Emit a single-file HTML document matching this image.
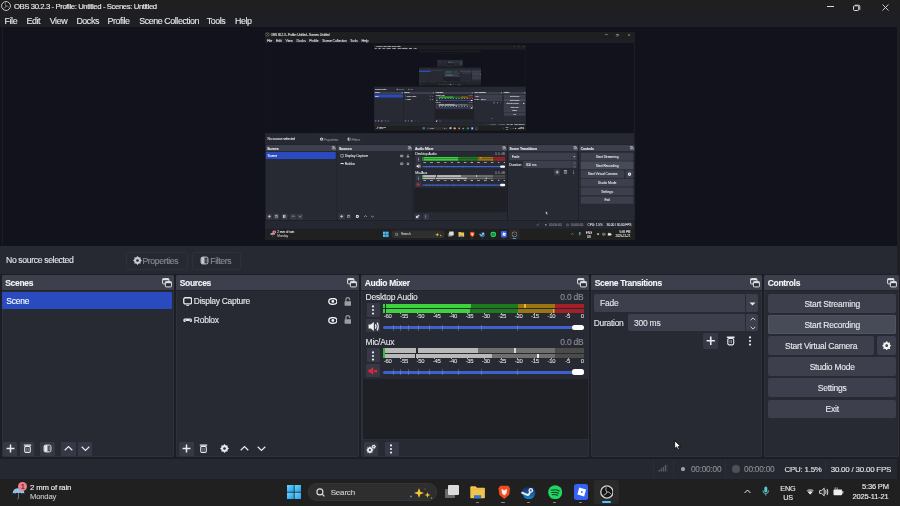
<!DOCTYPE html><html><head><meta charset="utf-8"><style>
html,body{margin:0;padding:0;background:#16171c;}
.scr{position:relative;width:900px;height:506px;overflow:hidden;font-family:"Liberation Sans", sans-serif;will-change:transform;}
.r,.t,.nest{position:absolute;}
.t{white-space:nowrap;-webkit-text-stroke:0.12px currentColor;}
.nest{width:900px;height:506px;transform-origin:0 0;transform:scale(0.41111);overflow:hidden;}
</style></head><body><div class="scr"><div class="r" style="left:0.00px;top:0.00px;width:900.00px;height:506.00px;background:#1c1e25;"></div>
<div class="r" style="left:0.00px;top:0.00px;width:900.00px;height:13.00px;background:#1f1f1f;"></div>
<svg class="r" style="left:1.00px;top:1.30px;" width="10" height="10" viewBox="0 0 14 14"><circle cx="7" cy="7" r="6.2" fill="#141414" stroke="#d4d4d4" stroke-width="1.3"/><path d="M7 7Q5.2 5.6 6.2 2.2M7 7Q9.1 6.3 11 8.9M7 7Q6.9 9.3 3.6 10.2" fill="none" stroke="#bdbdbd" stroke-width="0.9"/></svg>
<div class="t" style="left:13.90px;top:3.05px;font-size:7.74px;line-height:7.74px;color:#ececec;letter-spacing:-0.401px;">OBS 30.2.3 - Profile: Untitled - Scenes: Untitled</div>
<div class="r" style="left:827.00px;top:5.80px;width:6.50px;height:0.80px;background:#d8d8d8;"></div>
<svg class="r" style="left:853.00px;top:3.50px;" width="8" height="7" viewBox="0 0 8 7"><rect x="0.5" y="1.8" width="5.2" height="4.7" rx="1" fill="none" stroke="#ddd" stroke-width="1"/><path d="M2 1.2h3.8a1 1 0 0 1 1 1v3.6" fill="none" stroke="#ddd" stroke-width="0.9"/></svg>
<svg class="r" style="left:881.50px;top:3.50px;" width="7" height="7" viewBox="0 0 7 7"><path d="M0.5 0.5L6.5 6.5M6.5 0.5L0.5 6.5" stroke="#ddd" stroke-width="0.9"/></svg>
<div class="r" style="left:0.00px;top:13.00px;width:900.00px;height:14.00px;background:#1e1f24;"></div>
<div class="t" style="left:4.60px;top:17.06px;font-size:8.9px;line-height:8.9px;color:#e8e8ea;letter-spacing:-0.432px;">File</div>
<div class="t" style="left:26.60px;top:17.06px;font-size:8.9px;line-height:8.9px;color:#e8e8ea;letter-spacing:-0.432px;">Edit</div>
<div class="t" style="left:49.80px;top:17.06px;font-size:8.9px;line-height:8.9px;color:#e8e8ea;letter-spacing:-0.432px;">View</div>
<div class="t" style="left:76.40px;top:17.06px;font-size:8.9px;line-height:8.9px;color:#e8e8ea;letter-spacing:-0.432px;">Docks</div>
<div class="t" style="left:107.40px;top:17.06px;font-size:8.9px;line-height:8.9px;color:#e8e8ea;letter-spacing:-0.432px;">Profile</div>
<div class="t" style="left:139.30px;top:17.06px;font-size:8.9px;line-height:8.9px;color:#e8e8ea;letter-spacing:-0.432px;">Scene Collection</div>
<div class="t" style="left:206.70px;top:17.06px;font-size:8.9px;line-height:8.9px;color:#e8e8ea;letter-spacing:-0.432px;">Tools</div>
<div class="t" style="left:235.00px;top:17.06px;font-size:8.9px;line-height:8.9px;color:#e8e8ea;letter-spacing:-0.432px;">Help</div>
<div class="r" style="left:0.00px;top:27.00px;width:900.00px;height:218.50px;background:#11121c;"></div>
<div class="r" style="left:2.00px;top:27.00px;width:1.00px;height:218.00px;background:#1c1d24;"></div>
<div class="r" style="left:897.00px;top:27.00px;width:3.00px;height:479.00px;background:#1d1f25;"></div>
<div class="nest" style="left:265px;top:32.4px;"><div class="r" style="left:0.00px;top:0.00px;width:900.00px;height:506.00px;background:#1c1e25;"></div>
<div class="r" style="left:0.00px;top:0.00px;width:900.00px;height:13.00px;background:#1f1f1f;"></div>
<svg class="r" style="left:1.00px;top:1.30px;" width="10" height="10" viewBox="0 0 14 14"><circle cx="7" cy="7" r="6.2" fill="#141414" stroke="#d4d4d4" stroke-width="1.3"/><path d="M7 7Q5.2 5.6 6.2 2.2M7 7Q9.1 6.3 11 8.9M7 7Q6.9 9.3 3.6 10.2" fill="none" stroke="#bdbdbd" stroke-width="0.9"/></svg>
<div class="t" style="left:13.90px;top:3.05px;font-size:7.74px;line-height:7.74px;color:#ececec;letter-spacing:-0.401px;">OBS 30.2.3 - Profile: Untitled - Scenes: Untitled</div>
<div class="r" style="left:827.00px;top:5.80px;width:6.50px;height:0.80px;background:#d8d8d8;"></div>
<svg class="r" style="left:853.00px;top:3.50px;" width="8" height="7" viewBox="0 0 8 7"><rect x="0.5" y="1.8" width="5.2" height="4.7" rx="1" fill="none" stroke="#ddd" stroke-width="1"/><path d="M2 1.2h3.8a1 1 0 0 1 1 1v3.6" fill="none" stroke="#ddd" stroke-width="0.9"/></svg>
<svg class="r" style="left:881.50px;top:3.50px;" width="7" height="7" viewBox="0 0 7 7"><path d="M0.5 0.5L6.5 6.5M6.5 0.5L0.5 6.5" stroke="#ddd" stroke-width="0.9"/></svg>
<div class="r" style="left:0.00px;top:13.00px;width:900.00px;height:14.00px;background:#1e1f24;"></div>
<div class="t" style="left:4.60px;top:17.06px;font-size:8.9px;line-height:8.9px;color:#e8e8ea;letter-spacing:-0.432px;">File</div>
<div class="t" style="left:26.60px;top:17.06px;font-size:8.9px;line-height:8.9px;color:#e8e8ea;letter-spacing:-0.432px;">Edit</div>
<div class="t" style="left:49.80px;top:17.06px;font-size:8.9px;line-height:8.9px;color:#e8e8ea;letter-spacing:-0.432px;">View</div>
<div class="t" style="left:76.40px;top:17.06px;font-size:8.9px;line-height:8.9px;color:#e8e8ea;letter-spacing:-0.432px;">Docks</div>
<div class="t" style="left:107.40px;top:17.06px;font-size:8.9px;line-height:8.9px;color:#e8e8ea;letter-spacing:-0.432px;">Profile</div>
<div class="t" style="left:139.30px;top:17.06px;font-size:8.9px;line-height:8.9px;color:#e8e8ea;letter-spacing:-0.432px;">Scene Collection</div>
<div class="t" style="left:206.70px;top:17.06px;font-size:8.9px;line-height:8.9px;color:#e8e8ea;letter-spacing:-0.432px;">Tools</div>
<div class="t" style="left:235.00px;top:17.06px;font-size:8.9px;line-height:8.9px;color:#e8e8ea;letter-spacing:-0.432px;">Help</div>
<div class="r" style="left:0.00px;top:27.00px;width:900.00px;height:218.50px;background:#11121c;"></div>
<div class="r" style="left:2.00px;top:27.00px;width:1.00px;height:218.00px;background:#1c1d24;"></div>
<div class="r" style="left:897.00px;top:27.00px;width:3.00px;height:479.00px;background:#1d1f25;"></div>
<div class="nest" style="left:265px;top:32.4px;"><div class="r" style="left:0.00px;top:0.00px;width:900.00px;height:506.00px;background:#1c1e25;"></div>
<div class="r" style="left:0.00px;top:0.00px;width:900.00px;height:13.00px;background:#1f1f1f;"></div>
<svg class="r" style="left:1.00px;top:1.30px;" width="10" height="10" viewBox="0 0 14 14"><circle cx="7" cy="7" r="6.2" fill="#141414" stroke="#d4d4d4" stroke-width="1.3"/><path d="M7 7Q5.2 5.6 6.2 2.2M7 7Q9.1 6.3 11 8.9M7 7Q6.9 9.3 3.6 10.2" fill="none" stroke="#bdbdbd" stroke-width="0.9"/></svg>
<div class="t" style="left:13.90px;top:3.05px;font-size:7.74px;line-height:7.74px;color:#ececec;letter-spacing:-0.401px;">OBS 30.2.3 - Profile: Untitled - Scenes: Untitled</div>
<div class="r" style="left:827.00px;top:5.80px;width:6.50px;height:0.80px;background:#d8d8d8;"></div>
<svg class="r" style="left:853.00px;top:3.50px;" width="8" height="7" viewBox="0 0 8 7"><rect x="0.5" y="1.8" width="5.2" height="4.7" rx="1" fill="none" stroke="#ddd" stroke-width="1"/><path d="M2 1.2h3.8a1 1 0 0 1 1 1v3.6" fill="none" stroke="#ddd" stroke-width="0.9"/></svg>
<svg class="r" style="left:881.50px;top:3.50px;" width="7" height="7" viewBox="0 0 7 7"><path d="M0.5 0.5L6.5 6.5M6.5 0.5L0.5 6.5" stroke="#ddd" stroke-width="0.9"/></svg>
<div class="r" style="left:0.00px;top:13.00px;width:900.00px;height:14.00px;background:#1e1f24;"></div>
<div class="t" style="left:4.60px;top:17.06px;font-size:8.9px;line-height:8.9px;color:#e8e8ea;letter-spacing:-0.432px;">File</div>
<div class="t" style="left:26.60px;top:17.06px;font-size:8.9px;line-height:8.9px;color:#e8e8ea;letter-spacing:-0.432px;">Edit</div>
<div class="t" style="left:49.80px;top:17.06px;font-size:8.9px;line-height:8.9px;color:#e8e8ea;letter-spacing:-0.432px;">View</div>
<div class="t" style="left:76.40px;top:17.06px;font-size:8.9px;line-height:8.9px;color:#e8e8ea;letter-spacing:-0.432px;">Docks</div>
<div class="t" style="left:107.40px;top:17.06px;font-size:8.9px;line-height:8.9px;color:#e8e8ea;letter-spacing:-0.432px;">Profile</div>
<div class="t" style="left:139.30px;top:17.06px;font-size:8.9px;line-height:8.9px;color:#e8e8ea;letter-spacing:-0.432px;">Scene Collection</div>
<div class="t" style="left:206.70px;top:17.06px;font-size:8.9px;line-height:8.9px;color:#e8e8ea;letter-spacing:-0.432px;">Tools</div>
<div class="t" style="left:235.00px;top:17.06px;font-size:8.9px;line-height:8.9px;color:#e8e8ea;letter-spacing:-0.432px;">Help</div>
<div class="r" style="left:0.00px;top:27.00px;width:900.00px;height:218.50px;background:#11121c;"></div>
<div class="r" style="left:2.00px;top:27.00px;width:1.00px;height:218.00px;background:#1c1d24;"></div>
<div class="r" style="left:897.00px;top:27.00px;width:3.00px;height:479.00px;background:#1d1f25;"></div>
<div class="nest" style="left:265px;top:32.4px;"><div class="r" style="left:0.00px;top:0.00px;width:900.00px;height:506.00px;background:#1c1e25;"></div>
<div class="r" style="left:0.00px;top:0.00px;width:900.00px;height:13.00px;background:#1f1f1f;"></div>
<svg class="r" style="left:1.00px;top:1.30px;" width="10" height="10" viewBox="0 0 14 14"><circle cx="7" cy="7" r="6.2" fill="#141414" stroke="#d4d4d4" stroke-width="1.3"/><path d="M7 7Q5.2 5.6 6.2 2.2M7 7Q9.1 6.3 11 8.9M7 7Q6.9 9.3 3.6 10.2" fill="none" stroke="#bdbdbd" stroke-width="0.9"/></svg>
<div class="t" style="left:13.90px;top:3.05px;font-size:7.74px;line-height:7.74px;color:#ececec;letter-spacing:-0.401px;">OBS 30.2.3 - Profile: Untitled - Scenes: Untitled</div>
<div class="r" style="left:827.00px;top:5.80px;width:6.50px;height:0.80px;background:#d8d8d8;"></div>
<svg class="r" style="left:853.00px;top:3.50px;" width="8" height="7" viewBox="0 0 8 7"><rect x="0.5" y="1.8" width="5.2" height="4.7" rx="1" fill="none" stroke="#ddd" stroke-width="1"/><path d="M2 1.2h3.8a1 1 0 0 1 1 1v3.6" fill="none" stroke="#ddd" stroke-width="0.9"/></svg>
<svg class="r" style="left:881.50px;top:3.50px;" width="7" height="7" viewBox="0 0 7 7"><path d="M0.5 0.5L6.5 6.5M6.5 0.5L0.5 6.5" stroke="#ddd" stroke-width="0.9"/></svg>
<div class="r" style="left:0.00px;top:13.00px;width:900.00px;height:14.00px;background:#1e1f24;"></div>
<div class="t" style="left:4.60px;top:17.06px;font-size:8.9px;line-height:8.9px;color:#e8e8ea;letter-spacing:-0.432px;">File</div>
<div class="t" style="left:26.60px;top:17.06px;font-size:8.9px;line-height:8.9px;color:#e8e8ea;letter-spacing:-0.432px;">Edit</div>
<div class="t" style="left:49.80px;top:17.06px;font-size:8.9px;line-height:8.9px;color:#e8e8ea;letter-spacing:-0.432px;">View</div>
<div class="t" style="left:76.40px;top:17.06px;font-size:8.9px;line-height:8.9px;color:#e8e8ea;letter-spacing:-0.432px;">Docks</div>
<div class="t" style="left:107.40px;top:17.06px;font-size:8.9px;line-height:8.9px;color:#e8e8ea;letter-spacing:-0.432px;">Profile</div>
<div class="t" style="left:139.30px;top:17.06px;font-size:8.9px;line-height:8.9px;color:#e8e8ea;letter-spacing:-0.432px;">Scene Collection</div>
<div class="t" style="left:206.70px;top:17.06px;font-size:8.9px;line-height:8.9px;color:#e8e8ea;letter-spacing:-0.432px;">Tools</div>
<div class="t" style="left:235.00px;top:17.06px;font-size:8.9px;line-height:8.9px;color:#e8e8ea;letter-spacing:-0.432px;">Help</div>
<div class="r" style="left:0.00px;top:27.00px;width:900.00px;height:218.50px;background:#11121c;"></div>
<div class="r" style="left:2.00px;top:27.00px;width:1.00px;height:218.00px;background:#1c1d24;"></div>
<div class="r" style="left:897.00px;top:27.00px;width:3.00px;height:479.00px;background:#1d1f25;"></div>
<div class="nest" style="left:265px;top:32.4px;"><div class="r" style="left:0.00px;top:0.00px;width:900.00px;height:506.00px;background:#1c1e25;"></div>
<div class="r" style="left:0.00px;top:0.00px;width:900.00px;height:13.00px;background:#1f1f1f;"></div>
<svg class="r" style="left:1.00px;top:1.30px;" width="10" height="10" viewBox="0 0 14 14"><circle cx="7" cy="7" r="6.2" fill="#141414" stroke="#d4d4d4" stroke-width="1.3"/><path d="M7 7Q5.2 5.6 6.2 2.2M7 7Q9.1 6.3 11 8.9M7 7Q6.9 9.3 3.6 10.2" fill="none" stroke="#bdbdbd" stroke-width="0.9"/></svg>
<div class="t" style="left:13.90px;top:3.05px;font-size:7.74px;line-height:7.74px;color:#ececec;letter-spacing:-0.401px;">OBS 30.2.3 - Profile: Untitled - Scenes: Untitled</div>
<div class="r" style="left:827.00px;top:5.80px;width:6.50px;height:0.80px;background:#d8d8d8;"></div>
<svg class="r" style="left:853.00px;top:3.50px;" width="8" height="7" viewBox="0 0 8 7"><rect x="0.5" y="1.8" width="5.2" height="4.7" rx="1" fill="none" stroke="#ddd" stroke-width="1"/><path d="M2 1.2h3.8a1 1 0 0 1 1 1v3.6" fill="none" stroke="#ddd" stroke-width="0.9"/></svg>
<svg class="r" style="left:881.50px;top:3.50px;" width="7" height="7" viewBox="0 0 7 7"><path d="M0.5 0.5L6.5 6.5M6.5 0.5L0.5 6.5" stroke="#ddd" stroke-width="0.9"/></svg>
<div class="r" style="left:0.00px;top:13.00px;width:900.00px;height:14.00px;background:#1e1f24;"></div>
<div class="t" style="left:4.60px;top:17.06px;font-size:8.9px;line-height:8.9px;color:#e8e8ea;letter-spacing:-0.432px;">File</div>
<div class="t" style="left:26.60px;top:17.06px;font-size:8.9px;line-height:8.9px;color:#e8e8ea;letter-spacing:-0.432px;">Edit</div>
<div class="t" style="left:49.80px;top:17.06px;font-size:8.9px;line-height:8.9px;color:#e8e8ea;letter-spacing:-0.432px;">View</div>
<div class="t" style="left:76.40px;top:17.06px;font-size:8.9px;line-height:8.9px;color:#e8e8ea;letter-spacing:-0.432px;">Docks</div>
<div class="t" style="left:107.40px;top:17.06px;font-size:8.9px;line-height:8.9px;color:#e8e8ea;letter-spacing:-0.432px;">Profile</div>
<div class="t" style="left:139.30px;top:17.06px;font-size:8.9px;line-height:8.9px;color:#e8e8ea;letter-spacing:-0.432px;">Scene Collection</div>
<div class="t" style="left:206.70px;top:17.06px;font-size:8.9px;line-height:8.9px;color:#e8e8ea;letter-spacing:-0.432px;">Tools</div>
<div class="t" style="left:235.00px;top:17.06px;font-size:8.9px;line-height:8.9px;color:#e8e8ea;letter-spacing:-0.432px;">Help</div>
<div class="r" style="left:0.00px;top:27.00px;width:900.00px;height:218.50px;background:#11121c;"></div>
<div class="r" style="left:2.00px;top:27.00px;width:1.00px;height:218.00px;background:#1c1d24;"></div>
<div class="r" style="left:897.00px;top:27.00px;width:3.00px;height:479.00px;background:#1d1f25;"></div>
<div class="nest" style="left:265px;top:32.4px;"></div>
<div class="r" style="left:0.00px;top:245.50px;width:897.30px;height:28.50px;background:#262932;"></div>
<div class="t" style="left:6.00px;top:256.34px;font-size:8.69px;line-height:8.69px;color:#e4e5e9;letter-spacing:-0.376px;">No source selected</div>
<div class="r" style="left:125.5px;top:251.5px;width:62.7px;height:18px;border:1px solid #2e3039;box-sizing:border-box;border-radius:2px"></div>
<div class="r" style="left:192px;top:251.5px;width:48.7px;height:18px;border:1px solid #2e3039;box-sizing:border-box;border-radius:2px"></div>
<svg class="r" style="left:132.80px;top:256.30px;" width="9" height="9" viewBox="0 0 10 10"><path d="M8.35 3.69L8.53 4.28L9.66 4.41L9.66 5.59L8.53 5.72L8.35 6.31L8.30 6.44L8.00 6.99L8.71 7.88L7.88 8.71L6.99 8.00L6.44 8.30L6.31 8.35L5.72 8.53L5.59 9.66L4.41 9.66L4.28 8.53L3.69 8.35L3.56 8.30L3.01 8.00L2.12 8.71L1.29 7.88L2.00 6.99L1.70 6.44L1.65 6.31L1.47 5.72L0.34 5.59L0.34 4.41L1.47 4.28L1.65 3.69L1.70 3.56L2.00 3.01L1.29 2.12L2.12 1.29L3.01 2.00L3.56 1.70L3.69 1.65L4.28 1.47L4.41 0.34L5.59 0.34L5.72 1.47L6.31 1.65L6.44 1.70L6.99 2.00L7.88 1.29L8.71 2.12L8.00 3.01L8.30 3.56Z" fill="#c9cacd"/><circle cx="5" cy="5" r="3.5" fill="#c9cacd"/><circle cx="5" cy="5" r="1.45" fill="#252830"/></svg>
<svg class="r" style="left:199.80px;top:256.30px;" width="9" height="9" viewBox="0 0 10 10"><rect x="1.2" y="1.2" width="7.6" height="7.6" rx="1.6" fill="none" stroke="#c9cacd" stroke-width="1.1"/><path d="M2.3 1.5H4.6V8.5H2.3Q1.5 8.5 1.5 7.4V2.6Q1.5 1.5 2.3 1.5Z" fill="#c9cacd"/><rect x="4.6" y="1.5" width="1.3" height="7" fill="#c9cacd" opacity="0.55"/><path d="M7.3 3V7" stroke="#c9cacd" stroke-width="0.6" opacity="0.6"/></svg>
<div class="t" style="left:142.40px;top:256.54px;font-size:8.69px;line-height:8.69px;color:#8a8c94;letter-spacing:-0.376px;">Properties</div>
<div class="t" style="left:210.30px;top:256.54px;font-size:8.69px;line-height:8.69px;color:#8a8c94;letter-spacing:-0.376px;">Filters</div>
<div class="r" style="left:1.50px;top:275.20px;width:172.20px;height:182.30px;background:#272a33;border-radius:2px;box-shadow:inset 0 0 0 1px #2e313a;"></div>
<div class="r" style="left:1.50px;top:275.20px;width:172.20px;height:15.00px;background:#3d404c;border-radius:2px 2px 0 0;"></div>
<div class="r" style="left:1.50px;top:290.20px;width:172.20px;height:0.80px;background:#22242b;"></div>
<div class="t" style="left:5.30px;top:278.72px;font-size:8.48px;line-height:8.48px;color:#f4f4f6;font-weight:700;letter-spacing:-0.321px;">Scenes</div>
<svg class="r" style="left:161.90px;top:278.40px;" width="10" height="9.5" viewBox="0 0 10 9.5"><rect x="0.6" y="0.6" width="6.3" height="5.3" rx="0.8" fill="none" stroke="#e0e1e4" stroke-width="1"/><rect x="0.6" y="0.6" width="6.3" height="1.6" fill="#e0e1e4"/><rect x="3.4" y="3.6" width="6" height="5.3" rx="0.8" fill="#2a2d37" stroke="#e0e1e4" stroke-width="1"/><rect x="3.4" y="3.6" width="6" height="1.6" fill="#e0e1e4"/></svg>
<div class="r" style="left:176.00px;top:275.20px;width:182.80px;height:182.30px;background:#272a33;border-radius:2px;box-shadow:inset 0 0 0 1px #2e313a;"></div>
<div class="r" style="left:176.00px;top:275.20px;width:182.80px;height:15.00px;background:#3d404c;border-radius:2px 2px 0 0;"></div>
<div class="r" style="left:176.00px;top:290.20px;width:182.80px;height:0.80px;background:#22242b;"></div>
<div class="t" style="left:179.80px;top:278.72px;font-size:8.48px;line-height:8.48px;color:#f4f4f6;font-weight:700;letter-spacing:-0.321px;">Sources</div>
<svg class="r" style="left:347.00px;top:278.40px;" width="10" height="9.5" viewBox="0 0 10 9.5"><rect x="0.6" y="0.6" width="6.3" height="5.3" rx="0.8" fill="none" stroke="#e0e1e4" stroke-width="1"/><rect x="0.6" y="0.6" width="6.3" height="1.6" fill="#e0e1e4"/><rect x="3.4" y="3.6" width="6" height="5.3" rx="0.8" fill="#2a2d37" stroke="#e0e1e4" stroke-width="1"/><rect x="3.4" y="3.6" width="6" height="1.6" fill="#e0e1e4"/></svg>
<div class="r" style="left:361.00px;top:275.20px;width:227.50px;height:182.30px;background:#272a33;border-radius:2px;box-shadow:inset 0 0 0 1px #2e313a;"></div>
<div class="r" style="left:361.00px;top:275.20px;width:227.50px;height:15.00px;background:#3d404c;border-radius:2px 2px 0 0;"></div>
<div class="r" style="left:361.00px;top:290.20px;width:227.50px;height:0.80px;background:#22242b;"></div>
<div class="t" style="left:364.80px;top:278.72px;font-size:8.48px;line-height:8.48px;color:#f4f4f6;font-weight:700;letter-spacing:-0.321px;">Audio Mixer</div>
<svg class="r" style="left:576.70px;top:278.40px;" width="10" height="9.5" viewBox="0 0 10 9.5"><rect x="0.6" y="0.6" width="6.3" height="5.3" rx="0.8" fill="none" stroke="#e0e1e4" stroke-width="1"/><rect x="0.6" y="0.6" width="6.3" height="1.6" fill="#e0e1e4"/><rect x="3.4" y="3.6" width="6" height="5.3" rx="0.8" fill="#2a2d37" stroke="#e0e1e4" stroke-width="1"/><rect x="3.4" y="3.6" width="6" height="1.6" fill="#e0e1e4"/></svg>
<div class="r" style="left:591.00px;top:275.20px;width:170.50px;height:182.30px;background:#272a33;border-radius:2px;box-shadow:inset 0 0 0 1px #2e313a;"></div>
<div class="r" style="left:591.00px;top:275.20px;width:170.50px;height:15.00px;background:#3d404c;border-radius:2px 2px 0 0;"></div>
<div class="r" style="left:591.00px;top:290.20px;width:170.50px;height:0.80px;background:#22242b;"></div>
<div class="t" style="left:594.80px;top:278.72px;font-size:8.48px;line-height:8.48px;color:#f4f4f6;font-weight:700;letter-spacing:-0.321px;">Scene Transitions</div>
<svg class="r" style="left:749.70px;top:278.40px;" width="10" height="9.5" viewBox="0 0 10 9.5"><rect x="0.6" y="0.6" width="6.3" height="5.3" rx="0.8" fill="none" stroke="#e0e1e4" stroke-width="1"/><rect x="0.6" y="0.6" width="6.3" height="1.6" fill="#e0e1e4"/><rect x="3.4" y="3.6" width="6" height="5.3" rx="0.8" fill="#2a2d37" stroke="#e0e1e4" stroke-width="1"/><rect x="3.4" y="3.6" width="6" height="1.6" fill="#e0e1e4"/></svg>
<div class="r" style="left:764.00px;top:275.20px;width:134.60px;height:182.30px;background:#272a33;border-radius:2px;box-shadow:inset 0 0 0 1px #2e313a;"></div>
<div class="r" style="left:764.00px;top:275.20px;width:134.60px;height:15.00px;background:#3d404c;border-radius:2px 2px 0 0;"></div>
<div class="r" style="left:764.00px;top:290.20px;width:134.60px;height:0.80px;background:#22242b;"></div>
<div class="t" style="left:767.80px;top:278.72px;font-size:8.48px;line-height:8.48px;color:#f4f4f6;font-weight:700;letter-spacing:-0.321px;">Controls</div>
<svg class="r" style="left:886.80px;top:278.40px;" width="10" height="9.5" viewBox="0 0 10 9.5"><rect x="0.6" y="0.6" width="6.3" height="5.3" rx="0.8" fill="none" stroke="#e0e1e4" stroke-width="1"/><rect x="0.6" y="0.6" width="6.3" height="1.6" fill="#e0e1e4"/><rect x="3.4" y="3.6" width="6" height="5.3" rx="0.8" fill="#2a2d37" stroke="#e0e1e4" stroke-width="1"/><rect x="3.4" y="3.6" width="6" height="1.6" fill="#e0e1e4"/></svg>
<div class="r" style="left:2.00px;top:291.70px;width:170.00px;height:17.30px;background:#2a4ac0;border-radius:1px;"></div>
<div class="t" style="left:6.30px;top:296.82px;font-size:8.48px;line-height:8.48px;color:#ffffff;letter-spacing:-0.221px;">Scene</div>
<div class="r" style="left:2.90px;top:442.00px;width:14.40px;height:13.60px;background:#363945;border-radius:1px;"></div>
<svg class="r" style="left:5.60px;top:444.30px;" width="9" height="9" viewBox="0 0 10 10"><path d="M5 0.6V9.4M0.6 5H9.4" stroke="#e8e9ec" stroke-width="1.7"/></svg>
<div class="r" style="left:20.00px;top:442.00px;width:14.40px;height:13.60px;background:#363945;border-radius:1px;"></div>
<svg class="r" style="left:22.70px;top:444.30px;" width="9" height="9" viewBox="0 0 10 10"><rect x="0.8" y="0.5" width="8.4" height="1.5" rx="0.6" fill="#e8e9ec"/><rect x="1.9" y="2.6" width="6.2" height="6.7" rx="1.3" fill="none" stroke="#e8e9ec" stroke-width="1.2"/><path d="M4.2 4.2V7.6M5.8 4.2V7.6" stroke="#e8e9ec" stroke-width="0.7" opacity="0.7"/></svg>
<div class="r" style="left:40.00px;top:442.00px;width:14.70px;height:13.60px;background:#363945;border-radius:1px;"></div>
<svg class="r" style="left:42.85px;top:444.30px;" width="9" height="9" viewBox="0 0 10 10"><rect x="1.2" y="1.2" width="7.6" height="7.6" rx="1.6" fill="none" stroke="#e8e9ec" stroke-width="1.1"/><path d="M2.3 1.5H4.6V8.5H2.3Q1.5 8.5 1.5 7.4V2.6Q1.5 1.5 2.3 1.5Z" fill="#e8e9ec"/><rect x="4.6" y="1.5" width="1.3" height="7" fill="#e8e9ec" opacity="0.55"/><path d="M7.3 3V7" stroke="#e8e9ec" stroke-width="0.6" opacity="0.6"/></svg>
<div class="r" style="left:61.00px;top:442.00px;width:14.70px;height:13.60px;background:#363945;border-radius:1px;"></div>
<svg class="r" style="left:63.85px;top:444.30px;" width="9" height="9" viewBox="0 0 10 10"><path d="M0.8 7L5 2.8L9.2 7" fill="none" stroke="#e8e9ec" stroke-width="1.35"/></svg>
<div class="r" style="left:78.00px;top:442.00px;width:14.30px;height:13.60px;background:#363945;border-radius:1px;"></div>
<svg class="r" style="left:80.65px;top:444.30px;" width="9" height="9" viewBox="0 0 10 10"><path d="M0.8 3L5 7.2L9.2 3" fill="none" stroke="#e8e9ec" stroke-width="1.35"/></svg>
<svg class="r" style="left:182.70px;top:297.00px;" width="9.3" height="9.3" viewBox="0 0 10 10"><rect x="0.8" y="0.8" width="8.4" height="6.6" rx="1.5" fill="none" stroke="#e8e9ec" stroke-width="1.4"/><path d="M3.6 9H6.4" stroke="#e8e9ec" stroke-width="1.1"/></svg>
<div class="t" style="left:193.80px;top:297.02px;font-size:8.48px;line-height:8.48px;color:#e8e9ec;letter-spacing:-0.271px;">Display Capture</div>
<svg class="r" style="left:182.70px;top:317.60px;" width="9.3" height="4.6" viewBox="0 0 10 5"><path d="M1.5 0.6H8.5Q9.7 0.6 9.7 2.4Q9.7 4.4 8.5 4.4Q7.5 4.4 6.8 3.4H3.2Q2.5 4.4 1.5 4.4Q0.3 4.4 0.3 2.4Q0.3 0.6 1.5 0.6Z" fill="#e8e9ec"/><circle cx="2.3" cy="2.3" r="0.6" fill="#1f212a"/><circle cx="7.7" cy="2.3" r="0.6" fill="#1f212a"/></svg>
<div class="t" style="left:193.80px;top:315.72px;font-size:8.48px;line-height:8.48px;color:#e8e9ec;letter-spacing:-0.221px;">Roblox</div>
<svg class="r" style="left:327.50px;top:298.30px;" width="9.7" height="6.9" viewBox="0 0 10 7"><ellipse cx="5" cy="3.5" rx="4.2" ry="3" fill="none" stroke="#f4f4f4" stroke-width="1.35"/><circle cx="5" cy="3.5" r="1.4" fill="#f4f4f4"/></svg>
<svg class="r" style="left:327.50px;top:316.90px;" width="9.7" height="6.9" viewBox="0 0 10 7"><ellipse cx="5" cy="3.5" rx="4.2" ry="3" fill="none" stroke="#f4f4f4" stroke-width="1.35"/><circle cx="5" cy="3.5" r="1.4" fill="#f4f4f4"/></svg>
<svg class="r" style="left:343.60px;top:296.70px;" width="7.8" height="9.2" viewBox="0 0 8.2 9.6"><path d="M2 4.6V2.8Q2 0.7 4 0.7Q6 0.7 6 2.8V3.4" fill="none" stroke="#9d9ea2" stroke-width="1.2"/><rect x="0.6" y="4.4" width="7" height="4.8" rx="0.5" fill="#9d9ea2"/></svg>
<svg class="r" style="left:343.60px;top:315.30px;" width="7.8" height="9.2" viewBox="0 0 8.2 9.6"><path d="M2 4.6V2.8Q2 0.7 4 0.7Q6 0.7 6 2.8V3.4" fill="none" stroke="#9d9ea2" stroke-width="1.2"/><rect x="0.6" y="4.4" width="7" height="4.8" rx="0.5" fill="#9d9ea2"/></svg>
<div class="r" style="left:179.30px;top:442.00px;width:14.70px;height:13.60px;background:#363945;border-radius:1px;"></div>
<svg class="r" style="left:182.10px;top:444.30px;" width="9" height="9" viewBox="0 0 10 10"><path d="M5 0.6V9.4M0.6 5H9.4" stroke="#e8e9ec" stroke-width="1.7"/></svg>
<svg class="r" style="left:199.40px;top:444.30px;" width="9" height="9" viewBox="0 0 10 10"><rect x="0.8" y="0.5" width="8.4" height="1.5" rx="0.6" fill="#e8e9ec"/><rect x="1.9" y="2.6" width="6.2" height="6.7" rx="1.3" fill="none" stroke="#e8e9ec" stroke-width="1.2"/><path d="M4.2 4.2V7.6M5.8 4.2V7.6" stroke="#e8e9ec" stroke-width="0.7" opacity="0.7"/></svg>
<svg class="r" style="left:219.50px;top:444.30px;" width="9" height="9" viewBox="0 0 10 10"><path d="M8.35 3.69L8.53 4.28L9.66 4.41L9.66 5.59L8.53 5.72L8.35 6.31L8.30 6.44L8.00 6.99L8.71 7.88L7.88 8.71L6.99 8.00L6.44 8.30L6.31 8.35L5.72 8.53L5.59 9.66L4.41 9.66L4.28 8.53L3.69 8.35L3.56 8.30L3.01 8.00L2.12 8.71L1.29 7.88L2.00 6.99L1.70 6.44L1.65 6.31L1.47 5.72L0.34 5.59L0.34 4.41L1.47 4.28L1.65 3.69L1.70 3.56L2.00 3.01L1.29 2.12L2.12 1.29L3.01 2.00L3.56 1.70L3.69 1.65L4.28 1.47L4.41 0.34L5.59 0.34L5.72 1.47L6.31 1.65L6.44 1.70L6.99 2.00L7.88 1.29L8.71 2.12L8.00 3.01L8.30 3.56Z" fill="#e8e9ec"/><circle cx="5" cy="5" r="3.5" fill="#e8e9ec"/><circle cx="5" cy="5" r="1.45" fill="#272a33"/></svg>
<svg class="r" style="left:239.70px;top:444.30px;" width="9" height="9" viewBox="0 0 10 10"><path d="M0.8 7L5 2.8L9.2 7" fill="none" stroke="#e8e9ec" stroke-width="1.35"/></svg>
<svg class="r" style="left:257.20px;top:444.30px;" width="9" height="9" viewBox="0 0 10 10"><path d="M0.8 3L5 7.2L9.2 3" fill="none" stroke="#e8e9ec" stroke-width="1.35"/></svg>
<div class="r" style="left:361.50px;top:291.00px;width:227.00px;height:149.00px;background:#1f2026;box-shadow:inset 0 0 0 1px #2c2f38;"></div>
<div class="r" style="left:362.30px;top:291.00px;width:225.40px;height:42.60px;background:#272a33;"></div>
<div class="r" style="left:362.30px;top:334.40px;width:225.40px;height:45.10px;background:#272a33;"></div>
<div class="t" style="left:365.60px;top:292.82px;font-size:8.48px;line-height:8.48px;color:#e4e5e9;letter-spacing:-0.201px;">Desktop Audio</div>
<div class="t" style="right:316.50px;top:292.82px;font-size:8.48px;line-height:8.48px;color:#8d8f96;letter-spacing:-0.221px;">0.0 dB</div>
<div class="r" style="left:366.70px;top:303.30px;width:13.30px;height:13.40px;background:#363945;border-radius:1px;"></div>
<svg class="r" style="left:367.80px;top:305.00px;" width="10" height="10" viewBox="0 0 10 10"><circle cx="5" cy="1.4" r="1.1" fill="#e8e9ec"/><circle cx="5" cy="5" r="1.1" fill="#e8e9ec"/><circle cx="5" cy="8.6" r="1.1" fill="#e8e9ec"/></svg>
<div class="r" style="left:366.00px;top:319.30px;width:14.00px;height:12.70px;background:#363945;border-radius:1px;"></div>
<svg class="r" style="left:367.50px;top:320.60px;" width="11" height="11" viewBox="0 0 10 10"><path d="M0.5 3.2H2.5L5.3 0.9V9.1L2.5 6.8H0.5Z" fill="#f2f2f2"/><path d="M6.6 3.1Q7.8 5 6.6 6.9M8.3 1.5Q10.2 5 8.3 8.5" fill="none" stroke="#f2f2f2" stroke-width="1.2"/></svg>
<div class="r" style="left:383.00px;top:303.60px;width:87.70px;height:4.35px;background:#3cd43c;"></div>
<div class="r" style="left:470.70px;top:303.60px;width:47.60px;height:4.35px;background:#1e7a1e;"></div>
<div class="r" style="left:518.30px;top:303.60px;width:36.60px;height:4.35px;background:#9a7612;"></div>
<div class="r" style="left:554.90px;top:303.60px;width:29.10px;height:4.35px;background:#a51f27;"></div>
<div class="r" style="left:523.60px;top:303.60px;width:2.00px;height:4.35px;background:#f0b020;"></div>
<div class="r" style="left:383.00px;top:308.85px;width:86.60px;height:3.75px;background:#3cd43c;"></div>
<div class="r" style="left:469.60px;top:308.85px;width:48.70px;height:3.75px;background:#1e7a1e;"></div>
<div class="r" style="left:518.30px;top:308.85px;width:36.60px;height:3.75px;background:#9a7612;"></div>
<div class="r" style="left:554.90px;top:308.85px;width:29.10px;height:3.75px;background:#a51f27;"></div>
<div class="r" style="left:552.60px;top:308.85px;width:1.80px;height:3.75px;background:#f0b020;"></div>
<div class="r" style="left:385.00px;top:303.60px;width:1.00px;height:9.00px;background:#0d2a0d;"></div>
<div class="t" style="left:387.70px;top:313.77px;font-size:5.94px;line-height:5.94px;color:#dcdde0;letter-spacing:-0.305px;transform:translateX(-50%);">-60</div>
<div class="t" style="left:404.06px;top:313.77px;font-size:5.94px;line-height:5.94px;color:#dcdde0;letter-spacing:-0.305px;transform:translateX(-50%);">-55</div>
<div class="r" style="left:400.32px;top:312.90px;width:0.70px;height:1.20px;background:#b8b8b8;"></div>
<div class="t" style="left:420.42px;top:313.77px;font-size:5.94px;line-height:5.94px;color:#dcdde0;letter-spacing:-0.305px;transform:translateX(-50%);">-50</div>
<div class="r" style="left:417.05px;top:312.90px;width:0.70px;height:1.20px;background:#b8b8b8;"></div>
<div class="t" style="left:436.78px;top:313.77px;font-size:5.94px;line-height:5.94px;color:#dcdde0;letter-spacing:-0.305px;transform:translateX(-50%);">-45</div>
<div class="r" style="left:433.78px;top:312.90px;width:0.70px;height:1.20px;background:#b8b8b8;"></div>
<div class="t" style="left:453.14px;top:313.77px;font-size:5.94px;line-height:5.94px;color:#dcdde0;letter-spacing:-0.305px;transform:translateX(-50%);">-40</div>
<div class="r" style="left:450.50px;top:312.90px;width:0.70px;height:1.20px;background:#b8b8b8;"></div>
<div class="t" style="left:469.50px;top:313.77px;font-size:5.94px;line-height:5.94px;color:#dcdde0;letter-spacing:-0.305px;transform:translateX(-50%);">-35</div>
<div class="r" style="left:467.23px;top:312.90px;width:0.70px;height:1.20px;background:#b8b8b8;"></div>
<div class="t" style="left:485.86px;top:313.77px;font-size:5.94px;line-height:5.94px;color:#dcdde0;letter-spacing:-0.305px;transform:translateX(-50%);">-30</div>
<div class="r" style="left:483.95px;top:312.90px;width:0.70px;height:1.20px;background:#b8b8b8;"></div>
<div class="t" style="left:502.22px;top:313.77px;font-size:5.94px;line-height:5.94px;color:#dcdde0;letter-spacing:-0.305px;transform:translateX(-50%);">-25</div>
<div class="r" style="left:500.68px;top:312.90px;width:0.70px;height:1.20px;background:#b8b8b8;"></div>
<div class="t" style="left:518.58px;top:313.77px;font-size:5.94px;line-height:5.94px;color:#dcdde0;letter-spacing:-0.305px;transform:translateX(-50%);">-20</div>
<div class="r" style="left:517.40px;top:312.90px;width:0.70px;height:1.20px;background:#b8b8b8;"></div>
<div class="t" style="left:534.94px;top:313.77px;font-size:5.94px;line-height:5.94px;color:#dcdde0;letter-spacing:-0.305px;transform:translateX(-50%);">-15</div>
<div class="r" style="left:534.13px;top:312.90px;width:0.70px;height:1.20px;background:#b8b8b8;"></div>
<div class="t" style="left:551.30px;top:313.77px;font-size:5.94px;line-height:5.94px;color:#dcdde0;letter-spacing:-0.305px;transform:translateX(-50%);">-10</div>
<div class="r" style="left:550.85px;top:312.90px;width:0.70px;height:1.20px;background:#b8b8b8;"></div>
<div class="t" style="left:567.66px;top:313.77px;font-size:5.94px;line-height:5.94px;color:#dcdde0;letter-spacing:-0.305px;transform:translateX(-50%);">-5</div>
<div class="r" style="left:567.58px;top:312.90px;width:0.70px;height:1.20px;background:#b8b8b8;"></div>
<div class="t" style="right:316.00px;top:313.77px;font-size:5.94px;line-height:5.94px;color:#dcdde0;letter-spacing:-0.155px;">0</div>
<div class="r" style="left:383.00px;top:325.90px;width:200.00px;height:3.30px;background:#3e62cc;border-radius:1.5px;"></div>
<div class="r" style="left:392.70px;top:324.50px;width:0.70px;height:6.00px;background:rgba(190,185,160,0.3);"></div>
<div class="r" style="left:400.10px;top:324.50px;width:0.70px;height:6.00px;background:rgba(190,185,160,0.3);"></div>
<div class="r" style="left:408.20px;top:324.50px;width:0.70px;height:6.00px;background:rgba(190,185,160,0.3);"></div>
<div class="r" style="left:418.00px;top:324.50px;width:0.70px;height:6.00px;background:rgba(190,185,160,0.3);"></div>
<div class="r" style="left:429.00px;top:324.50px;width:0.70px;height:6.00px;background:rgba(190,185,160,0.3);"></div>
<div class="r" style="left:441.70px;top:324.50px;width:0.70px;height:6.00px;background:rgba(190,185,160,0.3);"></div>
<div class="r" style="left:458.40px;top:324.50px;width:0.70px;height:6.00px;background:rgba(190,185,160,0.3);"></div>
<div class="r" style="left:480.90px;top:324.50px;width:0.70px;height:6.00px;background:rgba(190,185,160,0.3);"></div>
<div class="r" style="left:517.20px;top:324.50px;width:0.70px;height:6.00px;background:rgba(190,185,160,0.3);"></div>
<div class="r" style="left:572.00px;top:324.60px;width:12.00px;height:5.80px;background:#ffffff;border-radius:2.5px;"></div>
<div class="t" style="left:365.60px;top:338.12px;font-size:8.48px;line-height:8.48px;color:#e4e5e9;letter-spacing:-0.221px;">Mic/Aux</div>
<div class="t" style="right:316.50px;top:338.12px;font-size:8.48px;line-height:8.48px;color:#8d8f96;letter-spacing:-0.221px;">0.0 dB</div>
<div class="r" style="left:366.70px;top:348.30px;width:13.30px;height:13.40px;background:#363945;border-radius:1px;"></div>
<svg class="r" style="left:367.80px;top:350.50px;" width="10" height="10" viewBox="0 0 10 10"><circle cx="5" cy="1.4" r="1.1" fill="#e8e9ec"/><circle cx="5" cy="5" r="1.1" fill="#e8e9ec"/><circle cx="5" cy="8.6" r="1.1" fill="#e8e9ec"/></svg>
<div class="r" style="left:366.00px;top:364.30px;width:14.00px;height:12.70px;background:#363945;border-radius:1px;"></div>
<svg class="r" style="left:367.50px;top:365.60px;" width="10" height="10" viewBox="0 0 10 10"><path d="M0.6 3.4H2.4L5.2 1V9L2.4 6.6H0.6Z" fill="#e0283c"/><path d="M6.4 3.9L9 6.3M9 3.9L6.4 6.3" stroke="#e0283c" stroke-width="1.4"/></svg>
<div class="r" style="left:383.00px;top:348.30px;width:33.00px;height:4.65px;background:#b9b9b9;"></div>
<div class="r" style="left:416.00px;top:348.30px;width:1.60px;height:4.65px;background:#272a33;"></div>
<div class="r" style="left:417.60px;top:348.30px;width:60.40px;height:4.65px;background:#b9b9b9;"></div>
<div class="r" style="left:478.00px;top:348.30px;width:76.70px;height:4.65px;background:#6f6f6f;"></div>
<div class="r" style="left:554.70px;top:348.30px;width:29.30px;height:4.65px;background:#4b4b4b;"></div>
<div class="r" style="left:514.00px;top:348.30px;width:1.80px;height:4.65px;background:#d8d8d8;"></div>
<div class="r" style="left:383.00px;top:353.85px;width:31.70px;height:3.75px;background:#b9b9b9;"></div>
<div class="r" style="left:414.70px;top:353.85px;width:1.60px;height:3.75px;background:#272a33;"></div>
<div class="r" style="left:416.30px;top:353.85px;width:75.70px;height:3.75px;background:#b9b9b9;"></div>
<div class="r" style="left:492.00px;top:353.85px;width:62.70px;height:3.75px;background:#6f6f6f;"></div>
<div class="r" style="left:554.70px;top:353.85px;width:29.30px;height:3.75px;background:#4b4b4b;"></div>
<div class="r" style="left:536.80px;top:353.85px;width:1.80px;height:3.75px;background:#e8e8e8;"></div>
<div class="r" style="left:383.30px;top:348.30px;width:2.00px;height:9.30px;background:#2fc22f;"></div>
<div class="t" style="left:387.70px;top:358.77px;font-size:5.94px;line-height:5.94px;color:#dcdde0;letter-spacing:-0.305px;transform:translateX(-50%);">-60</div>
<div class="t" style="left:404.06px;top:358.77px;font-size:5.94px;line-height:5.94px;color:#dcdde0;letter-spacing:-0.305px;transform:translateX(-50%);">-55</div>
<div class="r" style="left:400.32px;top:357.90px;width:0.70px;height:1.20px;background:#b8b8b8;"></div>
<div class="t" style="left:420.42px;top:358.77px;font-size:5.94px;line-height:5.94px;color:#dcdde0;letter-spacing:-0.305px;transform:translateX(-50%);">-50</div>
<div class="r" style="left:417.05px;top:357.90px;width:0.70px;height:1.20px;background:#b8b8b8;"></div>
<div class="t" style="left:436.78px;top:358.77px;font-size:5.94px;line-height:5.94px;color:#dcdde0;letter-spacing:-0.305px;transform:translateX(-50%);">-45</div>
<div class="r" style="left:433.78px;top:357.90px;width:0.70px;height:1.20px;background:#b8b8b8;"></div>
<div class="t" style="left:453.14px;top:358.77px;font-size:5.94px;line-height:5.94px;color:#dcdde0;letter-spacing:-0.305px;transform:translateX(-50%);">-40</div>
<div class="r" style="left:450.50px;top:357.90px;width:0.70px;height:1.20px;background:#b8b8b8;"></div>
<div class="t" style="left:469.50px;top:358.77px;font-size:5.94px;line-height:5.94px;color:#dcdde0;letter-spacing:-0.305px;transform:translateX(-50%);">-35</div>
<div class="r" style="left:467.23px;top:357.90px;width:0.70px;height:1.20px;background:#b8b8b8;"></div>
<div class="t" style="left:485.86px;top:358.77px;font-size:5.94px;line-height:5.94px;color:#dcdde0;letter-spacing:-0.305px;transform:translateX(-50%);">-30</div>
<div class="r" style="left:483.95px;top:357.90px;width:0.70px;height:1.20px;background:#b8b8b8;"></div>
<div class="t" style="left:502.22px;top:358.77px;font-size:5.94px;line-height:5.94px;color:#dcdde0;letter-spacing:-0.305px;transform:translateX(-50%);">-25</div>
<div class="r" style="left:500.68px;top:357.90px;width:0.70px;height:1.20px;background:#b8b8b8;"></div>
<div class="t" style="left:518.58px;top:358.77px;font-size:5.94px;line-height:5.94px;color:#dcdde0;letter-spacing:-0.305px;transform:translateX(-50%);">-20</div>
<div class="r" style="left:517.40px;top:357.90px;width:0.70px;height:1.20px;background:#b8b8b8;"></div>
<div class="t" style="left:534.94px;top:358.77px;font-size:5.94px;line-height:5.94px;color:#dcdde0;letter-spacing:-0.305px;transform:translateX(-50%);">-15</div>
<div class="r" style="left:534.13px;top:357.90px;width:0.70px;height:1.20px;background:#b8b8b8;"></div>
<div class="t" style="left:551.30px;top:358.77px;font-size:5.94px;line-height:5.94px;color:#dcdde0;letter-spacing:-0.305px;transform:translateX(-50%);">-10</div>
<div class="r" style="left:550.85px;top:357.90px;width:0.70px;height:1.20px;background:#b8b8b8;"></div>
<div class="t" style="left:567.66px;top:358.77px;font-size:5.94px;line-height:5.94px;color:#dcdde0;letter-spacing:-0.305px;transform:translateX(-50%);">-5</div>
<div class="r" style="left:567.58px;top:357.90px;width:0.70px;height:1.20px;background:#b8b8b8;"></div>
<div class="t" style="right:316.00px;top:358.77px;font-size:5.94px;line-height:5.94px;color:#dcdde0;letter-spacing:-0.155px;">0</div>
<div class="r" style="left:383.00px;top:370.70px;width:200.00px;height:3.30px;background:#3e62cc;border-radius:1.5px;"></div>
<div class="r" style="left:392.70px;top:369.30px;width:0.70px;height:6.00px;background:rgba(190,185,160,0.3);"></div>
<div class="r" style="left:400.10px;top:369.30px;width:0.70px;height:6.00px;background:rgba(190,185,160,0.3);"></div>
<div class="r" style="left:408.20px;top:369.30px;width:0.70px;height:6.00px;background:rgba(190,185,160,0.3);"></div>
<div class="r" style="left:418.00px;top:369.30px;width:0.70px;height:6.00px;background:rgba(190,185,160,0.3);"></div>
<div class="r" style="left:429.00px;top:369.30px;width:0.70px;height:6.00px;background:rgba(190,185,160,0.3);"></div>
<div class="r" style="left:441.70px;top:369.30px;width:0.70px;height:6.00px;background:rgba(190,185,160,0.3);"></div>
<div class="r" style="left:458.40px;top:369.30px;width:0.70px;height:6.00px;background:rgba(190,185,160,0.3);"></div>
<div class="r" style="left:480.90px;top:369.30px;width:0.70px;height:6.00px;background:rgba(190,185,160,0.3);"></div>
<div class="r" style="left:517.20px;top:369.30px;width:0.70px;height:6.00px;background:rgba(190,185,160,0.3);"></div>
<div class="r" style="left:572.00px;top:369.40px;width:12.00px;height:5.80px;background:#ffffff;border-radius:2.5px;"></div>
<div class="r" style="left:363.90px;top:441.70px;width:14.40px;height:13.90px;background:#363945;border-radius:1px;"></div>
<svg class="r" style="left:366.20px;top:444.20px;" width="10" height="10" viewBox="0 0 10 10"><path d="M6.41 5.02L6.55 5.46L7.37 5.56L7.37 6.44L6.55 6.54L6.41 6.98L6.37 7.08L6.15 7.49L6.67 8.15L6.05 8.77L5.39 8.25L4.98 8.47L4.88 8.51L4.44 8.65L4.34 9.47L3.46 9.47L3.36 8.65L2.92 8.51L2.82 8.47L2.41 8.25L1.75 8.77L1.13 8.15L1.65 7.49L1.43 7.08L1.39 6.98L1.25 6.54L0.43 6.44L0.43 5.56L1.25 5.46L1.39 5.02L1.43 4.92L1.65 4.51L1.13 3.85L1.75 3.23L2.41 3.75L2.82 3.53L2.92 3.49L3.36 3.35L3.46 2.53L4.34 2.53L4.44 3.35L4.88 3.49L4.98 3.53L5.39 3.75L6.05 3.23L6.67 3.85L6.15 4.51L6.37 4.92Z" fill="#e8e9ec"/><circle cx="3.9" cy="6" r="2.6" fill="#e8e9ec"/><circle cx="3.9" cy="6" r="1.0" fill="#32353f"/><path d="M9.29 1.79L9.44 2.15L9.97 2.23L9.97 2.97L9.44 3.05L9.29 3.41L9.25 3.49L9.01 3.79L9.20 4.30L8.57 4.66L8.23 4.24L7.84 4.30L7.76 4.30L7.37 4.24L7.03 4.66L6.40 4.30L6.59 3.79L6.35 3.49L6.31 3.41L6.16 3.05L5.63 2.97L5.63 2.23L6.16 2.15L6.31 1.79L6.35 1.71L6.59 1.41L6.40 0.90L7.03 0.54L7.37 0.96L7.76 0.90L7.84 0.90L8.23 0.96L8.57 0.54L9.20 0.90L9.01 1.41L9.25 1.71Z" fill="#e8e9ec"/><circle cx="7.8" cy="2.6" r="1.7" fill="#e8e9ec"/><circle cx="7.8" cy="2.6" r="0.7" fill="#32353f"/></svg>
<div class="r" style="left:384.70px;top:441.70px;width:14.50px;height:13.90px;background:#363945;border-radius:1px;"></div>
<svg class="r" style="left:386.30px;top:444.00px;" width="10" height="10" viewBox="0 0 10 10"><circle cx="5" cy="1.4" r="1.1" fill="#e8e9ec"/><circle cx="5" cy="5" r="1.1" fill="#e8e9ec"/><circle cx="5" cy="8.6" r="1.1" fill="#e8e9ec"/></svg>
<div class="r" style="left:593.70px;top:294.20px;width:164.60px;height:17.40px;background:#3d404c;border-radius:2px;"></div>
<div class="r" style="left:744.60px;top:294.20px;width:0.80px;height:17.40px;background:#2a2c35;"></div>
<svg class="r" style="left:748.50px;top:301.50px;" width="7" height="4" viewBox="0 0 7 4"><path d="M0.5 0.5H6.5L3.5 3.5Z" fill="#e8e8e8"/></svg>
<div class="t" style="left:600.00px;top:299.32px;font-size:8.48px;line-height:8.48px;color:#e4e5e9;letter-spacing:-0.221px;">Fade</div>
<div class="t" style="left:593.70px;top:318.92px;font-size:8.48px;line-height:8.48px;color:#e4e5e9;letter-spacing:-0.271px;">Duration</div>
<div class="r" style="left:628.00px;top:314.40px;width:130.30px;height:16.90px;background:#3d404c;border-radius:2px;"></div>
<div class="r" style="left:744.60px;top:314.40px;width:0.80px;height:16.90px;background:#2a2c35;"></div>
<svg class="r" style="left:749.50px;top:316.50px;" width="6" height="13" viewBox="0 0 6 13"><path d="M0.7 3.2L3 0.9L5.3 3.2M0.7 9.8L3 12.1L5.3 9.8" fill="none" stroke="#e0e0e0" stroke-width="0.9"/></svg>
<div class="t" style="left:634.00px;top:318.92px;font-size:8.48px;line-height:8.48px;color:#e4e5e9;letter-spacing:-0.221px;">300 ms</div>
<div class="r" style="left:703.00px;top:333.00px;width:14.70px;height:15.70px;background:#363945;border-radius:1px;"></div>
<svg class="r" style="left:705.60px;top:336.30px;" width="9.5" height="9.5" viewBox="0 0 10 10"><path d="M5 0.6V9.4M0.6 5H9.4" stroke="#e8e9ec" stroke-width="1.7"/></svg>
<svg class="r" style="left:726.00px;top:336.30px;" width="9.5" height="9.5" viewBox="0 0 10 10"><rect x="0.8" y="0.5" width="8.4" height="1.5" rx="0.6" fill="#e8e9ec"/><rect x="1.9" y="2.6" width="6.2" height="6.7" rx="1.3" fill="none" stroke="#e8e9ec" stroke-width="1.2"/><path d="M4.2 4.2V7.6M5.8 4.2V7.6" stroke="#e8e9ec" stroke-width="0.7" opacity="0.7"/></svg>
<svg class="r" style="left:745.00px;top:336.00px;" width="10" height="10" viewBox="0 0 10 10"><circle cx="5" cy="1.4" r="1.1" fill="#e8e9ec"/><circle cx="5" cy="5" r="1.1" fill="#e8e9ec"/><circle cx="5" cy="8.6" r="1.1" fill="#e8e9ec"/></svg>
<div class="r" style="left:768.20px;top:294.10px;width:128.00px;height:18.80px;background:#3d404c;border-radius:2px;"></div>
<div class="t" style="left:832.20px;top:299.62px;font-size:8.48px;line-height:8.48px;color:#e8e9ec;letter-spacing:-0.221px;transform:translateX(-50%);">Start Streaming</div>
<div class="r" style="left:768.20px;top:315.00px;width:128.00px;height:18.80px;background:#474b58;border-radius:2px;box-shadow:inset 0 0 0 0.8px #545763;"></div>
<div class="t" style="left:832.20px;top:320.52px;font-size:8.48px;line-height:8.48px;color:#e8e9ec;letter-spacing:-0.221px;transform:translateX(-50%);">Start Recording</div>
<div class="r" style="left:768.20px;top:357.30px;width:128.00px;height:18.80px;background:#3d404c;border-radius:2px;"></div>
<div class="t" style="left:832.20px;top:362.82px;font-size:8.48px;line-height:8.48px;color:#e8e9ec;letter-spacing:-0.221px;transform:translateX(-50%);">Studio Mode</div>
<div class="r" style="left:768.20px;top:378.40px;width:128.00px;height:18.80px;background:#3d404c;border-radius:2px;"></div>
<div class="t" style="left:832.20px;top:383.92px;font-size:8.48px;line-height:8.48px;color:#e8e9ec;letter-spacing:-0.221px;transform:translateX(-50%);">Settings</div>
<div class="r" style="left:768.20px;top:399.60px;width:128.00px;height:18.80px;background:#3d404c;border-radius:2px;"></div>
<div class="t" style="left:832.20px;top:405.12px;font-size:8.48px;line-height:8.48px;color:#e8e9ec;letter-spacing:-0.221px;transform:translateX(-50%);">Exit</div>
<div class="r" style="left:768.20px;top:336.00px;width:105.80px;height:18.80px;background:#3d404c;border-radius:2px;"></div>
<div class="t" style="left:821.10px;top:341.52px;font-size:8.48px;line-height:8.48px;color:#e8e9ec;letter-spacing:-0.221px;transform:translateX(-50%);">Start Virtual Camera</div>
<div class="r" style="left:877.00px;top:336.00px;width:19.00px;height:18.80px;background:#3d404c;border-radius:2px;"></div>
<svg class="r" style="left:881.80px;top:340.80px;" width="9.4" height="9.4" viewBox="0 0 10 10"><path d="M8.35 3.69L8.53 4.28L9.66 4.41L9.66 5.59L8.53 5.72L8.35 6.31L8.30 6.44L8.00 6.99L8.71 7.88L7.88 8.71L6.99 8.00L6.44 8.30L6.31 8.35L5.72 8.53L5.59 9.66L4.41 9.66L4.28 8.53L3.69 8.35L3.56 8.30L3.01 8.00L2.12 8.71L1.29 7.88L2.00 6.99L1.70 6.44L1.65 6.31L1.47 5.72L0.34 5.59L0.34 4.41L1.47 4.28L1.65 3.69L1.70 3.56L2.00 3.01L1.29 2.12L2.12 1.29L3.01 2.00L3.56 1.70L3.69 1.65L4.28 1.47L4.41 0.34L5.59 0.34L5.72 1.47L6.31 1.65L6.44 1.70L6.99 2.00L7.88 1.29L8.71 2.12L8.00 3.01L8.30 3.56Z" fill="#f4f4f4"/><circle cx="5" cy="5" r="3.5" fill="#f4f4f4"/><circle cx="5" cy="5" r="1.45" fill="#3a3d48"/></svg>
<div class="r" style="left:0.00px;top:458.50px;width:897.00px;height:20.00px;background:#252830;"></div>
<div class="r" style="left:653.20px;top:460.00px;width:0.80px;height:17.00px;background:#2c2e37;"></div>
<div class="r" style="left:673.40px;top:460.00px;width:0.80px;height:17.00px;background:#2c2e37;"></div>
<div class="r" style="left:725.00px;top:460.00px;width:0.80px;height:17.00px;background:#2c2e37;"></div>
<div class="r" style="left:825.20px;top:460.00px;width:0.80px;height:17.00px;background:#2c2e37;"></div>
<svg class="r" style="left:658.40px;top:462.50px;" width="9.2" height="9" viewBox="0 0 9.2 9"><path d="M0.5 8.5h1.3v-1.6h-1.3zM2.6 8.5h1.3v-3h-1.3zM4.7 8.5h1.3v-4.6h-1.3zM6.8 8.5h1.3v-6.4h-1.3zM8.9 8.5h0.3v-8h-0.3z" fill="#5e6068"/></svg>
<div class="r" style="left:681.00px;top:467.00px;width:3.70px;height:3.70px;background:#9fa0a5;border-radius:50%;"></div>
<div class="t" style="left:690.90px;top:465.70px;font-size:8.27px;line-height:8.27px;color:#8d8f96;letter-spacing:-0.215px;">00:00:00</div>
<div class="r" style="left:731.60px;top:464.50px;width:8.70px;height:8.70px;background:#4e5058;border-radius:50%;"></div>
<div class="t" style="left:744.00px;top:465.70px;font-size:8.27px;line-height:8.27px;color:#8d8f96;letter-spacing:-0.215px;">00:00:00</div>
<div class="t" style="left:784.50px;top:466.01px;font-size:7.9px;line-height:7.9px;color:#e4e5e9;letter-spacing:-0.206px;">CPU: 1.5%</div>
<div class="t" style="left:830.70px;top:465.97px;font-size:7.95px;line-height:7.95px;color:#e4e5e9;letter-spacing:-0.207px;">30.00 / 30.00 FPS</div>
<div class="r" style="left:0.00px;top:478.50px;width:900.00px;height:27.50px;background:#202020;"></div>
<svg class="r" style="left:11.80px;top:486.80px;" width="13" height="13" viewBox="0 0 13 13"><path d="M0.6 6.4Q0.9 1.2 6.5 1.2Q12.1 1.2 12.4 6.4Q10.9 5.4 9.6 6.4Q8 5.3 6.5 6.4Q5 5.3 3.4 6.4Q2.1 5.4 0.6 6.4Z" fill="#8cc4ee"/><path d="M6.5 6.2V10.9Q6.5 12.2 5.3 12" fill="none" stroke="#7a7a7a" stroke-width="0.9"/></svg>
<div class="r" style="left:18.30px;top:482.20px;width:8.90px;height:8.80px;background:#ef7f8c;border-radius:50%;"></div>
<div class="t" style="left:22.75px;top:483.56px;font-size:6.78px;line-height:6.78px;color:#3a1a1f;letter-spacing:-0.177px;transform:translateX(-50%);">1</div>
<div class="t" style="left:30.00px;top:483.55px;font-size:7.74px;line-height:7.74px;color:#f2f2f2;letter-spacing:-0.151px;">2 mm of rain</div>
<div class="t" style="left:30.00px;top:492.84px;font-size:7.63px;line-height:7.63px;color:#c4c4c4;letter-spacing:-0.169px;">Monday</div>
<svg class="r" style="left:287.10px;top:484.90px;" width="14.4" height="14.4" viewBox="0 0 14.4 14.4"><defs><linearGradient id="wg" x1="0" y1="0" x2="1" y2="1"><stop offset="0" stop-color="#6fd3ff"/><stop offset="1" stop-color="#1a9fe8"/></linearGradient></defs><rect x="0" y="0" width="6.8" height="6.8" fill="url(#wg)"/><rect x="7.6" y="0" width="6.8" height="6.8" fill="url(#wg)"/><rect x="0" y="7.6" width="6.8" height="6.8" fill="url(#wg)"/><rect x="7.6" y="7.6" width="6.8" height="6.8" fill="url(#wg)"/></svg>
<div class="r" style="left:308.40px;top:482.80px;width:128.90px;height:18.10px;background:#2e2e2e;border-radius:9px;box-shadow:inset 0 0 0 0.6px #3a3a3a;"></div>
<svg class="r" style="left:315.60px;top:487.60px;" width="9" height="9" viewBox="0 0 9 9"><circle cx="3.9" cy="3.9" r="3" fill="none" stroke="#e0e0e0" stroke-width="1.1"/><path d="M6.1 6.1L8.4 8.4" stroke="#e0e0e0" stroke-width="1.2"/></svg>
<div class="t" style="left:330.70px;top:488.78px;font-size:8.06px;line-height:8.06px;color:#d0d0d0;letter-spacing:-0.21px;">Search</div>
<svg class="r" style="left:409.00px;top:486.50px;" width="24" height="12" viewBox="0 0 24 12"><path d="M10 1L11.3 4.7L15 6L11.3 7.3L10 11L8.7 7.3L5 6L8.7 4.7Z" fill="#f5c531"/><path d="M18.5 5L19.2 7.3L21.5 8L19.2 8.7L18.5 11L17.8 8.7L15.5 8L17.8 7.3Z" fill="#f5c531"/><circle cx="2" cy="9.5" r="1" fill="#3a8fe0"/><circle cx="22.5" cy="11" r="0.8" fill="#7ab04a"/><circle cx="16" cy="2" r="0.6" fill="#e0603a"/></svg>
<div class="r" style="left:445.00px;top:489.00px;width:10.00px;height:9.00px;background:#6a6a6a;border-radius:1px;"></div>
<div class="r" style="left:448.20px;top:485.00px;width:11.00px;height:9.50px;background:#dcdcdc;border-radius:1px;"></div>
<svg class="r" style="left:470.00px;top:486.00px;" width="15.2" height="12.5" viewBox="0 0 15.2 12.5"><path d="M0.3 1.2Q0.3 0.3 1.2 0.3H5.5L7 1.8H14.1Q14.9 1.8 14.9 2.6V11.4Q14.9 12.2 14.1 12.2H1.1Q0.3 12.2 0.3 11.4Z" fill="#f2c64c"/><path d="M0.3 3.2H14.9" stroke="#d9a92e" stroke-width="0.5"/><rect x="4" y="9.2" width="7.2" height="3" fill="#2f78d8"/></svg>
<svg class="r" style="left:497.50px;top:484.50px;" width="12.5" height="14.5" viewBox="0 0 12.5 14.5"><path d="M2.2 0.8H10.3L12 3.2L11.2 9.8L6.25 14L1.3 9.8L0.5 3.2Z" fill="#f14c21"/><path d="M3.5 3.8L6.25 5.2L9 3.8L8.6 8.2L6.25 10.6L3.9 8.2Z" fill="#fbe9e4"/></svg>
<svg class="r" style="left:521.00px;top:486.00px;" width="14.8" height="13.3" viewBox="0 0 14.8 13.3"><defs><linearGradient id="sg" x1="0" y1="0" x2="0" y2="1"><stop offset="0" stop-color="#14205a"/><stop offset="1" stop-color="#1886c9"/></linearGradient></defs><ellipse cx="7.8" cy="6.65" rx="6.6" ry="6.5" fill="url(#sg)"/><circle cx="9.8" cy="4.4" r="2.4" fill="#e8ecf2"/><circle cx="9.8" cy="4.4" r="1.1" fill="#5a6a90"/><path d="M0.4 6.3L5.5 8.6Q7 9.4 8.2 7.8L9.2 6" stroke="#e8ecf2" stroke-width="2" fill="none"/></svg>
<svg class="r" style="left:548.00px;top:484.50px;" width="14.4" height="14.4" viewBox="0 0 14.4 14.4"><circle cx="7.2" cy="7.2" r="7" fill="#1ed760"/><path d="M3.4 5.3Q7.6 3.9 11.2 5.9M3.9 7.6Q7.3 6.6 10.4 8.2M4.3 9.8Q7 9 9.5 10.2" fill="none" stroke="#0f3a20" stroke-width="1.1" stroke-linecap="round"/></svg>
<div class="r" style="left:573.80px;top:484.30px;width:14.30px;height:15.30px;background:#3561f5;border-radius:2.5px;"></div>
<svg class="r" style="left:575.50px;top:486.00px;" width="11" height="12" viewBox="0 0 11 12"><path d="M3.2 1.6L10 3.4L8.2 10.4L1.4 8.6Z" fill="#ffffff"/><rect x="5" y="5.2" width="1.6" height="1.6" fill="#3561f5"/></svg>
<div class="r" style="left:594.00px;top:480.00px;width:24.70px;height:23.90px;background:#2a2a2a;border-radius:3px;"></div>
<svg class="r" style="left:599.70px;top:484.50px;" width="13.8" height="14" viewBox="0 0 14 14"><circle cx="7" cy="7" r="6.2" fill="#141414" stroke="#d4d4d4" stroke-width="1.3"/><path d="M7 7Q5.2 5.6 6.2 2.2M7 7Q9.1 6.3 11 8.9M7 7Q6.9 9.3 3.6 10.2" fill="none" stroke="#bdbdbd" stroke-width="0.9"/></svg>
<div class="r" style="left:601.80px;top:501.40px;width:9.70px;height:1.90px;background:#4cc2ff;border-radius:1px;"></div>
<div class="r" style="left:476.00px;top:501.70px;width:3.20px;height:1.00px;background:#8a8a8a;border-radius:0.5px;"></div>
<div class="r" style="left:501.40px;top:501.70px;width:3.20px;height:1.00px;background:#8a8a8a;border-radius:0.5px;"></div>
<div class="r" style="left:526.80px;top:501.70px;width:3.20px;height:1.00px;background:#8a8a8a;border-radius:0.5px;"></div>
<div class="r" style="left:553.20px;top:501.70px;width:3.20px;height:1.00px;background:#8a8a8a;border-radius:0.5px;"></div>
<div class="r" style="left:579.20px;top:501.70px;width:3.20px;height:1.00px;background:#8a8a8a;border-radius:0.5px;"></div>
<svg class="r" style="left:743.60px;top:489.30px;" width="7" height="4.6" viewBox="0 0 7 4.6"><path d="M0.6 4L3.5 1L6.4 4" fill="none" stroke="#f0f0f0" stroke-width="1"/></svg>
<svg class="r" style="left:761.50px;top:486.30px;" width="7.5" height="10" viewBox="0 0 7.5 10"><rect x="2.3" y="0.5" width="3" height="5.8" rx="1.5" fill="#5fc6d0"/><path d="M0.9 4.4Q0.9 7.6 3.8 7.6Q6.6 7.6 6.6 4.4M3.8 7.6V9.6" fill="none" stroke="#5fc6d0" stroke-width="0.9"/></svg>
<div class="t" style="left:787.80px;top:484.50px;font-size:7.21px;line-height:7.21px;color:#ededed;letter-spacing:-0.188px;transform:translateX(-50%);">ENG</div>
<div class="t" style="left:788.00px;top:493.70px;font-size:7.21px;line-height:7.21px;color:#ededed;letter-spacing:-0.188px;transform:translateX(-50%);">US</div>
<svg class="r" style="left:805.60px;top:488.00px;" width="8.4" height="7" viewBox="0 0 8.4 7"><path d="M0.5 2.4Q4.2 -0.6 7.9 2.4L4.2 6.6Z" fill="#8e8e8e"/><path d="M2 4.2Q4.2 2.6 6.4 4.2L4.2 6.6Z" fill="#e8e8e8"/></svg>
<svg class="r" style="left:818.80px;top:486.60px;" width="10" height="10" viewBox="0 0 10 10"><path d="M0.6 3.6H2.6L5.2 1.2V8.8L2.6 6.4H0.6Z" fill="none" stroke="#eeeeee" stroke-width="0.9"/><path d="M6.6 3.2Q7.5 5 6.6 6.8M8.1 2Q9.6 5 8.1 8" fill="none" stroke="#eeeeee" stroke-width="0.9"/></svg>
<svg class="r" style="left:833.00px;top:486.50px;" width="10.5" height="9.5" viewBox="0 0 10.5 9.5"><rect x="0.5" y="2.5" width="8.6" height="5.8" rx="1" fill="#eeeeee"/><rect x="9.3" y="4.2" width="1" height="2.4" fill="#eeeeee"/><path d="M2.2 0.4V2.6M4.2 0.4V2.6" stroke="#eeeeee" stroke-width="0.7"/></svg>
<div class="t" style="right:11.30px;top:483.42px;font-size:7.53px;line-height:7.53px;color:#f0f0f0;letter-spacing:-0.196px;">5:36 PM</div>
<div class="t" style="right:11.50px;top:492.92px;font-size:7.53px;line-height:7.53px;color:#f0f0f0;letter-spacing:-0.196px;">2025-11-21</div>
<svg class="r" style="left:705.00px;top:420.00px;" width="7.5" height="10.5" viewBox="0 0 7.5 10.5"><path d="M0.7 0.7V8.6L2.6 6.9L4 9.9L5.4 9.3L4.1 6.4H6.7Z" fill="#ffffff" stroke="#000000" stroke-width="0.8" stroke-linejoin="round"/></svg></div>
<div class="r" style="left:0.00px;top:245.50px;width:897.30px;height:28.50px;background:#262932;"></div>
<div class="t" style="left:6.00px;top:256.34px;font-size:8.69px;line-height:8.69px;color:#e4e5e9;letter-spacing:-0.376px;">No source selected</div>
<div class="r" style="left:125.5px;top:251.5px;width:62.7px;height:18px;border:1px solid #2e3039;box-sizing:border-box;border-radius:2px"></div>
<div class="r" style="left:192px;top:251.5px;width:48.7px;height:18px;border:1px solid #2e3039;box-sizing:border-box;border-radius:2px"></div>
<svg class="r" style="left:132.80px;top:256.30px;" width="9" height="9" viewBox="0 0 10 10"><path d="M8.35 3.69L8.53 4.28L9.66 4.41L9.66 5.59L8.53 5.72L8.35 6.31L8.30 6.44L8.00 6.99L8.71 7.88L7.88 8.71L6.99 8.00L6.44 8.30L6.31 8.35L5.72 8.53L5.59 9.66L4.41 9.66L4.28 8.53L3.69 8.35L3.56 8.30L3.01 8.00L2.12 8.71L1.29 7.88L2.00 6.99L1.70 6.44L1.65 6.31L1.47 5.72L0.34 5.59L0.34 4.41L1.47 4.28L1.65 3.69L1.70 3.56L2.00 3.01L1.29 2.12L2.12 1.29L3.01 2.00L3.56 1.70L3.69 1.65L4.28 1.47L4.41 0.34L5.59 0.34L5.72 1.47L6.31 1.65L6.44 1.70L6.99 2.00L7.88 1.29L8.71 2.12L8.00 3.01L8.30 3.56Z" fill="#c9cacd"/><circle cx="5" cy="5" r="3.5" fill="#c9cacd"/><circle cx="5" cy="5" r="1.45" fill="#252830"/></svg>
<svg class="r" style="left:199.80px;top:256.30px;" width="9" height="9" viewBox="0 0 10 10"><rect x="1.2" y="1.2" width="7.6" height="7.6" rx="1.6" fill="none" stroke="#c9cacd" stroke-width="1.1"/><path d="M2.3 1.5H4.6V8.5H2.3Q1.5 8.5 1.5 7.4V2.6Q1.5 1.5 2.3 1.5Z" fill="#c9cacd"/><rect x="4.6" y="1.5" width="1.3" height="7" fill="#c9cacd" opacity="0.55"/><path d="M7.3 3V7" stroke="#c9cacd" stroke-width="0.6" opacity="0.6"/></svg>
<div class="t" style="left:142.40px;top:256.54px;font-size:8.69px;line-height:8.69px;color:#8a8c94;letter-spacing:-0.376px;">Properties</div>
<div class="t" style="left:210.30px;top:256.54px;font-size:8.69px;line-height:8.69px;color:#8a8c94;letter-spacing:-0.376px;">Filters</div>
<div class="r" style="left:1.50px;top:275.20px;width:172.20px;height:182.30px;background:#272a33;border-radius:2px;box-shadow:inset 0 0 0 1px #2e313a;"></div>
<div class="r" style="left:1.50px;top:275.20px;width:172.20px;height:15.00px;background:#3d404c;border-radius:2px 2px 0 0;"></div>
<div class="r" style="left:1.50px;top:290.20px;width:172.20px;height:0.80px;background:#22242b;"></div>
<div class="t" style="left:5.30px;top:278.72px;font-size:8.48px;line-height:8.48px;color:#f4f4f6;font-weight:700;letter-spacing:-0.321px;">Scenes</div>
<svg class="r" style="left:161.90px;top:278.40px;" width="10" height="9.5" viewBox="0 0 10 9.5"><rect x="0.6" y="0.6" width="6.3" height="5.3" rx="0.8" fill="none" stroke="#e0e1e4" stroke-width="1"/><rect x="0.6" y="0.6" width="6.3" height="1.6" fill="#e0e1e4"/><rect x="3.4" y="3.6" width="6" height="5.3" rx="0.8" fill="#2a2d37" stroke="#e0e1e4" stroke-width="1"/><rect x="3.4" y="3.6" width="6" height="1.6" fill="#e0e1e4"/></svg>
<div class="r" style="left:176.00px;top:275.20px;width:182.80px;height:182.30px;background:#272a33;border-radius:2px;box-shadow:inset 0 0 0 1px #2e313a;"></div>
<div class="r" style="left:176.00px;top:275.20px;width:182.80px;height:15.00px;background:#3d404c;border-radius:2px 2px 0 0;"></div>
<div class="r" style="left:176.00px;top:290.20px;width:182.80px;height:0.80px;background:#22242b;"></div>
<div class="t" style="left:179.80px;top:278.72px;font-size:8.48px;line-height:8.48px;color:#f4f4f6;font-weight:700;letter-spacing:-0.321px;">Sources</div>
<svg class="r" style="left:347.00px;top:278.40px;" width="10" height="9.5" viewBox="0 0 10 9.5"><rect x="0.6" y="0.6" width="6.3" height="5.3" rx="0.8" fill="none" stroke="#e0e1e4" stroke-width="1"/><rect x="0.6" y="0.6" width="6.3" height="1.6" fill="#e0e1e4"/><rect x="3.4" y="3.6" width="6" height="5.3" rx="0.8" fill="#2a2d37" stroke="#e0e1e4" stroke-width="1"/><rect x="3.4" y="3.6" width="6" height="1.6" fill="#e0e1e4"/></svg>
<div class="r" style="left:361.00px;top:275.20px;width:227.50px;height:182.30px;background:#272a33;border-radius:2px;box-shadow:inset 0 0 0 1px #2e313a;"></div>
<div class="r" style="left:361.00px;top:275.20px;width:227.50px;height:15.00px;background:#3d404c;border-radius:2px 2px 0 0;"></div>
<div class="r" style="left:361.00px;top:290.20px;width:227.50px;height:0.80px;background:#22242b;"></div>
<div class="t" style="left:364.80px;top:278.72px;font-size:8.48px;line-height:8.48px;color:#f4f4f6;font-weight:700;letter-spacing:-0.321px;">Audio Mixer</div>
<svg class="r" style="left:576.70px;top:278.40px;" width="10" height="9.5" viewBox="0 0 10 9.5"><rect x="0.6" y="0.6" width="6.3" height="5.3" rx="0.8" fill="none" stroke="#e0e1e4" stroke-width="1"/><rect x="0.6" y="0.6" width="6.3" height="1.6" fill="#e0e1e4"/><rect x="3.4" y="3.6" width="6" height="5.3" rx="0.8" fill="#2a2d37" stroke="#e0e1e4" stroke-width="1"/><rect x="3.4" y="3.6" width="6" height="1.6" fill="#e0e1e4"/></svg>
<div class="r" style="left:591.00px;top:275.20px;width:170.50px;height:182.30px;background:#272a33;border-radius:2px;box-shadow:inset 0 0 0 1px #2e313a;"></div>
<div class="r" style="left:591.00px;top:275.20px;width:170.50px;height:15.00px;background:#3d404c;border-radius:2px 2px 0 0;"></div>
<div class="r" style="left:591.00px;top:290.20px;width:170.50px;height:0.80px;background:#22242b;"></div>
<div class="t" style="left:594.80px;top:278.72px;font-size:8.48px;line-height:8.48px;color:#f4f4f6;font-weight:700;letter-spacing:-0.321px;">Scene Transitions</div>
<svg class="r" style="left:749.70px;top:278.40px;" width="10" height="9.5" viewBox="0 0 10 9.5"><rect x="0.6" y="0.6" width="6.3" height="5.3" rx="0.8" fill="none" stroke="#e0e1e4" stroke-width="1"/><rect x="0.6" y="0.6" width="6.3" height="1.6" fill="#e0e1e4"/><rect x="3.4" y="3.6" width="6" height="5.3" rx="0.8" fill="#2a2d37" stroke="#e0e1e4" stroke-width="1"/><rect x="3.4" y="3.6" width="6" height="1.6" fill="#e0e1e4"/></svg>
<div class="r" style="left:764.00px;top:275.20px;width:134.60px;height:182.30px;background:#272a33;border-radius:2px;box-shadow:inset 0 0 0 1px #2e313a;"></div>
<div class="r" style="left:764.00px;top:275.20px;width:134.60px;height:15.00px;background:#3d404c;border-radius:2px 2px 0 0;"></div>
<div class="r" style="left:764.00px;top:290.20px;width:134.60px;height:0.80px;background:#22242b;"></div>
<div class="t" style="left:767.80px;top:278.72px;font-size:8.48px;line-height:8.48px;color:#f4f4f6;font-weight:700;letter-spacing:-0.321px;">Controls</div>
<svg class="r" style="left:886.80px;top:278.40px;" width="10" height="9.5" viewBox="0 0 10 9.5"><rect x="0.6" y="0.6" width="6.3" height="5.3" rx="0.8" fill="none" stroke="#e0e1e4" stroke-width="1"/><rect x="0.6" y="0.6" width="6.3" height="1.6" fill="#e0e1e4"/><rect x="3.4" y="3.6" width="6" height="5.3" rx="0.8" fill="#2a2d37" stroke="#e0e1e4" stroke-width="1"/><rect x="3.4" y="3.6" width="6" height="1.6" fill="#e0e1e4"/></svg>
<div class="r" style="left:2.00px;top:291.70px;width:170.00px;height:17.30px;background:#2a4ac0;border-radius:1px;"></div>
<div class="t" style="left:6.30px;top:296.82px;font-size:8.48px;line-height:8.48px;color:#ffffff;letter-spacing:-0.221px;">Scene</div>
<div class="r" style="left:2.90px;top:442.00px;width:14.40px;height:13.60px;background:#363945;border-radius:1px;"></div>
<svg class="r" style="left:5.60px;top:444.30px;" width="9" height="9" viewBox="0 0 10 10"><path d="M5 0.6V9.4M0.6 5H9.4" stroke="#e8e9ec" stroke-width="1.7"/></svg>
<div class="r" style="left:20.00px;top:442.00px;width:14.40px;height:13.60px;background:#363945;border-radius:1px;"></div>
<svg class="r" style="left:22.70px;top:444.30px;" width="9" height="9" viewBox="0 0 10 10"><rect x="0.8" y="0.5" width="8.4" height="1.5" rx="0.6" fill="#e8e9ec"/><rect x="1.9" y="2.6" width="6.2" height="6.7" rx="1.3" fill="none" stroke="#e8e9ec" stroke-width="1.2"/><path d="M4.2 4.2V7.6M5.8 4.2V7.6" stroke="#e8e9ec" stroke-width="0.7" opacity="0.7"/></svg>
<div class="r" style="left:40.00px;top:442.00px;width:14.70px;height:13.60px;background:#363945;border-radius:1px;"></div>
<svg class="r" style="left:42.85px;top:444.30px;" width="9" height="9" viewBox="0 0 10 10"><rect x="1.2" y="1.2" width="7.6" height="7.6" rx="1.6" fill="none" stroke="#e8e9ec" stroke-width="1.1"/><path d="M2.3 1.5H4.6V8.5H2.3Q1.5 8.5 1.5 7.4V2.6Q1.5 1.5 2.3 1.5Z" fill="#e8e9ec"/><rect x="4.6" y="1.5" width="1.3" height="7" fill="#e8e9ec" opacity="0.55"/><path d="M7.3 3V7" stroke="#e8e9ec" stroke-width="0.6" opacity="0.6"/></svg>
<div class="r" style="left:61.00px;top:442.00px;width:14.70px;height:13.60px;background:#363945;border-radius:1px;"></div>
<svg class="r" style="left:63.85px;top:444.30px;" width="9" height="9" viewBox="0 0 10 10"><path d="M0.8 7L5 2.8L9.2 7" fill="none" stroke="#e8e9ec" stroke-width="1.35"/></svg>
<div class="r" style="left:78.00px;top:442.00px;width:14.30px;height:13.60px;background:#363945;border-radius:1px;"></div>
<svg class="r" style="left:80.65px;top:444.30px;" width="9" height="9" viewBox="0 0 10 10"><path d="M0.8 3L5 7.2L9.2 3" fill="none" stroke="#e8e9ec" stroke-width="1.35"/></svg>
<svg class="r" style="left:182.70px;top:297.00px;" width="9.3" height="9.3" viewBox="0 0 10 10"><rect x="0.8" y="0.8" width="8.4" height="6.6" rx="1.5" fill="none" stroke="#e8e9ec" stroke-width="1.4"/><path d="M3.6 9H6.4" stroke="#e8e9ec" stroke-width="1.1"/></svg>
<div class="t" style="left:193.80px;top:297.02px;font-size:8.48px;line-height:8.48px;color:#e8e9ec;letter-spacing:-0.271px;">Display Capture</div>
<svg class="r" style="left:182.70px;top:317.60px;" width="9.3" height="4.6" viewBox="0 0 10 5"><path d="M1.5 0.6H8.5Q9.7 0.6 9.7 2.4Q9.7 4.4 8.5 4.4Q7.5 4.4 6.8 3.4H3.2Q2.5 4.4 1.5 4.4Q0.3 4.4 0.3 2.4Q0.3 0.6 1.5 0.6Z" fill="#e8e9ec"/><circle cx="2.3" cy="2.3" r="0.6" fill="#1f212a"/><circle cx="7.7" cy="2.3" r="0.6" fill="#1f212a"/></svg>
<div class="t" style="left:193.80px;top:315.72px;font-size:8.48px;line-height:8.48px;color:#e8e9ec;letter-spacing:-0.221px;">Roblox</div>
<svg class="r" style="left:327.50px;top:298.30px;" width="9.7" height="6.9" viewBox="0 0 10 7"><ellipse cx="5" cy="3.5" rx="4.2" ry="3" fill="none" stroke="#f4f4f4" stroke-width="1.35"/><circle cx="5" cy="3.5" r="1.4" fill="#f4f4f4"/></svg>
<svg class="r" style="left:327.50px;top:316.90px;" width="9.7" height="6.9" viewBox="0 0 10 7"><ellipse cx="5" cy="3.5" rx="4.2" ry="3" fill="none" stroke="#f4f4f4" stroke-width="1.35"/><circle cx="5" cy="3.5" r="1.4" fill="#f4f4f4"/></svg>
<svg class="r" style="left:343.60px;top:296.70px;" width="7.8" height="9.2" viewBox="0 0 8.2 9.6"><path d="M2 4.6V2.8Q2 0.7 4 0.7Q6 0.7 6 2.8V3.4" fill="none" stroke="#9d9ea2" stroke-width="1.2"/><rect x="0.6" y="4.4" width="7" height="4.8" rx="0.5" fill="#9d9ea2"/></svg>
<svg class="r" style="left:343.60px;top:315.30px;" width="7.8" height="9.2" viewBox="0 0 8.2 9.6"><path d="M2 4.6V2.8Q2 0.7 4 0.7Q6 0.7 6 2.8V3.4" fill="none" stroke="#9d9ea2" stroke-width="1.2"/><rect x="0.6" y="4.4" width="7" height="4.8" rx="0.5" fill="#9d9ea2"/></svg>
<div class="r" style="left:179.30px;top:442.00px;width:14.70px;height:13.60px;background:#363945;border-radius:1px;"></div>
<svg class="r" style="left:182.10px;top:444.30px;" width="9" height="9" viewBox="0 0 10 10"><path d="M5 0.6V9.4M0.6 5H9.4" stroke="#e8e9ec" stroke-width="1.7"/></svg>
<svg class="r" style="left:199.40px;top:444.30px;" width="9" height="9" viewBox="0 0 10 10"><rect x="0.8" y="0.5" width="8.4" height="1.5" rx="0.6" fill="#e8e9ec"/><rect x="1.9" y="2.6" width="6.2" height="6.7" rx="1.3" fill="none" stroke="#e8e9ec" stroke-width="1.2"/><path d="M4.2 4.2V7.6M5.8 4.2V7.6" stroke="#e8e9ec" stroke-width="0.7" opacity="0.7"/></svg>
<svg class="r" style="left:219.50px;top:444.30px;" width="9" height="9" viewBox="0 0 10 10"><path d="M8.35 3.69L8.53 4.28L9.66 4.41L9.66 5.59L8.53 5.72L8.35 6.31L8.30 6.44L8.00 6.99L8.71 7.88L7.88 8.71L6.99 8.00L6.44 8.30L6.31 8.35L5.72 8.53L5.59 9.66L4.41 9.66L4.28 8.53L3.69 8.35L3.56 8.30L3.01 8.00L2.12 8.71L1.29 7.88L2.00 6.99L1.70 6.44L1.65 6.31L1.47 5.72L0.34 5.59L0.34 4.41L1.47 4.28L1.65 3.69L1.70 3.56L2.00 3.01L1.29 2.12L2.12 1.29L3.01 2.00L3.56 1.70L3.69 1.65L4.28 1.47L4.41 0.34L5.59 0.34L5.72 1.47L6.31 1.65L6.44 1.70L6.99 2.00L7.88 1.29L8.71 2.12L8.00 3.01L8.30 3.56Z" fill="#e8e9ec"/><circle cx="5" cy="5" r="3.5" fill="#e8e9ec"/><circle cx="5" cy="5" r="1.45" fill="#272a33"/></svg>
<svg class="r" style="left:239.70px;top:444.30px;" width="9" height="9" viewBox="0 0 10 10"><path d="M0.8 7L5 2.8L9.2 7" fill="none" stroke="#e8e9ec" stroke-width="1.35"/></svg>
<svg class="r" style="left:257.20px;top:444.30px;" width="9" height="9" viewBox="0 0 10 10"><path d="M0.8 3L5 7.2L9.2 3" fill="none" stroke="#e8e9ec" stroke-width="1.35"/></svg>
<div class="r" style="left:361.50px;top:291.00px;width:227.00px;height:149.00px;background:#1f2026;box-shadow:inset 0 0 0 1px #2c2f38;"></div>
<div class="r" style="left:362.30px;top:291.00px;width:225.40px;height:42.60px;background:#272a33;"></div>
<div class="r" style="left:362.30px;top:334.40px;width:225.40px;height:45.10px;background:#272a33;"></div>
<div class="t" style="left:365.60px;top:292.82px;font-size:8.48px;line-height:8.48px;color:#e4e5e9;letter-spacing:-0.201px;">Desktop Audio</div>
<div class="t" style="right:316.50px;top:292.82px;font-size:8.48px;line-height:8.48px;color:#8d8f96;letter-spacing:-0.221px;">0.0 dB</div>
<div class="r" style="left:366.70px;top:303.30px;width:13.30px;height:13.40px;background:#363945;border-radius:1px;"></div>
<svg class="r" style="left:367.80px;top:305.00px;" width="10" height="10" viewBox="0 0 10 10"><circle cx="5" cy="1.4" r="1.1" fill="#e8e9ec"/><circle cx="5" cy="5" r="1.1" fill="#e8e9ec"/><circle cx="5" cy="8.6" r="1.1" fill="#e8e9ec"/></svg>
<div class="r" style="left:366.00px;top:319.30px;width:14.00px;height:12.70px;background:#363945;border-radius:1px;"></div>
<svg class="r" style="left:367.50px;top:320.60px;" width="11" height="11" viewBox="0 0 10 10"><path d="M0.5 3.2H2.5L5.3 0.9V9.1L2.5 6.8H0.5Z" fill="#f2f2f2"/><path d="M6.6 3.1Q7.8 5 6.6 6.9M8.3 1.5Q10.2 5 8.3 8.5" fill="none" stroke="#f2f2f2" stroke-width="1.2"/></svg>
<div class="r" style="left:383.00px;top:303.60px;width:87.70px;height:4.35px;background:#3cd43c;"></div>
<div class="r" style="left:470.70px;top:303.60px;width:47.60px;height:4.35px;background:#1e7a1e;"></div>
<div class="r" style="left:518.30px;top:303.60px;width:36.60px;height:4.35px;background:#9a7612;"></div>
<div class="r" style="left:554.90px;top:303.60px;width:29.10px;height:4.35px;background:#a51f27;"></div>
<div class="r" style="left:523.60px;top:303.60px;width:2.00px;height:4.35px;background:#f0b020;"></div>
<div class="r" style="left:383.00px;top:308.85px;width:86.60px;height:3.75px;background:#3cd43c;"></div>
<div class="r" style="left:469.60px;top:308.85px;width:48.70px;height:3.75px;background:#1e7a1e;"></div>
<div class="r" style="left:518.30px;top:308.85px;width:36.60px;height:3.75px;background:#9a7612;"></div>
<div class="r" style="left:554.90px;top:308.85px;width:29.10px;height:3.75px;background:#a51f27;"></div>
<div class="r" style="left:552.60px;top:308.85px;width:1.80px;height:3.75px;background:#f0b020;"></div>
<div class="r" style="left:385.00px;top:303.60px;width:1.00px;height:9.00px;background:#0d2a0d;"></div>
<div class="t" style="left:387.70px;top:313.77px;font-size:5.94px;line-height:5.94px;color:#dcdde0;letter-spacing:-0.305px;transform:translateX(-50%);">-60</div>
<div class="t" style="left:404.06px;top:313.77px;font-size:5.94px;line-height:5.94px;color:#dcdde0;letter-spacing:-0.305px;transform:translateX(-50%);">-55</div>
<div class="r" style="left:400.32px;top:312.90px;width:0.70px;height:1.20px;background:#b8b8b8;"></div>
<div class="t" style="left:420.42px;top:313.77px;font-size:5.94px;line-height:5.94px;color:#dcdde0;letter-spacing:-0.305px;transform:translateX(-50%);">-50</div>
<div class="r" style="left:417.05px;top:312.90px;width:0.70px;height:1.20px;background:#b8b8b8;"></div>
<div class="t" style="left:436.78px;top:313.77px;font-size:5.94px;line-height:5.94px;color:#dcdde0;letter-spacing:-0.305px;transform:translateX(-50%);">-45</div>
<div class="r" style="left:433.78px;top:312.90px;width:0.70px;height:1.20px;background:#b8b8b8;"></div>
<div class="t" style="left:453.14px;top:313.77px;font-size:5.94px;line-height:5.94px;color:#dcdde0;letter-spacing:-0.305px;transform:translateX(-50%);">-40</div>
<div class="r" style="left:450.50px;top:312.90px;width:0.70px;height:1.20px;background:#b8b8b8;"></div>
<div class="t" style="left:469.50px;top:313.77px;font-size:5.94px;line-height:5.94px;color:#dcdde0;letter-spacing:-0.305px;transform:translateX(-50%);">-35</div>
<div class="r" style="left:467.23px;top:312.90px;width:0.70px;height:1.20px;background:#b8b8b8;"></div>
<div class="t" style="left:485.86px;top:313.77px;font-size:5.94px;line-height:5.94px;color:#dcdde0;letter-spacing:-0.305px;transform:translateX(-50%);">-30</div>
<div class="r" style="left:483.95px;top:312.90px;width:0.70px;height:1.20px;background:#b8b8b8;"></div>
<div class="t" style="left:502.22px;top:313.77px;font-size:5.94px;line-height:5.94px;color:#dcdde0;letter-spacing:-0.305px;transform:translateX(-50%);">-25</div>
<div class="r" style="left:500.68px;top:312.90px;width:0.70px;height:1.20px;background:#b8b8b8;"></div>
<div class="t" style="left:518.58px;top:313.77px;font-size:5.94px;line-height:5.94px;color:#dcdde0;letter-spacing:-0.305px;transform:translateX(-50%);">-20</div>
<div class="r" style="left:517.40px;top:312.90px;width:0.70px;height:1.20px;background:#b8b8b8;"></div>
<div class="t" style="left:534.94px;top:313.77px;font-size:5.94px;line-height:5.94px;color:#dcdde0;letter-spacing:-0.305px;transform:translateX(-50%);">-15</div>
<div class="r" style="left:534.13px;top:312.90px;width:0.70px;height:1.20px;background:#b8b8b8;"></div>
<div class="t" style="left:551.30px;top:313.77px;font-size:5.94px;line-height:5.94px;color:#dcdde0;letter-spacing:-0.305px;transform:translateX(-50%);">-10</div>
<div class="r" style="left:550.85px;top:312.90px;width:0.70px;height:1.20px;background:#b8b8b8;"></div>
<div class="t" style="left:567.66px;top:313.77px;font-size:5.94px;line-height:5.94px;color:#dcdde0;letter-spacing:-0.305px;transform:translateX(-50%);">-5</div>
<div class="r" style="left:567.58px;top:312.90px;width:0.70px;height:1.20px;background:#b8b8b8;"></div>
<div class="t" style="right:316.00px;top:313.77px;font-size:5.94px;line-height:5.94px;color:#dcdde0;letter-spacing:-0.155px;">0</div>
<div class="r" style="left:383.00px;top:325.90px;width:200.00px;height:3.30px;background:#3e62cc;border-radius:1.5px;"></div>
<div class="r" style="left:392.70px;top:324.50px;width:0.70px;height:6.00px;background:rgba(190,185,160,0.3);"></div>
<div class="r" style="left:400.10px;top:324.50px;width:0.70px;height:6.00px;background:rgba(190,185,160,0.3);"></div>
<div class="r" style="left:408.20px;top:324.50px;width:0.70px;height:6.00px;background:rgba(190,185,160,0.3);"></div>
<div class="r" style="left:418.00px;top:324.50px;width:0.70px;height:6.00px;background:rgba(190,185,160,0.3);"></div>
<div class="r" style="left:429.00px;top:324.50px;width:0.70px;height:6.00px;background:rgba(190,185,160,0.3);"></div>
<div class="r" style="left:441.70px;top:324.50px;width:0.70px;height:6.00px;background:rgba(190,185,160,0.3);"></div>
<div class="r" style="left:458.40px;top:324.50px;width:0.70px;height:6.00px;background:rgba(190,185,160,0.3);"></div>
<div class="r" style="left:480.90px;top:324.50px;width:0.70px;height:6.00px;background:rgba(190,185,160,0.3);"></div>
<div class="r" style="left:517.20px;top:324.50px;width:0.70px;height:6.00px;background:rgba(190,185,160,0.3);"></div>
<div class="r" style="left:572.00px;top:324.60px;width:12.00px;height:5.80px;background:#ffffff;border-radius:2.5px;"></div>
<div class="t" style="left:365.60px;top:338.12px;font-size:8.48px;line-height:8.48px;color:#e4e5e9;letter-spacing:-0.221px;">Mic/Aux</div>
<div class="t" style="right:316.50px;top:338.12px;font-size:8.48px;line-height:8.48px;color:#8d8f96;letter-spacing:-0.221px;">0.0 dB</div>
<div class="r" style="left:366.70px;top:348.30px;width:13.30px;height:13.40px;background:#363945;border-radius:1px;"></div>
<svg class="r" style="left:367.80px;top:350.50px;" width="10" height="10" viewBox="0 0 10 10"><circle cx="5" cy="1.4" r="1.1" fill="#e8e9ec"/><circle cx="5" cy="5" r="1.1" fill="#e8e9ec"/><circle cx="5" cy="8.6" r="1.1" fill="#e8e9ec"/></svg>
<div class="r" style="left:366.00px;top:364.30px;width:14.00px;height:12.70px;background:#363945;border-radius:1px;"></div>
<svg class="r" style="left:367.50px;top:365.60px;" width="10" height="10" viewBox="0 0 10 10"><path d="M0.6 3.4H2.4L5.2 1V9L2.4 6.6H0.6Z" fill="#e0283c"/><path d="M6.4 3.9L9 6.3M9 3.9L6.4 6.3" stroke="#e0283c" stroke-width="1.4"/></svg>
<div class="r" style="left:383.00px;top:348.30px;width:33.00px;height:4.65px;background:#b9b9b9;"></div>
<div class="r" style="left:416.00px;top:348.30px;width:1.60px;height:4.65px;background:#272a33;"></div>
<div class="r" style="left:417.60px;top:348.30px;width:60.40px;height:4.65px;background:#b9b9b9;"></div>
<div class="r" style="left:478.00px;top:348.30px;width:76.70px;height:4.65px;background:#6f6f6f;"></div>
<div class="r" style="left:554.70px;top:348.30px;width:29.30px;height:4.65px;background:#4b4b4b;"></div>
<div class="r" style="left:514.00px;top:348.30px;width:1.80px;height:4.65px;background:#d8d8d8;"></div>
<div class="r" style="left:383.00px;top:353.85px;width:31.70px;height:3.75px;background:#b9b9b9;"></div>
<div class="r" style="left:414.70px;top:353.85px;width:1.60px;height:3.75px;background:#272a33;"></div>
<div class="r" style="left:416.30px;top:353.85px;width:75.70px;height:3.75px;background:#b9b9b9;"></div>
<div class="r" style="left:492.00px;top:353.85px;width:62.70px;height:3.75px;background:#6f6f6f;"></div>
<div class="r" style="left:554.70px;top:353.85px;width:29.30px;height:3.75px;background:#4b4b4b;"></div>
<div class="r" style="left:536.80px;top:353.85px;width:1.80px;height:3.75px;background:#e8e8e8;"></div>
<div class="r" style="left:383.30px;top:348.30px;width:2.00px;height:9.30px;background:#2fc22f;"></div>
<div class="t" style="left:387.70px;top:358.77px;font-size:5.94px;line-height:5.94px;color:#dcdde0;letter-spacing:-0.305px;transform:translateX(-50%);">-60</div>
<div class="t" style="left:404.06px;top:358.77px;font-size:5.94px;line-height:5.94px;color:#dcdde0;letter-spacing:-0.305px;transform:translateX(-50%);">-55</div>
<div class="r" style="left:400.32px;top:357.90px;width:0.70px;height:1.20px;background:#b8b8b8;"></div>
<div class="t" style="left:420.42px;top:358.77px;font-size:5.94px;line-height:5.94px;color:#dcdde0;letter-spacing:-0.305px;transform:translateX(-50%);">-50</div>
<div class="r" style="left:417.05px;top:357.90px;width:0.70px;height:1.20px;background:#b8b8b8;"></div>
<div class="t" style="left:436.78px;top:358.77px;font-size:5.94px;line-height:5.94px;color:#dcdde0;letter-spacing:-0.305px;transform:translateX(-50%);">-45</div>
<div class="r" style="left:433.78px;top:357.90px;width:0.70px;height:1.20px;background:#b8b8b8;"></div>
<div class="t" style="left:453.14px;top:358.77px;font-size:5.94px;line-height:5.94px;color:#dcdde0;letter-spacing:-0.305px;transform:translateX(-50%);">-40</div>
<div class="r" style="left:450.50px;top:357.90px;width:0.70px;height:1.20px;background:#b8b8b8;"></div>
<div class="t" style="left:469.50px;top:358.77px;font-size:5.94px;line-height:5.94px;color:#dcdde0;letter-spacing:-0.305px;transform:translateX(-50%);">-35</div>
<div class="r" style="left:467.23px;top:357.90px;width:0.70px;height:1.20px;background:#b8b8b8;"></div>
<div class="t" style="left:485.86px;top:358.77px;font-size:5.94px;line-height:5.94px;color:#dcdde0;letter-spacing:-0.305px;transform:translateX(-50%);">-30</div>
<div class="r" style="left:483.95px;top:357.90px;width:0.70px;height:1.20px;background:#b8b8b8;"></div>
<div class="t" style="left:502.22px;top:358.77px;font-size:5.94px;line-height:5.94px;color:#dcdde0;letter-spacing:-0.305px;transform:translateX(-50%);">-25</div>
<div class="r" style="left:500.68px;top:357.90px;width:0.70px;height:1.20px;background:#b8b8b8;"></div>
<div class="t" style="left:518.58px;top:358.77px;font-size:5.94px;line-height:5.94px;color:#dcdde0;letter-spacing:-0.305px;transform:translateX(-50%);">-20</div>
<div class="r" style="left:517.40px;top:357.90px;width:0.70px;height:1.20px;background:#b8b8b8;"></div>
<div class="t" style="left:534.94px;top:358.77px;font-size:5.94px;line-height:5.94px;color:#dcdde0;letter-spacing:-0.305px;transform:translateX(-50%);">-15</div>
<div class="r" style="left:534.13px;top:357.90px;width:0.70px;height:1.20px;background:#b8b8b8;"></div>
<div class="t" style="left:551.30px;top:358.77px;font-size:5.94px;line-height:5.94px;color:#dcdde0;letter-spacing:-0.305px;transform:translateX(-50%);">-10</div>
<div class="r" style="left:550.85px;top:357.90px;width:0.70px;height:1.20px;background:#b8b8b8;"></div>
<div class="t" style="left:567.66px;top:358.77px;font-size:5.94px;line-height:5.94px;color:#dcdde0;letter-spacing:-0.305px;transform:translateX(-50%);">-5</div>
<div class="r" style="left:567.58px;top:357.90px;width:0.70px;height:1.20px;background:#b8b8b8;"></div>
<div class="t" style="right:316.00px;top:358.77px;font-size:5.94px;line-height:5.94px;color:#dcdde0;letter-spacing:-0.155px;">0</div>
<div class="r" style="left:383.00px;top:370.70px;width:200.00px;height:3.30px;background:#3e62cc;border-radius:1.5px;"></div>
<div class="r" style="left:392.70px;top:369.30px;width:0.70px;height:6.00px;background:rgba(190,185,160,0.3);"></div>
<div class="r" style="left:400.10px;top:369.30px;width:0.70px;height:6.00px;background:rgba(190,185,160,0.3);"></div>
<div class="r" style="left:408.20px;top:369.30px;width:0.70px;height:6.00px;background:rgba(190,185,160,0.3);"></div>
<div class="r" style="left:418.00px;top:369.30px;width:0.70px;height:6.00px;background:rgba(190,185,160,0.3);"></div>
<div class="r" style="left:429.00px;top:369.30px;width:0.70px;height:6.00px;background:rgba(190,185,160,0.3);"></div>
<div class="r" style="left:441.70px;top:369.30px;width:0.70px;height:6.00px;background:rgba(190,185,160,0.3);"></div>
<div class="r" style="left:458.40px;top:369.30px;width:0.70px;height:6.00px;background:rgba(190,185,160,0.3);"></div>
<div class="r" style="left:480.90px;top:369.30px;width:0.70px;height:6.00px;background:rgba(190,185,160,0.3);"></div>
<div class="r" style="left:517.20px;top:369.30px;width:0.70px;height:6.00px;background:rgba(190,185,160,0.3);"></div>
<div class="r" style="left:572.00px;top:369.40px;width:12.00px;height:5.80px;background:#ffffff;border-radius:2.5px;"></div>
<div class="r" style="left:363.90px;top:441.70px;width:14.40px;height:13.90px;background:#363945;border-radius:1px;"></div>
<svg class="r" style="left:366.20px;top:444.20px;" width="10" height="10" viewBox="0 0 10 10"><path d="M6.41 5.02L6.55 5.46L7.37 5.56L7.37 6.44L6.55 6.54L6.41 6.98L6.37 7.08L6.15 7.49L6.67 8.15L6.05 8.77L5.39 8.25L4.98 8.47L4.88 8.51L4.44 8.65L4.34 9.47L3.46 9.47L3.36 8.65L2.92 8.51L2.82 8.47L2.41 8.25L1.75 8.77L1.13 8.15L1.65 7.49L1.43 7.08L1.39 6.98L1.25 6.54L0.43 6.44L0.43 5.56L1.25 5.46L1.39 5.02L1.43 4.92L1.65 4.51L1.13 3.85L1.75 3.23L2.41 3.75L2.82 3.53L2.92 3.49L3.36 3.35L3.46 2.53L4.34 2.53L4.44 3.35L4.88 3.49L4.98 3.53L5.39 3.75L6.05 3.23L6.67 3.85L6.15 4.51L6.37 4.92Z" fill="#e8e9ec"/><circle cx="3.9" cy="6" r="2.6" fill="#e8e9ec"/><circle cx="3.9" cy="6" r="1.0" fill="#32353f"/><path d="M9.29 1.79L9.44 2.15L9.97 2.23L9.97 2.97L9.44 3.05L9.29 3.41L9.25 3.49L9.01 3.79L9.20 4.30L8.57 4.66L8.23 4.24L7.84 4.30L7.76 4.30L7.37 4.24L7.03 4.66L6.40 4.30L6.59 3.79L6.35 3.49L6.31 3.41L6.16 3.05L5.63 2.97L5.63 2.23L6.16 2.15L6.31 1.79L6.35 1.71L6.59 1.41L6.40 0.90L7.03 0.54L7.37 0.96L7.76 0.90L7.84 0.90L8.23 0.96L8.57 0.54L9.20 0.90L9.01 1.41L9.25 1.71Z" fill="#e8e9ec"/><circle cx="7.8" cy="2.6" r="1.7" fill="#e8e9ec"/><circle cx="7.8" cy="2.6" r="0.7" fill="#32353f"/></svg>
<div class="r" style="left:384.70px;top:441.70px;width:14.50px;height:13.90px;background:#363945;border-radius:1px;"></div>
<svg class="r" style="left:386.30px;top:444.00px;" width="10" height="10" viewBox="0 0 10 10"><circle cx="5" cy="1.4" r="1.1" fill="#e8e9ec"/><circle cx="5" cy="5" r="1.1" fill="#e8e9ec"/><circle cx="5" cy="8.6" r="1.1" fill="#e8e9ec"/></svg>
<div class="r" style="left:593.70px;top:294.20px;width:164.60px;height:17.40px;background:#3d404c;border-radius:2px;"></div>
<div class="r" style="left:744.60px;top:294.20px;width:0.80px;height:17.40px;background:#2a2c35;"></div>
<svg class="r" style="left:748.50px;top:301.50px;" width="7" height="4" viewBox="0 0 7 4"><path d="M0.5 0.5H6.5L3.5 3.5Z" fill="#e8e8e8"/></svg>
<div class="t" style="left:600.00px;top:299.32px;font-size:8.48px;line-height:8.48px;color:#e4e5e9;letter-spacing:-0.221px;">Fade</div>
<div class="t" style="left:593.70px;top:318.92px;font-size:8.48px;line-height:8.48px;color:#e4e5e9;letter-spacing:-0.271px;">Duration</div>
<div class="r" style="left:628.00px;top:314.40px;width:130.30px;height:16.90px;background:#3d404c;border-radius:2px;"></div>
<div class="r" style="left:744.60px;top:314.40px;width:0.80px;height:16.90px;background:#2a2c35;"></div>
<svg class="r" style="left:749.50px;top:316.50px;" width="6" height="13" viewBox="0 0 6 13"><path d="M0.7 3.2L3 0.9L5.3 3.2M0.7 9.8L3 12.1L5.3 9.8" fill="none" stroke="#e0e0e0" stroke-width="0.9"/></svg>
<div class="t" style="left:634.00px;top:318.92px;font-size:8.48px;line-height:8.48px;color:#e4e5e9;letter-spacing:-0.221px;">300 ms</div>
<div class="r" style="left:703.00px;top:333.00px;width:14.70px;height:15.70px;background:#363945;border-radius:1px;"></div>
<svg class="r" style="left:705.60px;top:336.30px;" width="9.5" height="9.5" viewBox="0 0 10 10"><path d="M5 0.6V9.4M0.6 5H9.4" stroke="#e8e9ec" stroke-width="1.7"/></svg>
<svg class="r" style="left:726.00px;top:336.30px;" width="9.5" height="9.5" viewBox="0 0 10 10"><rect x="0.8" y="0.5" width="8.4" height="1.5" rx="0.6" fill="#e8e9ec"/><rect x="1.9" y="2.6" width="6.2" height="6.7" rx="1.3" fill="none" stroke="#e8e9ec" stroke-width="1.2"/><path d="M4.2 4.2V7.6M5.8 4.2V7.6" stroke="#e8e9ec" stroke-width="0.7" opacity="0.7"/></svg>
<svg class="r" style="left:745.00px;top:336.00px;" width="10" height="10" viewBox="0 0 10 10"><circle cx="5" cy="1.4" r="1.1" fill="#e8e9ec"/><circle cx="5" cy="5" r="1.1" fill="#e8e9ec"/><circle cx="5" cy="8.6" r="1.1" fill="#e8e9ec"/></svg>
<div class="r" style="left:768.20px;top:294.10px;width:128.00px;height:18.80px;background:#3d404c;border-radius:2px;"></div>
<div class="t" style="left:832.20px;top:299.62px;font-size:8.48px;line-height:8.48px;color:#e8e9ec;letter-spacing:-0.221px;transform:translateX(-50%);">Start Streaming</div>
<div class="r" style="left:768.20px;top:315.00px;width:128.00px;height:18.80px;background:#474b58;border-radius:2px;box-shadow:inset 0 0 0 0.8px #545763;"></div>
<div class="t" style="left:832.20px;top:320.52px;font-size:8.48px;line-height:8.48px;color:#e8e9ec;letter-spacing:-0.221px;transform:translateX(-50%);">Start Recording</div>
<div class="r" style="left:768.20px;top:357.30px;width:128.00px;height:18.80px;background:#3d404c;border-radius:2px;"></div>
<div class="t" style="left:832.20px;top:362.82px;font-size:8.48px;line-height:8.48px;color:#e8e9ec;letter-spacing:-0.221px;transform:translateX(-50%);">Studio Mode</div>
<div class="r" style="left:768.20px;top:378.40px;width:128.00px;height:18.80px;background:#3d404c;border-radius:2px;"></div>
<div class="t" style="left:832.20px;top:383.92px;font-size:8.48px;line-height:8.48px;color:#e8e9ec;letter-spacing:-0.221px;transform:translateX(-50%);">Settings</div>
<div class="r" style="left:768.20px;top:399.60px;width:128.00px;height:18.80px;background:#3d404c;border-radius:2px;"></div>
<div class="t" style="left:832.20px;top:405.12px;font-size:8.48px;line-height:8.48px;color:#e8e9ec;letter-spacing:-0.221px;transform:translateX(-50%);">Exit</div>
<div class="r" style="left:768.20px;top:336.00px;width:105.80px;height:18.80px;background:#3d404c;border-radius:2px;"></div>
<div class="t" style="left:821.10px;top:341.52px;font-size:8.48px;line-height:8.48px;color:#e8e9ec;letter-spacing:-0.221px;transform:translateX(-50%);">Start Virtual Camera</div>
<div class="r" style="left:877.00px;top:336.00px;width:19.00px;height:18.80px;background:#3d404c;border-radius:2px;"></div>
<svg class="r" style="left:881.80px;top:340.80px;" width="9.4" height="9.4" viewBox="0 0 10 10"><path d="M8.35 3.69L8.53 4.28L9.66 4.41L9.66 5.59L8.53 5.72L8.35 6.31L8.30 6.44L8.00 6.99L8.71 7.88L7.88 8.71L6.99 8.00L6.44 8.30L6.31 8.35L5.72 8.53L5.59 9.66L4.41 9.66L4.28 8.53L3.69 8.35L3.56 8.30L3.01 8.00L2.12 8.71L1.29 7.88L2.00 6.99L1.70 6.44L1.65 6.31L1.47 5.72L0.34 5.59L0.34 4.41L1.47 4.28L1.65 3.69L1.70 3.56L2.00 3.01L1.29 2.12L2.12 1.29L3.01 2.00L3.56 1.70L3.69 1.65L4.28 1.47L4.41 0.34L5.59 0.34L5.72 1.47L6.31 1.65L6.44 1.70L6.99 2.00L7.88 1.29L8.71 2.12L8.00 3.01L8.30 3.56Z" fill="#f4f4f4"/><circle cx="5" cy="5" r="3.5" fill="#f4f4f4"/><circle cx="5" cy="5" r="1.45" fill="#3a3d48"/></svg>
<div class="r" style="left:0.00px;top:458.50px;width:897.00px;height:20.00px;background:#252830;"></div>
<div class="r" style="left:653.20px;top:460.00px;width:0.80px;height:17.00px;background:#2c2e37;"></div>
<div class="r" style="left:673.40px;top:460.00px;width:0.80px;height:17.00px;background:#2c2e37;"></div>
<div class="r" style="left:725.00px;top:460.00px;width:0.80px;height:17.00px;background:#2c2e37;"></div>
<div class="r" style="left:825.20px;top:460.00px;width:0.80px;height:17.00px;background:#2c2e37;"></div>
<svg class="r" style="left:658.40px;top:462.50px;" width="9.2" height="9" viewBox="0 0 9.2 9"><path d="M0.5 8.5h1.3v-1.6h-1.3zM2.6 8.5h1.3v-3h-1.3zM4.7 8.5h1.3v-4.6h-1.3zM6.8 8.5h1.3v-6.4h-1.3zM8.9 8.5h0.3v-8h-0.3z" fill="#5e6068"/></svg>
<div class="r" style="left:681.00px;top:467.00px;width:3.70px;height:3.70px;background:#9fa0a5;border-radius:50%;"></div>
<div class="t" style="left:690.90px;top:465.70px;font-size:8.27px;line-height:8.27px;color:#8d8f96;letter-spacing:-0.215px;">00:00:00</div>
<div class="r" style="left:731.60px;top:464.50px;width:8.70px;height:8.70px;background:#4e5058;border-radius:50%;"></div>
<div class="t" style="left:744.00px;top:465.70px;font-size:8.27px;line-height:8.27px;color:#8d8f96;letter-spacing:-0.215px;">00:00:00</div>
<div class="t" style="left:784.50px;top:466.01px;font-size:7.9px;line-height:7.9px;color:#e4e5e9;letter-spacing:-0.206px;">CPU: 1.5%</div>
<div class="t" style="left:830.70px;top:465.97px;font-size:7.95px;line-height:7.95px;color:#e4e5e9;letter-spacing:-0.207px;">30.00 / 30.00 FPS</div>
<div class="r" style="left:0.00px;top:478.50px;width:900.00px;height:27.50px;background:#202020;"></div>
<svg class="r" style="left:11.80px;top:486.80px;" width="13" height="13" viewBox="0 0 13 13"><path d="M0.6 6.4Q0.9 1.2 6.5 1.2Q12.1 1.2 12.4 6.4Q10.9 5.4 9.6 6.4Q8 5.3 6.5 6.4Q5 5.3 3.4 6.4Q2.1 5.4 0.6 6.4Z" fill="#8cc4ee"/><path d="M6.5 6.2V10.9Q6.5 12.2 5.3 12" fill="none" stroke="#7a7a7a" stroke-width="0.9"/></svg>
<div class="r" style="left:18.30px;top:482.20px;width:8.90px;height:8.80px;background:#ef7f8c;border-radius:50%;"></div>
<div class="t" style="left:22.75px;top:483.56px;font-size:6.78px;line-height:6.78px;color:#3a1a1f;letter-spacing:-0.177px;transform:translateX(-50%);">1</div>
<div class="t" style="left:30.00px;top:483.55px;font-size:7.74px;line-height:7.74px;color:#f2f2f2;letter-spacing:-0.151px;">2 mm of rain</div>
<div class="t" style="left:30.00px;top:492.84px;font-size:7.63px;line-height:7.63px;color:#c4c4c4;letter-spacing:-0.169px;">Monday</div>
<svg class="r" style="left:287.10px;top:484.90px;" width="14.4" height="14.4" viewBox="0 0 14.4 14.4"><defs><linearGradient id="wg" x1="0" y1="0" x2="1" y2="1"><stop offset="0" stop-color="#6fd3ff"/><stop offset="1" stop-color="#1a9fe8"/></linearGradient></defs><rect x="0" y="0" width="6.8" height="6.8" fill="url(#wg)"/><rect x="7.6" y="0" width="6.8" height="6.8" fill="url(#wg)"/><rect x="0" y="7.6" width="6.8" height="6.8" fill="url(#wg)"/><rect x="7.6" y="7.6" width="6.8" height="6.8" fill="url(#wg)"/></svg>
<div class="r" style="left:308.40px;top:482.80px;width:128.90px;height:18.10px;background:#2e2e2e;border-radius:9px;box-shadow:inset 0 0 0 0.6px #3a3a3a;"></div>
<svg class="r" style="left:315.60px;top:487.60px;" width="9" height="9" viewBox="0 0 9 9"><circle cx="3.9" cy="3.9" r="3" fill="none" stroke="#e0e0e0" stroke-width="1.1"/><path d="M6.1 6.1L8.4 8.4" stroke="#e0e0e0" stroke-width="1.2"/></svg>
<div class="t" style="left:330.70px;top:488.78px;font-size:8.06px;line-height:8.06px;color:#d0d0d0;letter-spacing:-0.21px;">Search</div>
<svg class="r" style="left:409.00px;top:486.50px;" width="24" height="12" viewBox="0 0 24 12"><path d="M10 1L11.3 4.7L15 6L11.3 7.3L10 11L8.7 7.3L5 6L8.7 4.7Z" fill="#f5c531"/><path d="M18.5 5L19.2 7.3L21.5 8L19.2 8.7L18.5 11L17.8 8.7L15.5 8L17.8 7.3Z" fill="#f5c531"/><circle cx="2" cy="9.5" r="1" fill="#3a8fe0"/><circle cx="22.5" cy="11" r="0.8" fill="#7ab04a"/><circle cx="16" cy="2" r="0.6" fill="#e0603a"/></svg>
<div class="r" style="left:445.00px;top:489.00px;width:10.00px;height:9.00px;background:#6a6a6a;border-radius:1px;"></div>
<div class="r" style="left:448.20px;top:485.00px;width:11.00px;height:9.50px;background:#dcdcdc;border-radius:1px;"></div>
<svg class="r" style="left:470.00px;top:486.00px;" width="15.2" height="12.5" viewBox="0 0 15.2 12.5"><path d="M0.3 1.2Q0.3 0.3 1.2 0.3H5.5L7 1.8H14.1Q14.9 1.8 14.9 2.6V11.4Q14.9 12.2 14.1 12.2H1.1Q0.3 12.2 0.3 11.4Z" fill="#f2c64c"/><path d="M0.3 3.2H14.9" stroke="#d9a92e" stroke-width="0.5"/><rect x="4" y="9.2" width="7.2" height="3" fill="#2f78d8"/></svg>
<svg class="r" style="left:497.50px;top:484.50px;" width="12.5" height="14.5" viewBox="0 0 12.5 14.5"><path d="M2.2 0.8H10.3L12 3.2L11.2 9.8L6.25 14L1.3 9.8L0.5 3.2Z" fill="#f14c21"/><path d="M3.5 3.8L6.25 5.2L9 3.8L8.6 8.2L6.25 10.6L3.9 8.2Z" fill="#fbe9e4"/></svg>
<svg class="r" style="left:521.00px;top:486.00px;" width="14.8" height="13.3" viewBox="0 0 14.8 13.3"><defs><linearGradient id="sg" x1="0" y1="0" x2="0" y2="1"><stop offset="0" stop-color="#14205a"/><stop offset="1" stop-color="#1886c9"/></linearGradient></defs><ellipse cx="7.8" cy="6.65" rx="6.6" ry="6.5" fill="url(#sg)"/><circle cx="9.8" cy="4.4" r="2.4" fill="#e8ecf2"/><circle cx="9.8" cy="4.4" r="1.1" fill="#5a6a90"/><path d="M0.4 6.3L5.5 8.6Q7 9.4 8.2 7.8L9.2 6" stroke="#e8ecf2" stroke-width="2" fill="none"/></svg>
<svg class="r" style="left:548.00px;top:484.50px;" width="14.4" height="14.4" viewBox="0 0 14.4 14.4"><circle cx="7.2" cy="7.2" r="7" fill="#1ed760"/><path d="M3.4 5.3Q7.6 3.9 11.2 5.9M3.9 7.6Q7.3 6.6 10.4 8.2M4.3 9.8Q7 9 9.5 10.2" fill="none" stroke="#0f3a20" stroke-width="1.1" stroke-linecap="round"/></svg>
<div class="r" style="left:573.80px;top:484.30px;width:14.30px;height:15.30px;background:#3561f5;border-radius:2.5px;"></div>
<svg class="r" style="left:575.50px;top:486.00px;" width="11" height="12" viewBox="0 0 11 12"><path d="M3.2 1.6L10 3.4L8.2 10.4L1.4 8.6Z" fill="#ffffff"/><rect x="5" y="5.2" width="1.6" height="1.6" fill="#3561f5"/></svg>
<div class="r" style="left:594.00px;top:480.00px;width:24.70px;height:23.90px;background:#2a2a2a;border-radius:3px;"></div>
<svg class="r" style="left:599.70px;top:484.50px;" width="13.8" height="14" viewBox="0 0 14 14"><circle cx="7" cy="7" r="6.2" fill="#141414" stroke="#d4d4d4" stroke-width="1.3"/><path d="M7 7Q5.2 5.6 6.2 2.2M7 7Q9.1 6.3 11 8.9M7 7Q6.9 9.3 3.6 10.2" fill="none" stroke="#bdbdbd" stroke-width="0.9"/></svg>
<div class="r" style="left:601.80px;top:501.40px;width:9.70px;height:1.90px;background:#4cc2ff;border-radius:1px;"></div>
<div class="r" style="left:476.00px;top:501.70px;width:3.20px;height:1.00px;background:#8a8a8a;border-radius:0.5px;"></div>
<div class="r" style="left:501.40px;top:501.70px;width:3.20px;height:1.00px;background:#8a8a8a;border-radius:0.5px;"></div>
<div class="r" style="left:526.80px;top:501.70px;width:3.20px;height:1.00px;background:#8a8a8a;border-radius:0.5px;"></div>
<div class="r" style="left:553.20px;top:501.70px;width:3.20px;height:1.00px;background:#8a8a8a;border-radius:0.5px;"></div>
<div class="r" style="left:579.20px;top:501.70px;width:3.20px;height:1.00px;background:#8a8a8a;border-radius:0.5px;"></div>
<svg class="r" style="left:743.60px;top:489.30px;" width="7" height="4.6" viewBox="0 0 7 4.6"><path d="M0.6 4L3.5 1L6.4 4" fill="none" stroke="#f0f0f0" stroke-width="1"/></svg>
<svg class="r" style="left:761.50px;top:486.30px;" width="7.5" height="10" viewBox="0 0 7.5 10"><rect x="2.3" y="0.5" width="3" height="5.8" rx="1.5" fill="#5fc6d0"/><path d="M0.9 4.4Q0.9 7.6 3.8 7.6Q6.6 7.6 6.6 4.4M3.8 7.6V9.6" fill="none" stroke="#5fc6d0" stroke-width="0.9"/></svg>
<div class="t" style="left:787.80px;top:484.50px;font-size:7.21px;line-height:7.21px;color:#ededed;letter-spacing:-0.188px;transform:translateX(-50%);">ENG</div>
<div class="t" style="left:788.00px;top:493.70px;font-size:7.21px;line-height:7.21px;color:#ededed;letter-spacing:-0.188px;transform:translateX(-50%);">US</div>
<svg class="r" style="left:805.60px;top:488.00px;" width="8.4" height="7" viewBox="0 0 8.4 7"><path d="M0.5 2.4Q4.2 -0.6 7.9 2.4L4.2 6.6Z" fill="#8e8e8e"/><path d="M2 4.2Q4.2 2.6 6.4 4.2L4.2 6.6Z" fill="#e8e8e8"/></svg>
<svg class="r" style="left:818.80px;top:486.60px;" width="10" height="10" viewBox="0 0 10 10"><path d="M0.6 3.6H2.6L5.2 1.2V8.8L2.6 6.4H0.6Z" fill="none" stroke="#eeeeee" stroke-width="0.9"/><path d="M6.6 3.2Q7.5 5 6.6 6.8M8.1 2Q9.6 5 8.1 8" fill="none" stroke="#eeeeee" stroke-width="0.9"/></svg>
<svg class="r" style="left:833.00px;top:486.50px;" width="10.5" height="9.5" viewBox="0 0 10.5 9.5"><rect x="0.5" y="2.5" width="8.6" height="5.8" rx="1" fill="#eeeeee"/><rect x="9.3" y="4.2" width="1" height="2.4" fill="#eeeeee"/><path d="M2.2 0.4V2.6M4.2 0.4V2.6" stroke="#eeeeee" stroke-width="0.7"/></svg>
<div class="t" style="right:11.30px;top:483.42px;font-size:7.53px;line-height:7.53px;color:#f0f0f0;letter-spacing:-0.196px;">5:36 PM</div>
<div class="t" style="right:11.50px;top:492.92px;font-size:7.53px;line-height:7.53px;color:#f0f0f0;letter-spacing:-0.196px;">2025-11-21</div>
<svg class="r" style="left:700.00px;top:424.00px;" width="7.5" height="10.5" viewBox="0 0 7.5 10.5"><path d="M0.7 0.7V8.6L2.6 6.9L4 9.9L5.4 9.3L4.1 6.4H6.7Z" fill="#ffffff" stroke="#000000" stroke-width="0.8" stroke-linejoin="round"/></svg></div>
<div class="r" style="left:0.00px;top:245.50px;width:897.30px;height:28.50px;background:#262932;"></div>
<div class="t" style="left:6.00px;top:256.34px;font-size:8.69px;line-height:8.69px;color:#e4e5e9;letter-spacing:-0.376px;">No source selected</div>
<div class="r" style="left:125.5px;top:251.5px;width:62.7px;height:18px;border:1px solid #2e3039;box-sizing:border-box;border-radius:2px"></div>
<div class="r" style="left:192px;top:251.5px;width:48.7px;height:18px;border:1px solid #2e3039;box-sizing:border-box;border-radius:2px"></div>
<svg class="r" style="left:132.80px;top:256.30px;" width="9" height="9" viewBox="0 0 10 10"><path d="M8.35 3.69L8.53 4.28L9.66 4.41L9.66 5.59L8.53 5.72L8.35 6.31L8.30 6.44L8.00 6.99L8.71 7.88L7.88 8.71L6.99 8.00L6.44 8.30L6.31 8.35L5.72 8.53L5.59 9.66L4.41 9.66L4.28 8.53L3.69 8.35L3.56 8.30L3.01 8.00L2.12 8.71L1.29 7.88L2.00 6.99L1.70 6.44L1.65 6.31L1.47 5.72L0.34 5.59L0.34 4.41L1.47 4.28L1.65 3.69L1.70 3.56L2.00 3.01L1.29 2.12L2.12 1.29L3.01 2.00L3.56 1.70L3.69 1.65L4.28 1.47L4.41 0.34L5.59 0.34L5.72 1.47L6.31 1.65L6.44 1.70L6.99 2.00L7.88 1.29L8.71 2.12L8.00 3.01L8.30 3.56Z" fill="#c9cacd"/><circle cx="5" cy="5" r="3.5" fill="#c9cacd"/><circle cx="5" cy="5" r="1.45" fill="#252830"/></svg>
<svg class="r" style="left:199.80px;top:256.30px;" width="9" height="9" viewBox="0 0 10 10"><rect x="1.2" y="1.2" width="7.6" height="7.6" rx="1.6" fill="none" stroke="#c9cacd" stroke-width="1.1"/><path d="M2.3 1.5H4.6V8.5H2.3Q1.5 8.5 1.5 7.4V2.6Q1.5 1.5 2.3 1.5Z" fill="#c9cacd"/><rect x="4.6" y="1.5" width="1.3" height="7" fill="#c9cacd" opacity="0.55"/><path d="M7.3 3V7" stroke="#c9cacd" stroke-width="0.6" opacity="0.6"/></svg>
<div class="t" style="left:142.40px;top:256.54px;font-size:8.69px;line-height:8.69px;color:#8a8c94;letter-spacing:-0.376px;">Properties</div>
<div class="t" style="left:210.30px;top:256.54px;font-size:8.69px;line-height:8.69px;color:#8a8c94;letter-spacing:-0.376px;">Filters</div>
<div class="r" style="left:1.50px;top:275.20px;width:172.20px;height:182.30px;background:#272a33;border-radius:2px;box-shadow:inset 0 0 0 1px #2e313a;"></div>
<div class="r" style="left:1.50px;top:275.20px;width:172.20px;height:15.00px;background:#3d404c;border-radius:2px 2px 0 0;"></div>
<div class="r" style="left:1.50px;top:290.20px;width:172.20px;height:0.80px;background:#22242b;"></div>
<div class="t" style="left:5.30px;top:278.72px;font-size:8.48px;line-height:8.48px;color:#f4f4f6;font-weight:700;letter-spacing:-0.321px;">Scenes</div>
<svg class="r" style="left:161.90px;top:278.40px;" width="10" height="9.5" viewBox="0 0 10 9.5"><rect x="0.6" y="0.6" width="6.3" height="5.3" rx="0.8" fill="none" stroke="#e0e1e4" stroke-width="1"/><rect x="0.6" y="0.6" width="6.3" height="1.6" fill="#e0e1e4"/><rect x="3.4" y="3.6" width="6" height="5.3" rx="0.8" fill="#2a2d37" stroke="#e0e1e4" stroke-width="1"/><rect x="3.4" y="3.6" width="6" height="1.6" fill="#e0e1e4"/></svg>
<div class="r" style="left:176.00px;top:275.20px;width:182.80px;height:182.30px;background:#272a33;border-radius:2px;box-shadow:inset 0 0 0 1px #2e313a;"></div>
<div class="r" style="left:176.00px;top:275.20px;width:182.80px;height:15.00px;background:#3d404c;border-radius:2px 2px 0 0;"></div>
<div class="r" style="left:176.00px;top:290.20px;width:182.80px;height:0.80px;background:#22242b;"></div>
<div class="t" style="left:179.80px;top:278.72px;font-size:8.48px;line-height:8.48px;color:#f4f4f6;font-weight:700;letter-spacing:-0.321px;">Sources</div>
<svg class="r" style="left:347.00px;top:278.40px;" width="10" height="9.5" viewBox="0 0 10 9.5"><rect x="0.6" y="0.6" width="6.3" height="5.3" rx="0.8" fill="none" stroke="#e0e1e4" stroke-width="1"/><rect x="0.6" y="0.6" width="6.3" height="1.6" fill="#e0e1e4"/><rect x="3.4" y="3.6" width="6" height="5.3" rx="0.8" fill="#2a2d37" stroke="#e0e1e4" stroke-width="1"/><rect x="3.4" y="3.6" width="6" height="1.6" fill="#e0e1e4"/></svg>
<div class="r" style="left:361.00px;top:275.20px;width:227.50px;height:182.30px;background:#272a33;border-radius:2px;box-shadow:inset 0 0 0 1px #2e313a;"></div>
<div class="r" style="left:361.00px;top:275.20px;width:227.50px;height:15.00px;background:#3d404c;border-radius:2px 2px 0 0;"></div>
<div class="r" style="left:361.00px;top:290.20px;width:227.50px;height:0.80px;background:#22242b;"></div>
<div class="t" style="left:364.80px;top:278.72px;font-size:8.48px;line-height:8.48px;color:#f4f4f6;font-weight:700;letter-spacing:-0.321px;">Audio Mixer</div>
<svg class="r" style="left:576.70px;top:278.40px;" width="10" height="9.5" viewBox="0 0 10 9.5"><rect x="0.6" y="0.6" width="6.3" height="5.3" rx="0.8" fill="none" stroke="#e0e1e4" stroke-width="1"/><rect x="0.6" y="0.6" width="6.3" height="1.6" fill="#e0e1e4"/><rect x="3.4" y="3.6" width="6" height="5.3" rx="0.8" fill="#2a2d37" stroke="#e0e1e4" stroke-width="1"/><rect x="3.4" y="3.6" width="6" height="1.6" fill="#e0e1e4"/></svg>
<div class="r" style="left:591.00px;top:275.20px;width:170.50px;height:182.30px;background:#272a33;border-radius:2px;box-shadow:inset 0 0 0 1px #2e313a;"></div>
<div class="r" style="left:591.00px;top:275.20px;width:170.50px;height:15.00px;background:#3d404c;border-radius:2px 2px 0 0;"></div>
<div class="r" style="left:591.00px;top:290.20px;width:170.50px;height:0.80px;background:#22242b;"></div>
<div class="t" style="left:594.80px;top:278.72px;font-size:8.48px;line-height:8.48px;color:#f4f4f6;font-weight:700;letter-spacing:-0.321px;">Scene Transitions</div>
<svg class="r" style="left:749.70px;top:278.40px;" width="10" height="9.5" viewBox="0 0 10 9.5"><rect x="0.6" y="0.6" width="6.3" height="5.3" rx="0.8" fill="none" stroke="#e0e1e4" stroke-width="1"/><rect x="0.6" y="0.6" width="6.3" height="1.6" fill="#e0e1e4"/><rect x="3.4" y="3.6" width="6" height="5.3" rx="0.8" fill="#2a2d37" stroke="#e0e1e4" stroke-width="1"/><rect x="3.4" y="3.6" width="6" height="1.6" fill="#e0e1e4"/></svg>
<div class="r" style="left:764.00px;top:275.20px;width:134.60px;height:182.30px;background:#272a33;border-radius:2px;box-shadow:inset 0 0 0 1px #2e313a;"></div>
<div class="r" style="left:764.00px;top:275.20px;width:134.60px;height:15.00px;background:#3d404c;border-radius:2px 2px 0 0;"></div>
<div class="r" style="left:764.00px;top:290.20px;width:134.60px;height:0.80px;background:#22242b;"></div>
<div class="t" style="left:767.80px;top:278.72px;font-size:8.48px;line-height:8.48px;color:#f4f4f6;font-weight:700;letter-spacing:-0.321px;">Controls</div>
<svg class="r" style="left:886.80px;top:278.40px;" width="10" height="9.5" viewBox="0 0 10 9.5"><rect x="0.6" y="0.6" width="6.3" height="5.3" rx="0.8" fill="none" stroke="#e0e1e4" stroke-width="1"/><rect x="0.6" y="0.6" width="6.3" height="1.6" fill="#e0e1e4"/><rect x="3.4" y="3.6" width="6" height="5.3" rx="0.8" fill="#2a2d37" stroke="#e0e1e4" stroke-width="1"/><rect x="3.4" y="3.6" width="6" height="1.6" fill="#e0e1e4"/></svg>
<div class="r" style="left:2.00px;top:291.70px;width:170.00px;height:17.30px;background:#2a4ac0;border-radius:1px;"></div>
<div class="t" style="left:6.30px;top:296.82px;font-size:8.48px;line-height:8.48px;color:#ffffff;letter-spacing:-0.221px;">Scene</div>
<div class="r" style="left:2.90px;top:442.00px;width:14.40px;height:13.60px;background:#363945;border-radius:1px;"></div>
<svg class="r" style="left:5.60px;top:444.30px;" width="9" height="9" viewBox="0 0 10 10"><path d="M5 0.6V9.4M0.6 5H9.4" stroke="#e8e9ec" stroke-width="1.7"/></svg>
<div class="r" style="left:20.00px;top:442.00px;width:14.40px;height:13.60px;background:#363945;border-radius:1px;"></div>
<svg class="r" style="left:22.70px;top:444.30px;" width="9" height="9" viewBox="0 0 10 10"><rect x="0.8" y="0.5" width="8.4" height="1.5" rx="0.6" fill="#e8e9ec"/><rect x="1.9" y="2.6" width="6.2" height="6.7" rx="1.3" fill="none" stroke="#e8e9ec" stroke-width="1.2"/><path d="M4.2 4.2V7.6M5.8 4.2V7.6" stroke="#e8e9ec" stroke-width="0.7" opacity="0.7"/></svg>
<div class="r" style="left:40.00px;top:442.00px;width:14.70px;height:13.60px;background:#363945;border-radius:1px;"></div>
<svg class="r" style="left:42.85px;top:444.30px;" width="9" height="9" viewBox="0 0 10 10"><rect x="1.2" y="1.2" width="7.6" height="7.6" rx="1.6" fill="none" stroke="#e8e9ec" stroke-width="1.1"/><path d="M2.3 1.5H4.6V8.5H2.3Q1.5 8.5 1.5 7.4V2.6Q1.5 1.5 2.3 1.5Z" fill="#e8e9ec"/><rect x="4.6" y="1.5" width="1.3" height="7" fill="#e8e9ec" opacity="0.55"/><path d="M7.3 3V7" stroke="#e8e9ec" stroke-width="0.6" opacity="0.6"/></svg>
<div class="r" style="left:61.00px;top:442.00px;width:14.70px;height:13.60px;background:#363945;border-radius:1px;"></div>
<svg class="r" style="left:63.85px;top:444.30px;" width="9" height="9" viewBox="0 0 10 10"><path d="M0.8 7L5 2.8L9.2 7" fill="none" stroke="#e8e9ec" stroke-width="1.35"/></svg>
<div class="r" style="left:78.00px;top:442.00px;width:14.30px;height:13.60px;background:#363945;border-radius:1px;"></div>
<svg class="r" style="left:80.65px;top:444.30px;" width="9" height="9" viewBox="0 0 10 10"><path d="M0.8 3L5 7.2L9.2 3" fill="none" stroke="#e8e9ec" stroke-width="1.35"/></svg>
<svg class="r" style="left:182.70px;top:297.00px;" width="9.3" height="9.3" viewBox="0 0 10 10"><rect x="0.8" y="0.8" width="8.4" height="6.6" rx="1.5" fill="none" stroke="#e8e9ec" stroke-width="1.4"/><path d="M3.6 9H6.4" stroke="#e8e9ec" stroke-width="1.1"/></svg>
<div class="t" style="left:193.80px;top:297.02px;font-size:8.48px;line-height:8.48px;color:#e8e9ec;letter-spacing:-0.271px;">Display Capture</div>
<svg class="r" style="left:182.70px;top:317.60px;" width="9.3" height="4.6" viewBox="0 0 10 5"><path d="M1.5 0.6H8.5Q9.7 0.6 9.7 2.4Q9.7 4.4 8.5 4.4Q7.5 4.4 6.8 3.4H3.2Q2.5 4.4 1.5 4.4Q0.3 4.4 0.3 2.4Q0.3 0.6 1.5 0.6Z" fill="#e8e9ec"/><circle cx="2.3" cy="2.3" r="0.6" fill="#1f212a"/><circle cx="7.7" cy="2.3" r="0.6" fill="#1f212a"/></svg>
<div class="t" style="left:193.80px;top:315.72px;font-size:8.48px;line-height:8.48px;color:#e8e9ec;letter-spacing:-0.221px;">Roblox</div>
<svg class="r" style="left:327.50px;top:298.30px;" width="9.7" height="6.9" viewBox="0 0 10 7"><ellipse cx="5" cy="3.5" rx="4.2" ry="3" fill="none" stroke="#f4f4f4" stroke-width="1.35"/><circle cx="5" cy="3.5" r="1.4" fill="#f4f4f4"/></svg>
<svg class="r" style="left:327.50px;top:316.90px;" width="9.7" height="6.9" viewBox="0 0 10 7"><ellipse cx="5" cy="3.5" rx="4.2" ry="3" fill="none" stroke="#f4f4f4" stroke-width="1.35"/><circle cx="5" cy="3.5" r="1.4" fill="#f4f4f4"/></svg>
<svg class="r" style="left:343.60px;top:296.70px;" width="7.8" height="9.2" viewBox="0 0 8.2 9.6"><path d="M2 4.6V2.8Q2 0.7 4 0.7Q6 0.7 6 2.8V3.4" fill="none" stroke="#9d9ea2" stroke-width="1.2"/><rect x="0.6" y="4.4" width="7" height="4.8" rx="0.5" fill="#9d9ea2"/></svg>
<svg class="r" style="left:343.60px;top:315.30px;" width="7.8" height="9.2" viewBox="0 0 8.2 9.6"><path d="M2 4.6V2.8Q2 0.7 4 0.7Q6 0.7 6 2.8V3.4" fill="none" stroke="#9d9ea2" stroke-width="1.2"/><rect x="0.6" y="4.4" width="7" height="4.8" rx="0.5" fill="#9d9ea2"/></svg>
<div class="r" style="left:179.30px;top:442.00px;width:14.70px;height:13.60px;background:#363945;border-radius:1px;"></div>
<svg class="r" style="left:182.10px;top:444.30px;" width="9" height="9" viewBox="0 0 10 10"><path d="M5 0.6V9.4M0.6 5H9.4" stroke="#e8e9ec" stroke-width="1.7"/></svg>
<svg class="r" style="left:199.40px;top:444.30px;" width="9" height="9" viewBox="0 0 10 10"><rect x="0.8" y="0.5" width="8.4" height="1.5" rx="0.6" fill="#e8e9ec"/><rect x="1.9" y="2.6" width="6.2" height="6.7" rx="1.3" fill="none" stroke="#e8e9ec" stroke-width="1.2"/><path d="M4.2 4.2V7.6M5.8 4.2V7.6" stroke="#e8e9ec" stroke-width="0.7" opacity="0.7"/></svg>
<svg class="r" style="left:219.50px;top:444.30px;" width="9" height="9" viewBox="0 0 10 10"><path d="M8.35 3.69L8.53 4.28L9.66 4.41L9.66 5.59L8.53 5.72L8.35 6.31L8.30 6.44L8.00 6.99L8.71 7.88L7.88 8.71L6.99 8.00L6.44 8.30L6.31 8.35L5.72 8.53L5.59 9.66L4.41 9.66L4.28 8.53L3.69 8.35L3.56 8.30L3.01 8.00L2.12 8.71L1.29 7.88L2.00 6.99L1.70 6.44L1.65 6.31L1.47 5.72L0.34 5.59L0.34 4.41L1.47 4.28L1.65 3.69L1.70 3.56L2.00 3.01L1.29 2.12L2.12 1.29L3.01 2.00L3.56 1.70L3.69 1.65L4.28 1.47L4.41 0.34L5.59 0.34L5.72 1.47L6.31 1.65L6.44 1.70L6.99 2.00L7.88 1.29L8.71 2.12L8.00 3.01L8.30 3.56Z" fill="#e8e9ec"/><circle cx="5" cy="5" r="3.5" fill="#e8e9ec"/><circle cx="5" cy="5" r="1.45" fill="#272a33"/></svg>
<svg class="r" style="left:239.70px;top:444.30px;" width="9" height="9" viewBox="0 0 10 10"><path d="M0.8 7L5 2.8L9.2 7" fill="none" stroke="#e8e9ec" stroke-width="1.35"/></svg>
<svg class="r" style="left:257.20px;top:444.30px;" width="9" height="9" viewBox="0 0 10 10"><path d="M0.8 3L5 7.2L9.2 3" fill="none" stroke="#e8e9ec" stroke-width="1.35"/></svg>
<div class="r" style="left:361.50px;top:291.00px;width:227.00px;height:149.00px;background:#1f2026;box-shadow:inset 0 0 0 1px #2c2f38;"></div>
<div class="r" style="left:362.30px;top:291.00px;width:225.40px;height:42.60px;background:#272a33;"></div>
<div class="r" style="left:362.30px;top:334.40px;width:225.40px;height:45.10px;background:#272a33;"></div>
<div class="t" style="left:365.60px;top:292.82px;font-size:8.48px;line-height:8.48px;color:#e4e5e9;letter-spacing:-0.201px;">Desktop Audio</div>
<div class="t" style="right:316.50px;top:292.82px;font-size:8.48px;line-height:8.48px;color:#8d8f96;letter-spacing:-0.221px;">0.0 dB</div>
<div class="r" style="left:366.70px;top:303.30px;width:13.30px;height:13.40px;background:#363945;border-radius:1px;"></div>
<svg class="r" style="left:367.80px;top:305.00px;" width="10" height="10" viewBox="0 0 10 10"><circle cx="5" cy="1.4" r="1.1" fill="#e8e9ec"/><circle cx="5" cy="5" r="1.1" fill="#e8e9ec"/><circle cx="5" cy="8.6" r="1.1" fill="#e8e9ec"/></svg>
<div class="r" style="left:366.00px;top:319.30px;width:14.00px;height:12.70px;background:#363945;border-radius:1px;"></div>
<svg class="r" style="left:367.50px;top:320.60px;" width="11" height="11" viewBox="0 0 10 10"><path d="M0.5 3.2H2.5L5.3 0.9V9.1L2.5 6.8H0.5Z" fill="#f2f2f2"/><path d="M6.6 3.1Q7.8 5 6.6 6.9M8.3 1.5Q10.2 5 8.3 8.5" fill="none" stroke="#f2f2f2" stroke-width="1.2"/></svg>
<div class="r" style="left:383.00px;top:303.60px;width:87.70px;height:4.35px;background:#3cd43c;"></div>
<div class="r" style="left:470.70px;top:303.60px;width:47.60px;height:4.35px;background:#1e7a1e;"></div>
<div class="r" style="left:518.30px;top:303.60px;width:36.60px;height:4.35px;background:#9a7612;"></div>
<div class="r" style="left:554.90px;top:303.60px;width:29.10px;height:4.35px;background:#a51f27;"></div>
<div class="r" style="left:523.60px;top:303.60px;width:2.00px;height:4.35px;background:#f0b020;"></div>
<div class="r" style="left:383.00px;top:308.85px;width:86.60px;height:3.75px;background:#3cd43c;"></div>
<div class="r" style="left:469.60px;top:308.85px;width:48.70px;height:3.75px;background:#1e7a1e;"></div>
<div class="r" style="left:518.30px;top:308.85px;width:36.60px;height:3.75px;background:#9a7612;"></div>
<div class="r" style="left:554.90px;top:308.85px;width:29.10px;height:3.75px;background:#a51f27;"></div>
<div class="r" style="left:552.60px;top:308.85px;width:1.80px;height:3.75px;background:#f0b020;"></div>
<div class="r" style="left:385.00px;top:303.60px;width:1.00px;height:9.00px;background:#0d2a0d;"></div>
<div class="t" style="left:387.70px;top:313.77px;font-size:5.94px;line-height:5.94px;color:#dcdde0;letter-spacing:-0.305px;transform:translateX(-50%);">-60</div>
<div class="t" style="left:404.06px;top:313.77px;font-size:5.94px;line-height:5.94px;color:#dcdde0;letter-spacing:-0.305px;transform:translateX(-50%);">-55</div>
<div class="r" style="left:400.32px;top:312.90px;width:0.70px;height:1.20px;background:#b8b8b8;"></div>
<div class="t" style="left:420.42px;top:313.77px;font-size:5.94px;line-height:5.94px;color:#dcdde0;letter-spacing:-0.305px;transform:translateX(-50%);">-50</div>
<div class="r" style="left:417.05px;top:312.90px;width:0.70px;height:1.20px;background:#b8b8b8;"></div>
<div class="t" style="left:436.78px;top:313.77px;font-size:5.94px;line-height:5.94px;color:#dcdde0;letter-spacing:-0.305px;transform:translateX(-50%);">-45</div>
<div class="r" style="left:433.78px;top:312.90px;width:0.70px;height:1.20px;background:#b8b8b8;"></div>
<div class="t" style="left:453.14px;top:313.77px;font-size:5.94px;line-height:5.94px;color:#dcdde0;letter-spacing:-0.305px;transform:translateX(-50%);">-40</div>
<div class="r" style="left:450.50px;top:312.90px;width:0.70px;height:1.20px;background:#b8b8b8;"></div>
<div class="t" style="left:469.50px;top:313.77px;font-size:5.94px;line-height:5.94px;color:#dcdde0;letter-spacing:-0.305px;transform:translateX(-50%);">-35</div>
<div class="r" style="left:467.23px;top:312.90px;width:0.70px;height:1.20px;background:#b8b8b8;"></div>
<div class="t" style="left:485.86px;top:313.77px;font-size:5.94px;line-height:5.94px;color:#dcdde0;letter-spacing:-0.305px;transform:translateX(-50%);">-30</div>
<div class="r" style="left:483.95px;top:312.90px;width:0.70px;height:1.20px;background:#b8b8b8;"></div>
<div class="t" style="left:502.22px;top:313.77px;font-size:5.94px;line-height:5.94px;color:#dcdde0;letter-spacing:-0.305px;transform:translateX(-50%);">-25</div>
<div class="r" style="left:500.68px;top:312.90px;width:0.70px;height:1.20px;background:#b8b8b8;"></div>
<div class="t" style="left:518.58px;top:313.77px;font-size:5.94px;line-height:5.94px;color:#dcdde0;letter-spacing:-0.305px;transform:translateX(-50%);">-20</div>
<div class="r" style="left:517.40px;top:312.90px;width:0.70px;height:1.20px;background:#b8b8b8;"></div>
<div class="t" style="left:534.94px;top:313.77px;font-size:5.94px;line-height:5.94px;color:#dcdde0;letter-spacing:-0.305px;transform:translateX(-50%);">-15</div>
<div class="r" style="left:534.13px;top:312.90px;width:0.70px;height:1.20px;background:#b8b8b8;"></div>
<div class="t" style="left:551.30px;top:313.77px;font-size:5.94px;line-height:5.94px;color:#dcdde0;letter-spacing:-0.305px;transform:translateX(-50%);">-10</div>
<div class="r" style="left:550.85px;top:312.90px;width:0.70px;height:1.20px;background:#b8b8b8;"></div>
<div class="t" style="left:567.66px;top:313.77px;font-size:5.94px;line-height:5.94px;color:#dcdde0;letter-spacing:-0.305px;transform:translateX(-50%);">-5</div>
<div class="r" style="left:567.58px;top:312.90px;width:0.70px;height:1.20px;background:#b8b8b8;"></div>
<div class="t" style="right:316.00px;top:313.77px;font-size:5.94px;line-height:5.94px;color:#dcdde0;letter-spacing:-0.155px;">0</div>
<div class="r" style="left:383.00px;top:325.90px;width:200.00px;height:3.30px;background:#3e62cc;border-radius:1.5px;"></div>
<div class="r" style="left:392.70px;top:324.50px;width:0.70px;height:6.00px;background:rgba(190,185,160,0.3);"></div>
<div class="r" style="left:400.10px;top:324.50px;width:0.70px;height:6.00px;background:rgba(190,185,160,0.3);"></div>
<div class="r" style="left:408.20px;top:324.50px;width:0.70px;height:6.00px;background:rgba(190,185,160,0.3);"></div>
<div class="r" style="left:418.00px;top:324.50px;width:0.70px;height:6.00px;background:rgba(190,185,160,0.3);"></div>
<div class="r" style="left:429.00px;top:324.50px;width:0.70px;height:6.00px;background:rgba(190,185,160,0.3);"></div>
<div class="r" style="left:441.70px;top:324.50px;width:0.70px;height:6.00px;background:rgba(190,185,160,0.3);"></div>
<div class="r" style="left:458.40px;top:324.50px;width:0.70px;height:6.00px;background:rgba(190,185,160,0.3);"></div>
<div class="r" style="left:480.90px;top:324.50px;width:0.70px;height:6.00px;background:rgba(190,185,160,0.3);"></div>
<div class="r" style="left:517.20px;top:324.50px;width:0.70px;height:6.00px;background:rgba(190,185,160,0.3);"></div>
<div class="r" style="left:572.00px;top:324.60px;width:12.00px;height:5.80px;background:#ffffff;border-radius:2.5px;"></div>
<div class="t" style="left:365.60px;top:338.12px;font-size:8.48px;line-height:8.48px;color:#e4e5e9;letter-spacing:-0.221px;">Mic/Aux</div>
<div class="t" style="right:316.50px;top:338.12px;font-size:8.48px;line-height:8.48px;color:#8d8f96;letter-spacing:-0.221px;">0.0 dB</div>
<div class="r" style="left:366.70px;top:348.30px;width:13.30px;height:13.40px;background:#363945;border-radius:1px;"></div>
<svg class="r" style="left:367.80px;top:350.50px;" width="10" height="10" viewBox="0 0 10 10"><circle cx="5" cy="1.4" r="1.1" fill="#e8e9ec"/><circle cx="5" cy="5" r="1.1" fill="#e8e9ec"/><circle cx="5" cy="8.6" r="1.1" fill="#e8e9ec"/></svg>
<div class="r" style="left:366.00px;top:364.30px;width:14.00px;height:12.70px;background:#363945;border-radius:1px;"></div>
<svg class="r" style="left:367.50px;top:365.60px;" width="10" height="10" viewBox="0 0 10 10"><path d="M0.6 3.4H2.4L5.2 1V9L2.4 6.6H0.6Z" fill="#e0283c"/><path d="M6.4 3.9L9 6.3M9 3.9L6.4 6.3" stroke="#e0283c" stroke-width="1.4"/></svg>
<div class="r" style="left:383.00px;top:348.30px;width:33.00px;height:4.65px;background:#b9b9b9;"></div>
<div class="r" style="left:416.00px;top:348.30px;width:1.60px;height:4.65px;background:#272a33;"></div>
<div class="r" style="left:417.60px;top:348.30px;width:60.40px;height:4.65px;background:#b9b9b9;"></div>
<div class="r" style="left:478.00px;top:348.30px;width:76.70px;height:4.65px;background:#6f6f6f;"></div>
<div class="r" style="left:554.70px;top:348.30px;width:29.30px;height:4.65px;background:#4b4b4b;"></div>
<div class="r" style="left:514.00px;top:348.30px;width:1.80px;height:4.65px;background:#d8d8d8;"></div>
<div class="r" style="left:383.00px;top:353.85px;width:31.70px;height:3.75px;background:#b9b9b9;"></div>
<div class="r" style="left:414.70px;top:353.85px;width:1.60px;height:3.75px;background:#272a33;"></div>
<div class="r" style="left:416.30px;top:353.85px;width:75.70px;height:3.75px;background:#b9b9b9;"></div>
<div class="r" style="left:492.00px;top:353.85px;width:62.70px;height:3.75px;background:#6f6f6f;"></div>
<div class="r" style="left:554.70px;top:353.85px;width:29.30px;height:3.75px;background:#4b4b4b;"></div>
<div class="r" style="left:536.80px;top:353.85px;width:1.80px;height:3.75px;background:#e8e8e8;"></div>
<div class="r" style="left:383.30px;top:348.30px;width:2.00px;height:9.30px;background:#2fc22f;"></div>
<div class="t" style="left:387.70px;top:358.77px;font-size:5.94px;line-height:5.94px;color:#dcdde0;letter-spacing:-0.305px;transform:translateX(-50%);">-60</div>
<div class="t" style="left:404.06px;top:358.77px;font-size:5.94px;line-height:5.94px;color:#dcdde0;letter-spacing:-0.305px;transform:translateX(-50%);">-55</div>
<div class="r" style="left:400.32px;top:357.90px;width:0.70px;height:1.20px;background:#b8b8b8;"></div>
<div class="t" style="left:420.42px;top:358.77px;font-size:5.94px;line-height:5.94px;color:#dcdde0;letter-spacing:-0.305px;transform:translateX(-50%);">-50</div>
<div class="r" style="left:417.05px;top:357.90px;width:0.70px;height:1.20px;background:#b8b8b8;"></div>
<div class="t" style="left:436.78px;top:358.77px;font-size:5.94px;line-height:5.94px;color:#dcdde0;letter-spacing:-0.305px;transform:translateX(-50%);">-45</div>
<div class="r" style="left:433.78px;top:357.90px;width:0.70px;height:1.20px;background:#b8b8b8;"></div>
<div class="t" style="left:453.14px;top:358.77px;font-size:5.94px;line-height:5.94px;color:#dcdde0;letter-spacing:-0.305px;transform:translateX(-50%);">-40</div>
<div class="r" style="left:450.50px;top:357.90px;width:0.70px;height:1.20px;background:#b8b8b8;"></div>
<div class="t" style="left:469.50px;top:358.77px;font-size:5.94px;line-height:5.94px;color:#dcdde0;letter-spacing:-0.305px;transform:translateX(-50%);">-35</div>
<div class="r" style="left:467.23px;top:357.90px;width:0.70px;height:1.20px;background:#b8b8b8;"></div>
<div class="t" style="left:485.86px;top:358.77px;font-size:5.94px;line-height:5.94px;color:#dcdde0;letter-spacing:-0.305px;transform:translateX(-50%);">-30</div>
<div class="r" style="left:483.95px;top:357.90px;width:0.70px;height:1.20px;background:#b8b8b8;"></div>
<div class="t" style="left:502.22px;top:358.77px;font-size:5.94px;line-height:5.94px;color:#dcdde0;letter-spacing:-0.305px;transform:translateX(-50%);">-25</div>
<div class="r" style="left:500.68px;top:357.90px;width:0.70px;height:1.20px;background:#b8b8b8;"></div>
<div class="t" style="left:518.58px;top:358.77px;font-size:5.94px;line-height:5.94px;color:#dcdde0;letter-spacing:-0.305px;transform:translateX(-50%);">-20</div>
<div class="r" style="left:517.40px;top:357.90px;width:0.70px;height:1.20px;background:#b8b8b8;"></div>
<div class="t" style="left:534.94px;top:358.77px;font-size:5.94px;line-height:5.94px;color:#dcdde0;letter-spacing:-0.305px;transform:translateX(-50%);">-15</div>
<div class="r" style="left:534.13px;top:357.90px;width:0.70px;height:1.20px;background:#b8b8b8;"></div>
<div class="t" style="left:551.30px;top:358.77px;font-size:5.94px;line-height:5.94px;color:#dcdde0;letter-spacing:-0.305px;transform:translateX(-50%);">-10</div>
<div class="r" style="left:550.85px;top:357.90px;width:0.70px;height:1.20px;background:#b8b8b8;"></div>
<div class="t" style="left:567.66px;top:358.77px;font-size:5.94px;line-height:5.94px;color:#dcdde0;letter-spacing:-0.305px;transform:translateX(-50%);">-5</div>
<div class="r" style="left:567.58px;top:357.90px;width:0.70px;height:1.20px;background:#b8b8b8;"></div>
<div class="t" style="right:316.00px;top:358.77px;font-size:5.94px;line-height:5.94px;color:#dcdde0;letter-spacing:-0.155px;">0</div>
<div class="r" style="left:383.00px;top:370.70px;width:200.00px;height:3.30px;background:#3e62cc;border-radius:1.5px;"></div>
<div class="r" style="left:392.70px;top:369.30px;width:0.70px;height:6.00px;background:rgba(190,185,160,0.3);"></div>
<div class="r" style="left:400.10px;top:369.30px;width:0.70px;height:6.00px;background:rgba(190,185,160,0.3);"></div>
<div class="r" style="left:408.20px;top:369.30px;width:0.70px;height:6.00px;background:rgba(190,185,160,0.3);"></div>
<div class="r" style="left:418.00px;top:369.30px;width:0.70px;height:6.00px;background:rgba(190,185,160,0.3);"></div>
<div class="r" style="left:429.00px;top:369.30px;width:0.70px;height:6.00px;background:rgba(190,185,160,0.3);"></div>
<div class="r" style="left:441.70px;top:369.30px;width:0.70px;height:6.00px;background:rgba(190,185,160,0.3);"></div>
<div class="r" style="left:458.40px;top:369.30px;width:0.70px;height:6.00px;background:rgba(190,185,160,0.3);"></div>
<div class="r" style="left:480.90px;top:369.30px;width:0.70px;height:6.00px;background:rgba(190,185,160,0.3);"></div>
<div class="r" style="left:517.20px;top:369.30px;width:0.70px;height:6.00px;background:rgba(190,185,160,0.3);"></div>
<div class="r" style="left:572.00px;top:369.40px;width:12.00px;height:5.80px;background:#ffffff;border-radius:2.5px;"></div>
<div class="r" style="left:363.90px;top:441.70px;width:14.40px;height:13.90px;background:#363945;border-radius:1px;"></div>
<svg class="r" style="left:366.20px;top:444.20px;" width="10" height="10" viewBox="0 0 10 10"><path d="M6.41 5.02L6.55 5.46L7.37 5.56L7.37 6.44L6.55 6.54L6.41 6.98L6.37 7.08L6.15 7.49L6.67 8.15L6.05 8.77L5.39 8.25L4.98 8.47L4.88 8.51L4.44 8.65L4.34 9.47L3.46 9.47L3.36 8.65L2.92 8.51L2.82 8.47L2.41 8.25L1.75 8.77L1.13 8.15L1.65 7.49L1.43 7.08L1.39 6.98L1.25 6.54L0.43 6.44L0.43 5.56L1.25 5.46L1.39 5.02L1.43 4.92L1.65 4.51L1.13 3.85L1.75 3.23L2.41 3.75L2.82 3.53L2.92 3.49L3.36 3.35L3.46 2.53L4.34 2.53L4.44 3.35L4.88 3.49L4.98 3.53L5.39 3.75L6.05 3.23L6.67 3.85L6.15 4.51L6.37 4.92Z" fill="#e8e9ec"/><circle cx="3.9" cy="6" r="2.6" fill="#e8e9ec"/><circle cx="3.9" cy="6" r="1.0" fill="#32353f"/><path d="M9.29 1.79L9.44 2.15L9.97 2.23L9.97 2.97L9.44 3.05L9.29 3.41L9.25 3.49L9.01 3.79L9.20 4.30L8.57 4.66L8.23 4.24L7.84 4.30L7.76 4.30L7.37 4.24L7.03 4.66L6.40 4.30L6.59 3.79L6.35 3.49L6.31 3.41L6.16 3.05L5.63 2.97L5.63 2.23L6.16 2.15L6.31 1.79L6.35 1.71L6.59 1.41L6.40 0.90L7.03 0.54L7.37 0.96L7.76 0.90L7.84 0.90L8.23 0.96L8.57 0.54L9.20 0.90L9.01 1.41L9.25 1.71Z" fill="#e8e9ec"/><circle cx="7.8" cy="2.6" r="1.7" fill="#e8e9ec"/><circle cx="7.8" cy="2.6" r="0.7" fill="#32353f"/></svg>
<div class="r" style="left:384.70px;top:441.70px;width:14.50px;height:13.90px;background:#363945;border-radius:1px;"></div>
<svg class="r" style="left:386.30px;top:444.00px;" width="10" height="10" viewBox="0 0 10 10"><circle cx="5" cy="1.4" r="1.1" fill="#e8e9ec"/><circle cx="5" cy="5" r="1.1" fill="#e8e9ec"/><circle cx="5" cy="8.6" r="1.1" fill="#e8e9ec"/></svg>
<div class="r" style="left:593.70px;top:294.20px;width:164.60px;height:17.40px;background:#3d404c;border-radius:2px;"></div>
<div class="r" style="left:744.60px;top:294.20px;width:0.80px;height:17.40px;background:#2a2c35;"></div>
<svg class="r" style="left:748.50px;top:301.50px;" width="7" height="4" viewBox="0 0 7 4"><path d="M0.5 0.5H6.5L3.5 3.5Z" fill="#e8e8e8"/></svg>
<div class="t" style="left:600.00px;top:299.32px;font-size:8.48px;line-height:8.48px;color:#e4e5e9;letter-spacing:-0.221px;">Fade</div>
<div class="t" style="left:593.70px;top:318.92px;font-size:8.48px;line-height:8.48px;color:#e4e5e9;letter-spacing:-0.271px;">Duration</div>
<div class="r" style="left:628.00px;top:314.40px;width:130.30px;height:16.90px;background:#3d404c;border-radius:2px;"></div>
<div class="r" style="left:744.60px;top:314.40px;width:0.80px;height:16.90px;background:#2a2c35;"></div>
<svg class="r" style="left:749.50px;top:316.50px;" width="6" height="13" viewBox="0 0 6 13"><path d="M0.7 3.2L3 0.9L5.3 3.2M0.7 9.8L3 12.1L5.3 9.8" fill="none" stroke="#e0e0e0" stroke-width="0.9"/></svg>
<div class="t" style="left:634.00px;top:318.92px;font-size:8.48px;line-height:8.48px;color:#e4e5e9;letter-spacing:-0.221px;">300 ms</div>
<div class="r" style="left:703.00px;top:333.00px;width:14.70px;height:15.70px;background:#363945;border-radius:1px;"></div>
<svg class="r" style="left:705.60px;top:336.30px;" width="9.5" height="9.5" viewBox="0 0 10 10"><path d="M5 0.6V9.4M0.6 5H9.4" stroke="#e8e9ec" stroke-width="1.7"/></svg>
<svg class="r" style="left:726.00px;top:336.30px;" width="9.5" height="9.5" viewBox="0 0 10 10"><rect x="0.8" y="0.5" width="8.4" height="1.5" rx="0.6" fill="#e8e9ec"/><rect x="1.9" y="2.6" width="6.2" height="6.7" rx="1.3" fill="none" stroke="#e8e9ec" stroke-width="1.2"/><path d="M4.2 4.2V7.6M5.8 4.2V7.6" stroke="#e8e9ec" stroke-width="0.7" opacity="0.7"/></svg>
<svg class="r" style="left:745.00px;top:336.00px;" width="10" height="10" viewBox="0 0 10 10"><circle cx="5" cy="1.4" r="1.1" fill="#e8e9ec"/><circle cx="5" cy="5" r="1.1" fill="#e8e9ec"/><circle cx="5" cy="8.6" r="1.1" fill="#e8e9ec"/></svg>
<div class="r" style="left:768.20px;top:294.10px;width:128.00px;height:18.80px;background:#3d404c;border-radius:2px;"></div>
<div class="t" style="left:832.20px;top:299.62px;font-size:8.48px;line-height:8.48px;color:#e8e9ec;letter-spacing:-0.221px;transform:translateX(-50%);">Start Streaming</div>
<div class="r" style="left:768.20px;top:315.00px;width:128.00px;height:18.80px;background:#474b58;border-radius:2px;box-shadow:inset 0 0 0 0.8px #545763;"></div>
<div class="t" style="left:832.20px;top:320.52px;font-size:8.48px;line-height:8.48px;color:#e8e9ec;letter-spacing:-0.221px;transform:translateX(-50%);">Start Recording</div>
<div class="r" style="left:768.20px;top:357.30px;width:128.00px;height:18.80px;background:#3d404c;border-radius:2px;"></div>
<div class="t" style="left:832.20px;top:362.82px;font-size:8.48px;line-height:8.48px;color:#e8e9ec;letter-spacing:-0.221px;transform:translateX(-50%);">Studio Mode</div>
<div class="r" style="left:768.20px;top:378.40px;width:128.00px;height:18.80px;background:#3d404c;border-radius:2px;"></div>
<div class="t" style="left:832.20px;top:383.92px;font-size:8.48px;line-height:8.48px;color:#e8e9ec;letter-spacing:-0.221px;transform:translateX(-50%);">Settings</div>
<div class="r" style="left:768.20px;top:399.60px;width:128.00px;height:18.80px;background:#3d404c;border-radius:2px;"></div>
<div class="t" style="left:832.20px;top:405.12px;font-size:8.48px;line-height:8.48px;color:#e8e9ec;letter-spacing:-0.221px;transform:translateX(-50%);">Exit</div>
<div class="r" style="left:768.20px;top:336.00px;width:105.80px;height:18.80px;background:#3d404c;border-radius:2px;"></div>
<div class="t" style="left:821.10px;top:341.52px;font-size:8.48px;line-height:8.48px;color:#e8e9ec;letter-spacing:-0.221px;transform:translateX(-50%);">Start Virtual Camera</div>
<div class="r" style="left:877.00px;top:336.00px;width:19.00px;height:18.80px;background:#3d404c;border-radius:2px;"></div>
<svg class="r" style="left:881.80px;top:340.80px;" width="9.4" height="9.4" viewBox="0 0 10 10"><path d="M8.35 3.69L8.53 4.28L9.66 4.41L9.66 5.59L8.53 5.72L8.35 6.31L8.30 6.44L8.00 6.99L8.71 7.88L7.88 8.71L6.99 8.00L6.44 8.30L6.31 8.35L5.72 8.53L5.59 9.66L4.41 9.66L4.28 8.53L3.69 8.35L3.56 8.30L3.01 8.00L2.12 8.71L1.29 7.88L2.00 6.99L1.70 6.44L1.65 6.31L1.47 5.72L0.34 5.59L0.34 4.41L1.47 4.28L1.65 3.69L1.70 3.56L2.00 3.01L1.29 2.12L2.12 1.29L3.01 2.00L3.56 1.70L3.69 1.65L4.28 1.47L4.41 0.34L5.59 0.34L5.72 1.47L6.31 1.65L6.44 1.70L6.99 2.00L7.88 1.29L8.71 2.12L8.00 3.01L8.30 3.56Z" fill="#f4f4f4"/><circle cx="5" cy="5" r="3.5" fill="#f4f4f4"/><circle cx="5" cy="5" r="1.45" fill="#3a3d48"/></svg>
<div class="r" style="left:0.00px;top:458.50px;width:897.00px;height:20.00px;background:#252830;"></div>
<div class="r" style="left:653.20px;top:460.00px;width:0.80px;height:17.00px;background:#2c2e37;"></div>
<div class="r" style="left:673.40px;top:460.00px;width:0.80px;height:17.00px;background:#2c2e37;"></div>
<div class="r" style="left:725.00px;top:460.00px;width:0.80px;height:17.00px;background:#2c2e37;"></div>
<div class="r" style="left:825.20px;top:460.00px;width:0.80px;height:17.00px;background:#2c2e37;"></div>
<svg class="r" style="left:658.40px;top:462.50px;" width="9.2" height="9" viewBox="0 0 9.2 9"><path d="M0.5 8.5h1.3v-1.6h-1.3zM2.6 8.5h1.3v-3h-1.3zM4.7 8.5h1.3v-4.6h-1.3zM6.8 8.5h1.3v-6.4h-1.3zM8.9 8.5h0.3v-8h-0.3z" fill="#5e6068"/></svg>
<div class="r" style="left:681.00px;top:467.00px;width:3.70px;height:3.70px;background:#9fa0a5;border-radius:50%;"></div>
<div class="t" style="left:690.90px;top:465.70px;font-size:8.27px;line-height:8.27px;color:#8d8f96;letter-spacing:-0.215px;">00:00:00</div>
<div class="r" style="left:731.60px;top:464.50px;width:8.70px;height:8.70px;background:#4e5058;border-radius:50%;"></div>
<div class="t" style="left:744.00px;top:465.70px;font-size:8.27px;line-height:8.27px;color:#8d8f96;letter-spacing:-0.215px;">00:00:00</div>
<div class="t" style="left:784.50px;top:466.01px;font-size:7.9px;line-height:7.9px;color:#e4e5e9;letter-spacing:-0.206px;">CPU: 1.5%</div>
<div class="t" style="left:830.70px;top:465.97px;font-size:7.95px;line-height:7.95px;color:#e4e5e9;letter-spacing:-0.207px;">30.00 / 30.00 FPS</div>
<div class="r" style="left:0.00px;top:478.50px;width:900.00px;height:27.50px;background:#202020;"></div>
<svg class="r" style="left:11.80px;top:486.80px;" width="13" height="13" viewBox="0 0 13 13"><path d="M0.6 6.4Q0.9 1.2 6.5 1.2Q12.1 1.2 12.4 6.4Q10.9 5.4 9.6 6.4Q8 5.3 6.5 6.4Q5 5.3 3.4 6.4Q2.1 5.4 0.6 6.4Z" fill="#8cc4ee"/><path d="M6.5 6.2V10.9Q6.5 12.2 5.3 12" fill="none" stroke="#7a7a7a" stroke-width="0.9"/></svg>
<div class="r" style="left:18.30px;top:482.20px;width:8.90px;height:8.80px;background:#ef7f8c;border-radius:50%;"></div>
<div class="t" style="left:22.75px;top:483.56px;font-size:6.78px;line-height:6.78px;color:#3a1a1f;letter-spacing:-0.177px;transform:translateX(-50%);">1</div>
<div class="t" style="left:30.00px;top:483.55px;font-size:7.74px;line-height:7.74px;color:#f2f2f2;letter-spacing:-0.151px;">2 mm of rain</div>
<div class="t" style="left:30.00px;top:492.84px;font-size:7.63px;line-height:7.63px;color:#c4c4c4;letter-spacing:-0.169px;">Monday</div>
<svg class="r" style="left:287.10px;top:484.90px;" width="14.4" height="14.4" viewBox="0 0 14.4 14.4"><defs><linearGradient id="wg" x1="0" y1="0" x2="1" y2="1"><stop offset="0" stop-color="#6fd3ff"/><stop offset="1" stop-color="#1a9fe8"/></linearGradient></defs><rect x="0" y="0" width="6.8" height="6.8" fill="url(#wg)"/><rect x="7.6" y="0" width="6.8" height="6.8" fill="url(#wg)"/><rect x="0" y="7.6" width="6.8" height="6.8" fill="url(#wg)"/><rect x="7.6" y="7.6" width="6.8" height="6.8" fill="url(#wg)"/></svg>
<div class="r" style="left:308.40px;top:482.80px;width:128.90px;height:18.10px;background:#2e2e2e;border-radius:9px;box-shadow:inset 0 0 0 0.6px #3a3a3a;"></div>
<svg class="r" style="left:315.60px;top:487.60px;" width="9" height="9" viewBox="0 0 9 9"><circle cx="3.9" cy="3.9" r="3" fill="none" stroke="#e0e0e0" stroke-width="1.1"/><path d="M6.1 6.1L8.4 8.4" stroke="#e0e0e0" stroke-width="1.2"/></svg>
<div class="t" style="left:330.70px;top:488.78px;font-size:8.06px;line-height:8.06px;color:#d0d0d0;letter-spacing:-0.21px;">Search</div>
<svg class="r" style="left:409.00px;top:486.50px;" width="24" height="12" viewBox="0 0 24 12"><path d="M10 1L11.3 4.7L15 6L11.3 7.3L10 11L8.7 7.3L5 6L8.7 4.7Z" fill="#f5c531"/><path d="M18.5 5L19.2 7.3L21.5 8L19.2 8.7L18.5 11L17.8 8.7L15.5 8L17.8 7.3Z" fill="#f5c531"/><circle cx="2" cy="9.5" r="1" fill="#3a8fe0"/><circle cx="22.5" cy="11" r="0.8" fill="#7ab04a"/><circle cx="16" cy="2" r="0.6" fill="#e0603a"/></svg>
<div class="r" style="left:445.00px;top:489.00px;width:10.00px;height:9.00px;background:#6a6a6a;border-radius:1px;"></div>
<div class="r" style="left:448.20px;top:485.00px;width:11.00px;height:9.50px;background:#dcdcdc;border-radius:1px;"></div>
<svg class="r" style="left:470.00px;top:486.00px;" width="15.2" height="12.5" viewBox="0 0 15.2 12.5"><path d="M0.3 1.2Q0.3 0.3 1.2 0.3H5.5L7 1.8H14.1Q14.9 1.8 14.9 2.6V11.4Q14.9 12.2 14.1 12.2H1.1Q0.3 12.2 0.3 11.4Z" fill="#f2c64c"/><path d="M0.3 3.2H14.9" stroke="#d9a92e" stroke-width="0.5"/><rect x="4" y="9.2" width="7.2" height="3" fill="#2f78d8"/></svg>
<svg class="r" style="left:497.50px;top:484.50px;" width="12.5" height="14.5" viewBox="0 0 12.5 14.5"><path d="M2.2 0.8H10.3L12 3.2L11.2 9.8L6.25 14L1.3 9.8L0.5 3.2Z" fill="#f14c21"/><path d="M3.5 3.8L6.25 5.2L9 3.8L8.6 8.2L6.25 10.6L3.9 8.2Z" fill="#fbe9e4"/></svg>
<svg class="r" style="left:521.00px;top:486.00px;" width="14.8" height="13.3" viewBox="0 0 14.8 13.3"><defs><linearGradient id="sg" x1="0" y1="0" x2="0" y2="1"><stop offset="0" stop-color="#14205a"/><stop offset="1" stop-color="#1886c9"/></linearGradient></defs><ellipse cx="7.8" cy="6.65" rx="6.6" ry="6.5" fill="url(#sg)"/><circle cx="9.8" cy="4.4" r="2.4" fill="#e8ecf2"/><circle cx="9.8" cy="4.4" r="1.1" fill="#5a6a90"/><path d="M0.4 6.3L5.5 8.6Q7 9.4 8.2 7.8L9.2 6" stroke="#e8ecf2" stroke-width="2" fill="none"/></svg>
<svg class="r" style="left:548.00px;top:484.50px;" width="14.4" height="14.4" viewBox="0 0 14.4 14.4"><circle cx="7.2" cy="7.2" r="7" fill="#1ed760"/><path d="M3.4 5.3Q7.6 3.9 11.2 5.9M3.9 7.6Q7.3 6.6 10.4 8.2M4.3 9.8Q7 9 9.5 10.2" fill="none" stroke="#0f3a20" stroke-width="1.1" stroke-linecap="round"/></svg>
<div class="r" style="left:573.80px;top:484.30px;width:14.30px;height:15.30px;background:#3561f5;border-radius:2.5px;"></div>
<svg class="r" style="left:575.50px;top:486.00px;" width="11" height="12" viewBox="0 0 11 12"><path d="M3.2 1.6L10 3.4L8.2 10.4L1.4 8.6Z" fill="#ffffff"/><rect x="5" y="5.2" width="1.6" height="1.6" fill="#3561f5"/></svg>
<div class="r" style="left:594.00px;top:480.00px;width:24.70px;height:23.90px;background:#2a2a2a;border-radius:3px;"></div>
<svg class="r" style="left:599.70px;top:484.50px;" width="13.8" height="14" viewBox="0 0 14 14"><circle cx="7" cy="7" r="6.2" fill="#141414" stroke="#d4d4d4" stroke-width="1.3"/><path d="M7 7Q5.2 5.6 6.2 2.2M7 7Q9.1 6.3 11 8.9M7 7Q6.9 9.3 3.6 10.2" fill="none" stroke="#bdbdbd" stroke-width="0.9"/></svg>
<div class="r" style="left:601.80px;top:501.40px;width:9.70px;height:1.90px;background:#4cc2ff;border-radius:1px;"></div>
<div class="r" style="left:476.00px;top:501.70px;width:3.20px;height:1.00px;background:#8a8a8a;border-radius:0.5px;"></div>
<div class="r" style="left:501.40px;top:501.70px;width:3.20px;height:1.00px;background:#8a8a8a;border-radius:0.5px;"></div>
<div class="r" style="left:526.80px;top:501.70px;width:3.20px;height:1.00px;background:#8a8a8a;border-radius:0.5px;"></div>
<div class="r" style="left:553.20px;top:501.70px;width:3.20px;height:1.00px;background:#8a8a8a;border-radius:0.5px;"></div>
<div class="r" style="left:579.20px;top:501.70px;width:3.20px;height:1.00px;background:#8a8a8a;border-radius:0.5px;"></div>
<svg class="r" style="left:743.60px;top:489.30px;" width="7" height="4.6" viewBox="0 0 7 4.6"><path d="M0.6 4L3.5 1L6.4 4" fill="none" stroke="#f0f0f0" stroke-width="1"/></svg>
<svg class="r" style="left:761.50px;top:486.30px;" width="7.5" height="10" viewBox="0 0 7.5 10"><rect x="2.3" y="0.5" width="3" height="5.8" rx="1.5" fill="#5fc6d0"/><path d="M0.9 4.4Q0.9 7.6 3.8 7.6Q6.6 7.6 6.6 4.4M3.8 7.6V9.6" fill="none" stroke="#5fc6d0" stroke-width="0.9"/></svg>
<div class="t" style="left:787.80px;top:484.50px;font-size:7.21px;line-height:7.21px;color:#ededed;letter-spacing:-0.188px;transform:translateX(-50%);">ENG</div>
<div class="t" style="left:788.00px;top:493.70px;font-size:7.21px;line-height:7.21px;color:#ededed;letter-spacing:-0.188px;transform:translateX(-50%);">US</div>
<svg class="r" style="left:805.60px;top:488.00px;" width="8.4" height="7" viewBox="0 0 8.4 7"><path d="M0.5 2.4Q4.2 -0.6 7.9 2.4L4.2 6.6Z" fill="#8e8e8e"/><path d="M2 4.2Q4.2 2.6 6.4 4.2L4.2 6.6Z" fill="#e8e8e8"/></svg>
<svg class="r" style="left:818.80px;top:486.60px;" width="10" height="10" viewBox="0 0 10 10"><path d="M0.6 3.6H2.6L5.2 1.2V8.8L2.6 6.4H0.6Z" fill="none" stroke="#eeeeee" stroke-width="0.9"/><path d="M6.6 3.2Q7.5 5 6.6 6.8M8.1 2Q9.6 5 8.1 8" fill="none" stroke="#eeeeee" stroke-width="0.9"/></svg>
<svg class="r" style="left:833.00px;top:486.50px;" width="10.5" height="9.5" viewBox="0 0 10.5 9.5"><rect x="0.5" y="2.5" width="8.6" height="5.8" rx="1" fill="#eeeeee"/><rect x="9.3" y="4.2" width="1" height="2.4" fill="#eeeeee"/><path d="M2.2 0.4V2.6M4.2 0.4V2.6" stroke="#eeeeee" stroke-width="0.7"/></svg>
<div class="t" style="right:11.30px;top:483.42px;font-size:7.53px;line-height:7.53px;color:#f0f0f0;letter-spacing:-0.196px;">5:36 PM</div>
<div class="t" style="right:11.50px;top:492.92px;font-size:7.53px;line-height:7.53px;color:#f0f0f0;letter-spacing:-0.196px;">2025-11-21</div>
<svg class="r" style="left:694.50px;top:428.00px;" width="7.5" height="10.5" viewBox="0 0 7.5 10.5"><path d="M0.7 0.7V8.6L2.6 6.9L4 9.9L5.4 9.3L4.1 6.4H6.7Z" fill="#ffffff" stroke="#000000" stroke-width="0.8" stroke-linejoin="round"/></svg></div>
<div class="r" style="left:0.00px;top:245.50px;width:897.30px;height:28.50px;background:#262932;"></div>
<div class="t" style="left:6.00px;top:256.34px;font-size:8.69px;line-height:8.69px;color:#e4e5e9;letter-spacing:-0.376px;">No source selected</div>
<div class="r" style="left:125.5px;top:251.5px;width:62.7px;height:18px;border:1px solid #2e3039;box-sizing:border-box;border-radius:2px"></div>
<div class="r" style="left:192px;top:251.5px;width:48.7px;height:18px;border:1px solid #2e3039;box-sizing:border-box;border-radius:2px"></div>
<svg class="r" style="left:132.80px;top:256.30px;" width="9" height="9" viewBox="0 0 10 10"><path d="M8.35 3.69L8.53 4.28L9.66 4.41L9.66 5.59L8.53 5.72L8.35 6.31L8.30 6.44L8.00 6.99L8.71 7.88L7.88 8.71L6.99 8.00L6.44 8.30L6.31 8.35L5.72 8.53L5.59 9.66L4.41 9.66L4.28 8.53L3.69 8.35L3.56 8.30L3.01 8.00L2.12 8.71L1.29 7.88L2.00 6.99L1.70 6.44L1.65 6.31L1.47 5.72L0.34 5.59L0.34 4.41L1.47 4.28L1.65 3.69L1.70 3.56L2.00 3.01L1.29 2.12L2.12 1.29L3.01 2.00L3.56 1.70L3.69 1.65L4.28 1.47L4.41 0.34L5.59 0.34L5.72 1.47L6.31 1.65L6.44 1.70L6.99 2.00L7.88 1.29L8.71 2.12L8.00 3.01L8.30 3.56Z" fill="#c9cacd"/><circle cx="5" cy="5" r="3.5" fill="#c9cacd"/><circle cx="5" cy="5" r="1.45" fill="#252830"/></svg>
<svg class="r" style="left:199.80px;top:256.30px;" width="9" height="9" viewBox="0 0 10 10"><rect x="1.2" y="1.2" width="7.6" height="7.6" rx="1.6" fill="none" stroke="#c9cacd" stroke-width="1.1"/><path d="M2.3 1.5H4.6V8.5H2.3Q1.5 8.5 1.5 7.4V2.6Q1.5 1.5 2.3 1.5Z" fill="#c9cacd"/><rect x="4.6" y="1.5" width="1.3" height="7" fill="#c9cacd" opacity="0.55"/><path d="M7.3 3V7" stroke="#c9cacd" stroke-width="0.6" opacity="0.6"/></svg>
<div class="t" style="left:142.40px;top:256.54px;font-size:8.69px;line-height:8.69px;color:#8a8c94;letter-spacing:-0.376px;">Properties</div>
<div class="t" style="left:210.30px;top:256.54px;font-size:8.69px;line-height:8.69px;color:#8a8c94;letter-spacing:-0.376px;">Filters</div>
<div class="r" style="left:1.50px;top:275.20px;width:172.20px;height:182.30px;background:#272a33;border-radius:2px;box-shadow:inset 0 0 0 1px #2e313a;"></div>
<div class="r" style="left:1.50px;top:275.20px;width:172.20px;height:15.00px;background:#3d404c;border-radius:2px 2px 0 0;"></div>
<div class="r" style="left:1.50px;top:290.20px;width:172.20px;height:0.80px;background:#22242b;"></div>
<div class="t" style="left:5.30px;top:278.72px;font-size:8.48px;line-height:8.48px;color:#f4f4f6;font-weight:700;letter-spacing:-0.321px;">Scenes</div>
<svg class="r" style="left:161.90px;top:278.40px;" width="10" height="9.5" viewBox="0 0 10 9.5"><rect x="0.6" y="0.6" width="6.3" height="5.3" rx="0.8" fill="none" stroke="#e0e1e4" stroke-width="1"/><rect x="0.6" y="0.6" width="6.3" height="1.6" fill="#e0e1e4"/><rect x="3.4" y="3.6" width="6" height="5.3" rx="0.8" fill="#2a2d37" stroke="#e0e1e4" stroke-width="1"/><rect x="3.4" y="3.6" width="6" height="1.6" fill="#e0e1e4"/></svg>
<div class="r" style="left:176.00px;top:275.20px;width:182.80px;height:182.30px;background:#272a33;border-radius:2px;box-shadow:inset 0 0 0 1px #2e313a;"></div>
<div class="r" style="left:176.00px;top:275.20px;width:182.80px;height:15.00px;background:#3d404c;border-radius:2px 2px 0 0;"></div>
<div class="r" style="left:176.00px;top:290.20px;width:182.80px;height:0.80px;background:#22242b;"></div>
<div class="t" style="left:179.80px;top:278.72px;font-size:8.48px;line-height:8.48px;color:#f4f4f6;font-weight:700;letter-spacing:-0.321px;">Sources</div>
<svg class="r" style="left:347.00px;top:278.40px;" width="10" height="9.5" viewBox="0 0 10 9.5"><rect x="0.6" y="0.6" width="6.3" height="5.3" rx="0.8" fill="none" stroke="#e0e1e4" stroke-width="1"/><rect x="0.6" y="0.6" width="6.3" height="1.6" fill="#e0e1e4"/><rect x="3.4" y="3.6" width="6" height="5.3" rx="0.8" fill="#2a2d37" stroke="#e0e1e4" stroke-width="1"/><rect x="3.4" y="3.6" width="6" height="1.6" fill="#e0e1e4"/></svg>
<div class="r" style="left:361.00px;top:275.20px;width:227.50px;height:182.30px;background:#272a33;border-radius:2px;box-shadow:inset 0 0 0 1px #2e313a;"></div>
<div class="r" style="left:361.00px;top:275.20px;width:227.50px;height:15.00px;background:#3d404c;border-radius:2px 2px 0 0;"></div>
<div class="r" style="left:361.00px;top:290.20px;width:227.50px;height:0.80px;background:#22242b;"></div>
<div class="t" style="left:364.80px;top:278.72px;font-size:8.48px;line-height:8.48px;color:#f4f4f6;font-weight:700;letter-spacing:-0.321px;">Audio Mixer</div>
<svg class="r" style="left:576.70px;top:278.40px;" width="10" height="9.5" viewBox="0 0 10 9.5"><rect x="0.6" y="0.6" width="6.3" height="5.3" rx="0.8" fill="none" stroke="#e0e1e4" stroke-width="1"/><rect x="0.6" y="0.6" width="6.3" height="1.6" fill="#e0e1e4"/><rect x="3.4" y="3.6" width="6" height="5.3" rx="0.8" fill="#2a2d37" stroke="#e0e1e4" stroke-width="1"/><rect x="3.4" y="3.6" width="6" height="1.6" fill="#e0e1e4"/></svg>
<div class="r" style="left:591.00px;top:275.20px;width:170.50px;height:182.30px;background:#272a33;border-radius:2px;box-shadow:inset 0 0 0 1px #2e313a;"></div>
<div class="r" style="left:591.00px;top:275.20px;width:170.50px;height:15.00px;background:#3d404c;border-radius:2px 2px 0 0;"></div>
<div class="r" style="left:591.00px;top:290.20px;width:170.50px;height:0.80px;background:#22242b;"></div>
<div class="t" style="left:594.80px;top:278.72px;font-size:8.48px;line-height:8.48px;color:#f4f4f6;font-weight:700;letter-spacing:-0.321px;">Scene Transitions</div>
<svg class="r" style="left:749.70px;top:278.40px;" width="10" height="9.5" viewBox="0 0 10 9.5"><rect x="0.6" y="0.6" width="6.3" height="5.3" rx="0.8" fill="none" stroke="#e0e1e4" stroke-width="1"/><rect x="0.6" y="0.6" width="6.3" height="1.6" fill="#e0e1e4"/><rect x="3.4" y="3.6" width="6" height="5.3" rx="0.8" fill="#2a2d37" stroke="#e0e1e4" stroke-width="1"/><rect x="3.4" y="3.6" width="6" height="1.6" fill="#e0e1e4"/></svg>
<div class="r" style="left:764.00px;top:275.20px;width:134.60px;height:182.30px;background:#272a33;border-radius:2px;box-shadow:inset 0 0 0 1px #2e313a;"></div>
<div class="r" style="left:764.00px;top:275.20px;width:134.60px;height:15.00px;background:#3d404c;border-radius:2px 2px 0 0;"></div>
<div class="r" style="left:764.00px;top:290.20px;width:134.60px;height:0.80px;background:#22242b;"></div>
<div class="t" style="left:767.80px;top:278.72px;font-size:8.48px;line-height:8.48px;color:#f4f4f6;font-weight:700;letter-spacing:-0.321px;">Controls</div>
<svg class="r" style="left:886.80px;top:278.40px;" width="10" height="9.5" viewBox="0 0 10 9.5"><rect x="0.6" y="0.6" width="6.3" height="5.3" rx="0.8" fill="none" stroke="#e0e1e4" stroke-width="1"/><rect x="0.6" y="0.6" width="6.3" height="1.6" fill="#e0e1e4"/><rect x="3.4" y="3.6" width="6" height="5.3" rx="0.8" fill="#2a2d37" stroke="#e0e1e4" stroke-width="1"/><rect x="3.4" y="3.6" width="6" height="1.6" fill="#e0e1e4"/></svg>
<div class="r" style="left:2.00px;top:291.70px;width:170.00px;height:17.30px;background:#2a4ac0;border-radius:1px;"></div>
<div class="t" style="left:6.30px;top:296.82px;font-size:8.48px;line-height:8.48px;color:#ffffff;letter-spacing:-0.221px;">Scene</div>
<div class="r" style="left:2.90px;top:442.00px;width:14.40px;height:13.60px;background:#363945;border-radius:1px;"></div>
<svg class="r" style="left:5.60px;top:444.30px;" width="9" height="9" viewBox="0 0 10 10"><path d="M5 0.6V9.4M0.6 5H9.4" stroke="#e8e9ec" stroke-width="1.7"/></svg>
<div class="r" style="left:20.00px;top:442.00px;width:14.40px;height:13.60px;background:#363945;border-radius:1px;"></div>
<svg class="r" style="left:22.70px;top:444.30px;" width="9" height="9" viewBox="0 0 10 10"><rect x="0.8" y="0.5" width="8.4" height="1.5" rx="0.6" fill="#e8e9ec"/><rect x="1.9" y="2.6" width="6.2" height="6.7" rx="1.3" fill="none" stroke="#e8e9ec" stroke-width="1.2"/><path d="M4.2 4.2V7.6M5.8 4.2V7.6" stroke="#e8e9ec" stroke-width="0.7" opacity="0.7"/></svg>
<div class="r" style="left:40.00px;top:442.00px;width:14.70px;height:13.60px;background:#363945;border-radius:1px;"></div>
<svg class="r" style="left:42.85px;top:444.30px;" width="9" height="9" viewBox="0 0 10 10"><rect x="1.2" y="1.2" width="7.6" height="7.6" rx="1.6" fill="none" stroke="#e8e9ec" stroke-width="1.1"/><path d="M2.3 1.5H4.6V8.5H2.3Q1.5 8.5 1.5 7.4V2.6Q1.5 1.5 2.3 1.5Z" fill="#e8e9ec"/><rect x="4.6" y="1.5" width="1.3" height="7" fill="#e8e9ec" opacity="0.55"/><path d="M7.3 3V7" stroke="#e8e9ec" stroke-width="0.6" opacity="0.6"/></svg>
<div class="r" style="left:61.00px;top:442.00px;width:14.70px;height:13.60px;background:#363945;border-radius:1px;"></div>
<svg class="r" style="left:63.85px;top:444.30px;" width="9" height="9" viewBox="0 0 10 10"><path d="M0.8 7L5 2.8L9.2 7" fill="none" stroke="#e8e9ec" stroke-width="1.35"/></svg>
<div class="r" style="left:78.00px;top:442.00px;width:14.30px;height:13.60px;background:#363945;border-radius:1px;"></div>
<svg class="r" style="left:80.65px;top:444.30px;" width="9" height="9" viewBox="0 0 10 10"><path d="M0.8 3L5 7.2L9.2 3" fill="none" stroke="#e8e9ec" stroke-width="1.35"/></svg>
<svg class="r" style="left:182.70px;top:297.00px;" width="9.3" height="9.3" viewBox="0 0 10 10"><rect x="0.8" y="0.8" width="8.4" height="6.6" rx="1.5" fill="none" stroke="#e8e9ec" stroke-width="1.4"/><path d="M3.6 9H6.4" stroke="#e8e9ec" stroke-width="1.1"/></svg>
<div class="t" style="left:193.80px;top:297.02px;font-size:8.48px;line-height:8.48px;color:#e8e9ec;letter-spacing:-0.271px;">Display Capture</div>
<svg class="r" style="left:182.70px;top:317.60px;" width="9.3" height="4.6" viewBox="0 0 10 5"><path d="M1.5 0.6H8.5Q9.7 0.6 9.7 2.4Q9.7 4.4 8.5 4.4Q7.5 4.4 6.8 3.4H3.2Q2.5 4.4 1.5 4.4Q0.3 4.4 0.3 2.4Q0.3 0.6 1.5 0.6Z" fill="#e8e9ec"/><circle cx="2.3" cy="2.3" r="0.6" fill="#1f212a"/><circle cx="7.7" cy="2.3" r="0.6" fill="#1f212a"/></svg>
<div class="t" style="left:193.80px;top:315.72px;font-size:8.48px;line-height:8.48px;color:#e8e9ec;letter-spacing:-0.221px;">Roblox</div>
<svg class="r" style="left:327.50px;top:298.30px;" width="9.7" height="6.9" viewBox="0 0 10 7"><ellipse cx="5" cy="3.5" rx="4.2" ry="3" fill="none" stroke="#f4f4f4" stroke-width="1.35"/><circle cx="5" cy="3.5" r="1.4" fill="#f4f4f4"/></svg>
<svg class="r" style="left:327.50px;top:316.90px;" width="9.7" height="6.9" viewBox="0 0 10 7"><ellipse cx="5" cy="3.5" rx="4.2" ry="3" fill="none" stroke="#f4f4f4" stroke-width="1.35"/><circle cx="5" cy="3.5" r="1.4" fill="#f4f4f4"/></svg>
<svg class="r" style="left:343.60px;top:296.70px;" width="7.8" height="9.2" viewBox="0 0 8.2 9.6"><path d="M2 4.6V2.8Q2 0.7 4 0.7Q6 0.7 6 2.8V3.4" fill="none" stroke="#9d9ea2" stroke-width="1.2"/><rect x="0.6" y="4.4" width="7" height="4.8" rx="0.5" fill="#9d9ea2"/></svg>
<svg class="r" style="left:343.60px;top:315.30px;" width="7.8" height="9.2" viewBox="0 0 8.2 9.6"><path d="M2 4.6V2.8Q2 0.7 4 0.7Q6 0.7 6 2.8V3.4" fill="none" stroke="#9d9ea2" stroke-width="1.2"/><rect x="0.6" y="4.4" width="7" height="4.8" rx="0.5" fill="#9d9ea2"/></svg>
<div class="r" style="left:179.30px;top:442.00px;width:14.70px;height:13.60px;background:#363945;border-radius:1px;"></div>
<svg class="r" style="left:182.10px;top:444.30px;" width="9" height="9" viewBox="0 0 10 10"><path d="M5 0.6V9.4M0.6 5H9.4" stroke="#e8e9ec" stroke-width="1.7"/></svg>
<svg class="r" style="left:199.40px;top:444.30px;" width="9" height="9" viewBox="0 0 10 10"><rect x="0.8" y="0.5" width="8.4" height="1.5" rx="0.6" fill="#e8e9ec"/><rect x="1.9" y="2.6" width="6.2" height="6.7" rx="1.3" fill="none" stroke="#e8e9ec" stroke-width="1.2"/><path d="M4.2 4.2V7.6M5.8 4.2V7.6" stroke="#e8e9ec" stroke-width="0.7" opacity="0.7"/></svg>
<svg class="r" style="left:219.50px;top:444.30px;" width="9" height="9" viewBox="0 0 10 10"><path d="M8.35 3.69L8.53 4.28L9.66 4.41L9.66 5.59L8.53 5.72L8.35 6.31L8.30 6.44L8.00 6.99L8.71 7.88L7.88 8.71L6.99 8.00L6.44 8.30L6.31 8.35L5.72 8.53L5.59 9.66L4.41 9.66L4.28 8.53L3.69 8.35L3.56 8.30L3.01 8.00L2.12 8.71L1.29 7.88L2.00 6.99L1.70 6.44L1.65 6.31L1.47 5.72L0.34 5.59L0.34 4.41L1.47 4.28L1.65 3.69L1.70 3.56L2.00 3.01L1.29 2.12L2.12 1.29L3.01 2.00L3.56 1.70L3.69 1.65L4.28 1.47L4.41 0.34L5.59 0.34L5.72 1.47L6.31 1.65L6.44 1.70L6.99 2.00L7.88 1.29L8.71 2.12L8.00 3.01L8.30 3.56Z" fill="#e8e9ec"/><circle cx="5" cy="5" r="3.5" fill="#e8e9ec"/><circle cx="5" cy="5" r="1.45" fill="#272a33"/></svg>
<svg class="r" style="left:239.70px;top:444.30px;" width="9" height="9" viewBox="0 0 10 10"><path d="M0.8 7L5 2.8L9.2 7" fill="none" stroke="#e8e9ec" stroke-width="1.35"/></svg>
<svg class="r" style="left:257.20px;top:444.30px;" width="9" height="9" viewBox="0 0 10 10"><path d="M0.8 3L5 7.2L9.2 3" fill="none" stroke="#e8e9ec" stroke-width="1.35"/></svg>
<div class="r" style="left:361.50px;top:291.00px;width:227.00px;height:149.00px;background:#1f2026;box-shadow:inset 0 0 0 1px #2c2f38;"></div>
<div class="r" style="left:362.30px;top:291.00px;width:225.40px;height:42.60px;background:#272a33;"></div>
<div class="r" style="left:362.30px;top:334.40px;width:225.40px;height:45.10px;background:#272a33;"></div>
<div class="t" style="left:365.60px;top:292.82px;font-size:8.48px;line-height:8.48px;color:#e4e5e9;letter-spacing:-0.201px;">Desktop Audio</div>
<div class="t" style="right:316.50px;top:292.82px;font-size:8.48px;line-height:8.48px;color:#8d8f96;letter-spacing:-0.221px;">0.0 dB</div>
<div class="r" style="left:366.70px;top:303.30px;width:13.30px;height:13.40px;background:#363945;border-radius:1px;"></div>
<svg class="r" style="left:367.80px;top:305.00px;" width="10" height="10" viewBox="0 0 10 10"><circle cx="5" cy="1.4" r="1.1" fill="#e8e9ec"/><circle cx="5" cy="5" r="1.1" fill="#e8e9ec"/><circle cx="5" cy="8.6" r="1.1" fill="#e8e9ec"/></svg>
<div class="r" style="left:366.00px;top:319.30px;width:14.00px;height:12.70px;background:#363945;border-radius:1px;"></div>
<svg class="r" style="left:367.50px;top:320.60px;" width="11" height="11" viewBox="0 0 10 10"><path d="M0.5 3.2H2.5L5.3 0.9V9.1L2.5 6.8H0.5Z" fill="#f2f2f2"/><path d="M6.6 3.1Q7.8 5 6.6 6.9M8.3 1.5Q10.2 5 8.3 8.5" fill="none" stroke="#f2f2f2" stroke-width="1.2"/></svg>
<div class="r" style="left:383.00px;top:303.60px;width:87.70px;height:4.35px;background:#3cd43c;"></div>
<div class="r" style="left:470.70px;top:303.60px;width:47.60px;height:4.35px;background:#1e7a1e;"></div>
<div class="r" style="left:518.30px;top:303.60px;width:36.60px;height:4.35px;background:#9a7612;"></div>
<div class="r" style="left:554.90px;top:303.60px;width:29.10px;height:4.35px;background:#a51f27;"></div>
<div class="r" style="left:523.60px;top:303.60px;width:2.00px;height:4.35px;background:#f0b020;"></div>
<div class="r" style="left:383.00px;top:308.85px;width:86.60px;height:3.75px;background:#3cd43c;"></div>
<div class="r" style="left:469.60px;top:308.85px;width:48.70px;height:3.75px;background:#1e7a1e;"></div>
<div class="r" style="left:518.30px;top:308.85px;width:36.60px;height:3.75px;background:#9a7612;"></div>
<div class="r" style="left:554.90px;top:308.85px;width:29.10px;height:3.75px;background:#a51f27;"></div>
<div class="r" style="left:552.60px;top:308.85px;width:1.80px;height:3.75px;background:#f0b020;"></div>
<div class="r" style="left:385.00px;top:303.60px;width:1.00px;height:9.00px;background:#0d2a0d;"></div>
<div class="t" style="left:387.70px;top:313.77px;font-size:5.94px;line-height:5.94px;color:#dcdde0;letter-spacing:-0.305px;transform:translateX(-50%);">-60</div>
<div class="t" style="left:404.06px;top:313.77px;font-size:5.94px;line-height:5.94px;color:#dcdde0;letter-spacing:-0.305px;transform:translateX(-50%);">-55</div>
<div class="r" style="left:400.32px;top:312.90px;width:0.70px;height:1.20px;background:#b8b8b8;"></div>
<div class="t" style="left:420.42px;top:313.77px;font-size:5.94px;line-height:5.94px;color:#dcdde0;letter-spacing:-0.305px;transform:translateX(-50%);">-50</div>
<div class="r" style="left:417.05px;top:312.90px;width:0.70px;height:1.20px;background:#b8b8b8;"></div>
<div class="t" style="left:436.78px;top:313.77px;font-size:5.94px;line-height:5.94px;color:#dcdde0;letter-spacing:-0.305px;transform:translateX(-50%);">-45</div>
<div class="r" style="left:433.78px;top:312.90px;width:0.70px;height:1.20px;background:#b8b8b8;"></div>
<div class="t" style="left:453.14px;top:313.77px;font-size:5.94px;line-height:5.94px;color:#dcdde0;letter-spacing:-0.305px;transform:translateX(-50%);">-40</div>
<div class="r" style="left:450.50px;top:312.90px;width:0.70px;height:1.20px;background:#b8b8b8;"></div>
<div class="t" style="left:469.50px;top:313.77px;font-size:5.94px;line-height:5.94px;color:#dcdde0;letter-spacing:-0.305px;transform:translateX(-50%);">-35</div>
<div class="r" style="left:467.23px;top:312.90px;width:0.70px;height:1.20px;background:#b8b8b8;"></div>
<div class="t" style="left:485.86px;top:313.77px;font-size:5.94px;line-height:5.94px;color:#dcdde0;letter-spacing:-0.305px;transform:translateX(-50%);">-30</div>
<div class="r" style="left:483.95px;top:312.90px;width:0.70px;height:1.20px;background:#b8b8b8;"></div>
<div class="t" style="left:502.22px;top:313.77px;font-size:5.94px;line-height:5.94px;color:#dcdde0;letter-spacing:-0.305px;transform:translateX(-50%);">-25</div>
<div class="r" style="left:500.68px;top:312.90px;width:0.70px;height:1.20px;background:#b8b8b8;"></div>
<div class="t" style="left:518.58px;top:313.77px;font-size:5.94px;line-height:5.94px;color:#dcdde0;letter-spacing:-0.305px;transform:translateX(-50%);">-20</div>
<div class="r" style="left:517.40px;top:312.90px;width:0.70px;height:1.20px;background:#b8b8b8;"></div>
<div class="t" style="left:534.94px;top:313.77px;font-size:5.94px;line-height:5.94px;color:#dcdde0;letter-spacing:-0.305px;transform:translateX(-50%);">-15</div>
<div class="r" style="left:534.13px;top:312.90px;width:0.70px;height:1.20px;background:#b8b8b8;"></div>
<div class="t" style="left:551.30px;top:313.77px;font-size:5.94px;line-height:5.94px;color:#dcdde0;letter-spacing:-0.305px;transform:translateX(-50%);">-10</div>
<div class="r" style="left:550.85px;top:312.90px;width:0.70px;height:1.20px;background:#b8b8b8;"></div>
<div class="t" style="left:567.66px;top:313.77px;font-size:5.94px;line-height:5.94px;color:#dcdde0;letter-spacing:-0.305px;transform:translateX(-50%);">-5</div>
<div class="r" style="left:567.58px;top:312.90px;width:0.70px;height:1.20px;background:#b8b8b8;"></div>
<div class="t" style="right:316.00px;top:313.77px;font-size:5.94px;line-height:5.94px;color:#dcdde0;letter-spacing:-0.155px;">0</div>
<div class="r" style="left:383.00px;top:325.90px;width:200.00px;height:3.30px;background:#3e62cc;border-radius:1.5px;"></div>
<div class="r" style="left:392.70px;top:324.50px;width:0.70px;height:6.00px;background:rgba(190,185,160,0.3);"></div>
<div class="r" style="left:400.10px;top:324.50px;width:0.70px;height:6.00px;background:rgba(190,185,160,0.3);"></div>
<div class="r" style="left:408.20px;top:324.50px;width:0.70px;height:6.00px;background:rgba(190,185,160,0.3);"></div>
<div class="r" style="left:418.00px;top:324.50px;width:0.70px;height:6.00px;background:rgba(190,185,160,0.3);"></div>
<div class="r" style="left:429.00px;top:324.50px;width:0.70px;height:6.00px;background:rgba(190,185,160,0.3);"></div>
<div class="r" style="left:441.70px;top:324.50px;width:0.70px;height:6.00px;background:rgba(190,185,160,0.3);"></div>
<div class="r" style="left:458.40px;top:324.50px;width:0.70px;height:6.00px;background:rgba(190,185,160,0.3);"></div>
<div class="r" style="left:480.90px;top:324.50px;width:0.70px;height:6.00px;background:rgba(190,185,160,0.3);"></div>
<div class="r" style="left:517.20px;top:324.50px;width:0.70px;height:6.00px;background:rgba(190,185,160,0.3);"></div>
<div class="r" style="left:572.00px;top:324.60px;width:12.00px;height:5.80px;background:#ffffff;border-radius:2.5px;"></div>
<div class="t" style="left:365.60px;top:338.12px;font-size:8.48px;line-height:8.48px;color:#e4e5e9;letter-spacing:-0.221px;">Mic/Aux</div>
<div class="t" style="right:316.50px;top:338.12px;font-size:8.48px;line-height:8.48px;color:#8d8f96;letter-spacing:-0.221px;">0.0 dB</div>
<div class="r" style="left:366.70px;top:348.30px;width:13.30px;height:13.40px;background:#363945;border-radius:1px;"></div>
<svg class="r" style="left:367.80px;top:350.50px;" width="10" height="10" viewBox="0 0 10 10"><circle cx="5" cy="1.4" r="1.1" fill="#e8e9ec"/><circle cx="5" cy="5" r="1.1" fill="#e8e9ec"/><circle cx="5" cy="8.6" r="1.1" fill="#e8e9ec"/></svg>
<div class="r" style="left:366.00px;top:364.30px;width:14.00px;height:12.70px;background:#363945;border-radius:1px;"></div>
<svg class="r" style="left:367.50px;top:365.60px;" width="10" height="10" viewBox="0 0 10 10"><path d="M0.6 3.4H2.4L5.2 1V9L2.4 6.6H0.6Z" fill="#e0283c"/><path d="M6.4 3.9L9 6.3M9 3.9L6.4 6.3" stroke="#e0283c" stroke-width="1.4"/></svg>
<div class="r" style="left:383.00px;top:348.30px;width:33.00px;height:4.65px;background:#b9b9b9;"></div>
<div class="r" style="left:416.00px;top:348.30px;width:1.60px;height:4.65px;background:#272a33;"></div>
<div class="r" style="left:417.60px;top:348.30px;width:60.40px;height:4.65px;background:#b9b9b9;"></div>
<div class="r" style="left:478.00px;top:348.30px;width:76.70px;height:4.65px;background:#6f6f6f;"></div>
<div class="r" style="left:554.70px;top:348.30px;width:29.30px;height:4.65px;background:#4b4b4b;"></div>
<div class="r" style="left:514.00px;top:348.30px;width:1.80px;height:4.65px;background:#d8d8d8;"></div>
<div class="r" style="left:383.00px;top:353.85px;width:31.70px;height:3.75px;background:#b9b9b9;"></div>
<div class="r" style="left:414.70px;top:353.85px;width:1.60px;height:3.75px;background:#272a33;"></div>
<div class="r" style="left:416.30px;top:353.85px;width:75.70px;height:3.75px;background:#b9b9b9;"></div>
<div class="r" style="left:492.00px;top:353.85px;width:62.70px;height:3.75px;background:#6f6f6f;"></div>
<div class="r" style="left:554.70px;top:353.85px;width:29.30px;height:3.75px;background:#4b4b4b;"></div>
<div class="r" style="left:536.80px;top:353.85px;width:1.80px;height:3.75px;background:#e8e8e8;"></div>
<div class="r" style="left:383.30px;top:348.30px;width:2.00px;height:9.30px;background:#2fc22f;"></div>
<div class="t" style="left:387.70px;top:358.77px;font-size:5.94px;line-height:5.94px;color:#dcdde0;letter-spacing:-0.305px;transform:translateX(-50%);">-60</div>
<div class="t" style="left:404.06px;top:358.77px;font-size:5.94px;line-height:5.94px;color:#dcdde0;letter-spacing:-0.305px;transform:translateX(-50%);">-55</div>
<div class="r" style="left:400.32px;top:357.90px;width:0.70px;height:1.20px;background:#b8b8b8;"></div>
<div class="t" style="left:420.42px;top:358.77px;font-size:5.94px;line-height:5.94px;color:#dcdde0;letter-spacing:-0.305px;transform:translateX(-50%);">-50</div>
<div class="r" style="left:417.05px;top:357.90px;width:0.70px;height:1.20px;background:#b8b8b8;"></div>
<div class="t" style="left:436.78px;top:358.77px;font-size:5.94px;line-height:5.94px;color:#dcdde0;letter-spacing:-0.305px;transform:translateX(-50%);">-45</div>
<div class="r" style="left:433.78px;top:357.90px;width:0.70px;height:1.20px;background:#b8b8b8;"></div>
<div class="t" style="left:453.14px;top:358.77px;font-size:5.94px;line-height:5.94px;color:#dcdde0;letter-spacing:-0.305px;transform:translateX(-50%);">-40</div>
<div class="r" style="left:450.50px;top:357.90px;width:0.70px;height:1.20px;background:#b8b8b8;"></div>
<div class="t" style="left:469.50px;top:358.77px;font-size:5.94px;line-height:5.94px;color:#dcdde0;letter-spacing:-0.305px;transform:translateX(-50%);">-35</div>
<div class="r" style="left:467.23px;top:357.90px;width:0.70px;height:1.20px;background:#b8b8b8;"></div>
<div class="t" style="left:485.86px;top:358.77px;font-size:5.94px;line-height:5.94px;color:#dcdde0;letter-spacing:-0.305px;transform:translateX(-50%);">-30</div>
<div class="r" style="left:483.95px;top:357.90px;width:0.70px;height:1.20px;background:#b8b8b8;"></div>
<div class="t" style="left:502.22px;top:358.77px;font-size:5.94px;line-height:5.94px;color:#dcdde0;letter-spacing:-0.305px;transform:translateX(-50%);">-25</div>
<div class="r" style="left:500.68px;top:357.90px;width:0.70px;height:1.20px;background:#b8b8b8;"></div>
<div class="t" style="left:518.58px;top:358.77px;font-size:5.94px;line-height:5.94px;color:#dcdde0;letter-spacing:-0.305px;transform:translateX(-50%);">-20</div>
<div class="r" style="left:517.40px;top:357.90px;width:0.70px;height:1.20px;background:#b8b8b8;"></div>
<div class="t" style="left:534.94px;top:358.77px;font-size:5.94px;line-height:5.94px;color:#dcdde0;letter-spacing:-0.305px;transform:translateX(-50%);">-15</div>
<div class="r" style="left:534.13px;top:357.90px;width:0.70px;height:1.20px;background:#b8b8b8;"></div>
<div class="t" style="left:551.30px;top:358.77px;font-size:5.94px;line-height:5.94px;color:#dcdde0;letter-spacing:-0.305px;transform:translateX(-50%);">-10</div>
<div class="r" style="left:550.85px;top:357.90px;width:0.70px;height:1.20px;background:#b8b8b8;"></div>
<div class="t" style="left:567.66px;top:358.77px;font-size:5.94px;line-height:5.94px;color:#dcdde0;letter-spacing:-0.305px;transform:translateX(-50%);">-5</div>
<div class="r" style="left:567.58px;top:357.90px;width:0.70px;height:1.20px;background:#b8b8b8;"></div>
<div class="t" style="right:316.00px;top:358.77px;font-size:5.94px;line-height:5.94px;color:#dcdde0;letter-spacing:-0.155px;">0</div>
<div class="r" style="left:383.00px;top:370.70px;width:200.00px;height:3.30px;background:#3e62cc;border-radius:1.5px;"></div>
<div class="r" style="left:392.70px;top:369.30px;width:0.70px;height:6.00px;background:rgba(190,185,160,0.3);"></div>
<div class="r" style="left:400.10px;top:369.30px;width:0.70px;height:6.00px;background:rgba(190,185,160,0.3);"></div>
<div class="r" style="left:408.20px;top:369.30px;width:0.70px;height:6.00px;background:rgba(190,185,160,0.3);"></div>
<div class="r" style="left:418.00px;top:369.30px;width:0.70px;height:6.00px;background:rgba(190,185,160,0.3);"></div>
<div class="r" style="left:429.00px;top:369.30px;width:0.70px;height:6.00px;background:rgba(190,185,160,0.3);"></div>
<div class="r" style="left:441.70px;top:369.30px;width:0.70px;height:6.00px;background:rgba(190,185,160,0.3);"></div>
<div class="r" style="left:458.40px;top:369.30px;width:0.70px;height:6.00px;background:rgba(190,185,160,0.3);"></div>
<div class="r" style="left:480.90px;top:369.30px;width:0.70px;height:6.00px;background:rgba(190,185,160,0.3);"></div>
<div class="r" style="left:517.20px;top:369.30px;width:0.70px;height:6.00px;background:rgba(190,185,160,0.3);"></div>
<div class="r" style="left:572.00px;top:369.40px;width:12.00px;height:5.80px;background:#ffffff;border-radius:2.5px;"></div>
<div class="r" style="left:363.90px;top:441.70px;width:14.40px;height:13.90px;background:#363945;border-radius:1px;"></div>
<svg class="r" style="left:366.20px;top:444.20px;" width="10" height="10" viewBox="0 0 10 10"><path d="M6.41 5.02L6.55 5.46L7.37 5.56L7.37 6.44L6.55 6.54L6.41 6.98L6.37 7.08L6.15 7.49L6.67 8.15L6.05 8.77L5.39 8.25L4.98 8.47L4.88 8.51L4.44 8.65L4.34 9.47L3.46 9.47L3.36 8.65L2.92 8.51L2.82 8.47L2.41 8.25L1.75 8.77L1.13 8.15L1.65 7.49L1.43 7.08L1.39 6.98L1.25 6.54L0.43 6.44L0.43 5.56L1.25 5.46L1.39 5.02L1.43 4.92L1.65 4.51L1.13 3.85L1.75 3.23L2.41 3.75L2.82 3.53L2.92 3.49L3.36 3.35L3.46 2.53L4.34 2.53L4.44 3.35L4.88 3.49L4.98 3.53L5.39 3.75L6.05 3.23L6.67 3.85L6.15 4.51L6.37 4.92Z" fill="#e8e9ec"/><circle cx="3.9" cy="6" r="2.6" fill="#e8e9ec"/><circle cx="3.9" cy="6" r="1.0" fill="#32353f"/><path d="M9.29 1.79L9.44 2.15L9.97 2.23L9.97 2.97L9.44 3.05L9.29 3.41L9.25 3.49L9.01 3.79L9.20 4.30L8.57 4.66L8.23 4.24L7.84 4.30L7.76 4.30L7.37 4.24L7.03 4.66L6.40 4.30L6.59 3.79L6.35 3.49L6.31 3.41L6.16 3.05L5.63 2.97L5.63 2.23L6.16 2.15L6.31 1.79L6.35 1.71L6.59 1.41L6.40 0.90L7.03 0.54L7.37 0.96L7.76 0.90L7.84 0.90L8.23 0.96L8.57 0.54L9.20 0.90L9.01 1.41L9.25 1.71Z" fill="#e8e9ec"/><circle cx="7.8" cy="2.6" r="1.7" fill="#e8e9ec"/><circle cx="7.8" cy="2.6" r="0.7" fill="#32353f"/></svg>
<div class="r" style="left:384.70px;top:441.70px;width:14.50px;height:13.90px;background:#363945;border-radius:1px;"></div>
<svg class="r" style="left:386.30px;top:444.00px;" width="10" height="10" viewBox="0 0 10 10"><circle cx="5" cy="1.4" r="1.1" fill="#e8e9ec"/><circle cx="5" cy="5" r="1.1" fill="#e8e9ec"/><circle cx="5" cy="8.6" r="1.1" fill="#e8e9ec"/></svg>
<div class="r" style="left:593.70px;top:294.20px;width:164.60px;height:17.40px;background:#3d404c;border-radius:2px;"></div>
<div class="r" style="left:744.60px;top:294.20px;width:0.80px;height:17.40px;background:#2a2c35;"></div>
<svg class="r" style="left:748.50px;top:301.50px;" width="7" height="4" viewBox="0 0 7 4"><path d="M0.5 0.5H6.5L3.5 3.5Z" fill="#e8e8e8"/></svg>
<div class="t" style="left:600.00px;top:299.32px;font-size:8.48px;line-height:8.48px;color:#e4e5e9;letter-spacing:-0.221px;">Fade</div>
<div class="t" style="left:593.70px;top:318.92px;font-size:8.48px;line-height:8.48px;color:#e4e5e9;letter-spacing:-0.271px;">Duration</div>
<div class="r" style="left:628.00px;top:314.40px;width:130.30px;height:16.90px;background:#3d404c;border-radius:2px;"></div>
<div class="r" style="left:744.60px;top:314.40px;width:0.80px;height:16.90px;background:#2a2c35;"></div>
<svg class="r" style="left:749.50px;top:316.50px;" width="6" height="13" viewBox="0 0 6 13"><path d="M0.7 3.2L3 0.9L5.3 3.2M0.7 9.8L3 12.1L5.3 9.8" fill="none" stroke="#e0e0e0" stroke-width="0.9"/></svg>
<div class="t" style="left:634.00px;top:318.92px;font-size:8.48px;line-height:8.48px;color:#e4e5e9;letter-spacing:-0.221px;">300 ms</div>
<div class="r" style="left:703.00px;top:333.00px;width:14.70px;height:15.70px;background:#363945;border-radius:1px;"></div>
<svg class="r" style="left:705.60px;top:336.30px;" width="9.5" height="9.5" viewBox="0 0 10 10"><path d="M5 0.6V9.4M0.6 5H9.4" stroke="#e8e9ec" stroke-width="1.7"/></svg>
<svg class="r" style="left:726.00px;top:336.30px;" width="9.5" height="9.5" viewBox="0 0 10 10"><rect x="0.8" y="0.5" width="8.4" height="1.5" rx="0.6" fill="#e8e9ec"/><rect x="1.9" y="2.6" width="6.2" height="6.7" rx="1.3" fill="none" stroke="#e8e9ec" stroke-width="1.2"/><path d="M4.2 4.2V7.6M5.8 4.2V7.6" stroke="#e8e9ec" stroke-width="0.7" opacity="0.7"/></svg>
<svg class="r" style="left:745.00px;top:336.00px;" width="10" height="10" viewBox="0 0 10 10"><circle cx="5" cy="1.4" r="1.1" fill="#e8e9ec"/><circle cx="5" cy="5" r="1.1" fill="#e8e9ec"/><circle cx="5" cy="8.6" r="1.1" fill="#e8e9ec"/></svg>
<div class="r" style="left:768.20px;top:294.10px;width:128.00px;height:18.80px;background:#3d404c;border-radius:2px;"></div>
<div class="t" style="left:832.20px;top:299.62px;font-size:8.48px;line-height:8.48px;color:#e8e9ec;letter-spacing:-0.221px;transform:translateX(-50%);">Start Streaming</div>
<div class="r" style="left:768.20px;top:315.00px;width:128.00px;height:18.80px;background:#474b58;border-radius:2px;box-shadow:inset 0 0 0 0.8px #545763;"></div>
<div class="t" style="left:832.20px;top:320.52px;font-size:8.48px;line-height:8.48px;color:#e8e9ec;letter-spacing:-0.221px;transform:translateX(-50%);">Start Recording</div>
<div class="r" style="left:768.20px;top:357.30px;width:128.00px;height:18.80px;background:#3d404c;border-radius:2px;"></div>
<div class="t" style="left:832.20px;top:362.82px;font-size:8.48px;line-height:8.48px;color:#e8e9ec;letter-spacing:-0.221px;transform:translateX(-50%);">Studio Mode</div>
<div class="r" style="left:768.20px;top:378.40px;width:128.00px;height:18.80px;background:#3d404c;border-radius:2px;"></div>
<div class="t" style="left:832.20px;top:383.92px;font-size:8.48px;line-height:8.48px;color:#e8e9ec;letter-spacing:-0.221px;transform:translateX(-50%);">Settings</div>
<div class="r" style="left:768.20px;top:399.60px;width:128.00px;height:18.80px;background:#3d404c;border-radius:2px;"></div>
<div class="t" style="left:832.20px;top:405.12px;font-size:8.48px;line-height:8.48px;color:#e8e9ec;letter-spacing:-0.221px;transform:translateX(-50%);">Exit</div>
<div class="r" style="left:768.20px;top:336.00px;width:105.80px;height:18.80px;background:#3d404c;border-radius:2px;"></div>
<div class="t" style="left:821.10px;top:341.52px;font-size:8.48px;line-height:8.48px;color:#e8e9ec;letter-spacing:-0.221px;transform:translateX(-50%);">Start Virtual Camera</div>
<div class="r" style="left:877.00px;top:336.00px;width:19.00px;height:18.80px;background:#3d404c;border-radius:2px;"></div>
<svg class="r" style="left:881.80px;top:340.80px;" width="9.4" height="9.4" viewBox="0 0 10 10"><path d="M8.35 3.69L8.53 4.28L9.66 4.41L9.66 5.59L8.53 5.72L8.35 6.31L8.30 6.44L8.00 6.99L8.71 7.88L7.88 8.71L6.99 8.00L6.44 8.30L6.31 8.35L5.72 8.53L5.59 9.66L4.41 9.66L4.28 8.53L3.69 8.35L3.56 8.30L3.01 8.00L2.12 8.71L1.29 7.88L2.00 6.99L1.70 6.44L1.65 6.31L1.47 5.72L0.34 5.59L0.34 4.41L1.47 4.28L1.65 3.69L1.70 3.56L2.00 3.01L1.29 2.12L2.12 1.29L3.01 2.00L3.56 1.70L3.69 1.65L4.28 1.47L4.41 0.34L5.59 0.34L5.72 1.47L6.31 1.65L6.44 1.70L6.99 2.00L7.88 1.29L8.71 2.12L8.00 3.01L8.30 3.56Z" fill="#f4f4f4"/><circle cx="5" cy="5" r="3.5" fill="#f4f4f4"/><circle cx="5" cy="5" r="1.45" fill="#3a3d48"/></svg>
<div class="r" style="left:0.00px;top:458.50px;width:897.00px;height:20.00px;background:#252830;"></div>
<div class="r" style="left:653.20px;top:460.00px;width:0.80px;height:17.00px;background:#2c2e37;"></div>
<div class="r" style="left:673.40px;top:460.00px;width:0.80px;height:17.00px;background:#2c2e37;"></div>
<div class="r" style="left:725.00px;top:460.00px;width:0.80px;height:17.00px;background:#2c2e37;"></div>
<div class="r" style="left:825.20px;top:460.00px;width:0.80px;height:17.00px;background:#2c2e37;"></div>
<svg class="r" style="left:658.40px;top:462.50px;" width="9.2" height="9" viewBox="0 0 9.2 9"><path d="M0.5 8.5h1.3v-1.6h-1.3zM2.6 8.5h1.3v-3h-1.3zM4.7 8.5h1.3v-4.6h-1.3zM6.8 8.5h1.3v-6.4h-1.3zM8.9 8.5h0.3v-8h-0.3z" fill="#5e6068"/></svg>
<div class="r" style="left:681.00px;top:467.00px;width:3.70px;height:3.70px;background:#9fa0a5;border-radius:50%;"></div>
<div class="t" style="left:690.90px;top:465.70px;font-size:8.27px;line-height:8.27px;color:#8d8f96;letter-spacing:-0.215px;">00:00:00</div>
<div class="r" style="left:731.60px;top:464.50px;width:8.70px;height:8.70px;background:#4e5058;border-radius:50%;"></div>
<div class="t" style="left:744.00px;top:465.70px;font-size:8.27px;line-height:8.27px;color:#8d8f96;letter-spacing:-0.215px;">00:00:00</div>
<div class="t" style="left:784.50px;top:466.01px;font-size:7.9px;line-height:7.9px;color:#e4e5e9;letter-spacing:-0.206px;">CPU: 1.5%</div>
<div class="t" style="left:830.70px;top:465.97px;font-size:7.95px;line-height:7.95px;color:#e4e5e9;letter-spacing:-0.207px;">30.00 / 30.00 FPS</div>
<div class="r" style="left:0.00px;top:478.50px;width:900.00px;height:27.50px;background:#202020;"></div>
<svg class="r" style="left:11.80px;top:486.80px;" width="13" height="13" viewBox="0 0 13 13"><path d="M0.6 6.4Q0.9 1.2 6.5 1.2Q12.1 1.2 12.4 6.4Q10.9 5.4 9.6 6.4Q8 5.3 6.5 6.4Q5 5.3 3.4 6.4Q2.1 5.4 0.6 6.4Z" fill="#8cc4ee"/><path d="M6.5 6.2V10.9Q6.5 12.2 5.3 12" fill="none" stroke="#7a7a7a" stroke-width="0.9"/></svg>
<div class="r" style="left:18.30px;top:482.20px;width:8.90px;height:8.80px;background:#ef7f8c;border-radius:50%;"></div>
<div class="t" style="left:22.75px;top:483.56px;font-size:6.78px;line-height:6.78px;color:#3a1a1f;letter-spacing:-0.177px;transform:translateX(-50%);">1</div>
<div class="t" style="left:30.00px;top:483.55px;font-size:7.74px;line-height:7.74px;color:#f2f2f2;letter-spacing:-0.151px;">2 mm of rain</div>
<div class="t" style="left:30.00px;top:492.84px;font-size:7.63px;line-height:7.63px;color:#c4c4c4;letter-spacing:-0.169px;">Monday</div>
<svg class="r" style="left:287.10px;top:484.90px;" width="14.4" height="14.4" viewBox="0 0 14.4 14.4"><defs><linearGradient id="wg" x1="0" y1="0" x2="1" y2="1"><stop offset="0" stop-color="#6fd3ff"/><stop offset="1" stop-color="#1a9fe8"/></linearGradient></defs><rect x="0" y="0" width="6.8" height="6.8" fill="url(#wg)"/><rect x="7.6" y="0" width="6.8" height="6.8" fill="url(#wg)"/><rect x="0" y="7.6" width="6.8" height="6.8" fill="url(#wg)"/><rect x="7.6" y="7.6" width="6.8" height="6.8" fill="url(#wg)"/></svg>
<div class="r" style="left:308.40px;top:482.80px;width:128.90px;height:18.10px;background:#2e2e2e;border-radius:9px;box-shadow:inset 0 0 0 0.6px #3a3a3a;"></div>
<svg class="r" style="left:315.60px;top:487.60px;" width="9" height="9" viewBox="0 0 9 9"><circle cx="3.9" cy="3.9" r="3" fill="none" stroke="#e0e0e0" stroke-width="1.1"/><path d="M6.1 6.1L8.4 8.4" stroke="#e0e0e0" stroke-width="1.2"/></svg>
<div class="t" style="left:330.70px;top:488.78px;font-size:8.06px;line-height:8.06px;color:#d0d0d0;letter-spacing:-0.21px;">Search</div>
<svg class="r" style="left:409.00px;top:486.50px;" width="24" height="12" viewBox="0 0 24 12"><path d="M10 1L11.3 4.7L15 6L11.3 7.3L10 11L8.7 7.3L5 6L8.7 4.7Z" fill="#f5c531"/><path d="M18.5 5L19.2 7.3L21.5 8L19.2 8.7L18.5 11L17.8 8.7L15.5 8L17.8 7.3Z" fill="#f5c531"/><circle cx="2" cy="9.5" r="1" fill="#3a8fe0"/><circle cx="22.5" cy="11" r="0.8" fill="#7ab04a"/><circle cx="16" cy="2" r="0.6" fill="#e0603a"/></svg>
<div class="r" style="left:445.00px;top:489.00px;width:10.00px;height:9.00px;background:#6a6a6a;border-radius:1px;"></div>
<div class="r" style="left:448.20px;top:485.00px;width:11.00px;height:9.50px;background:#dcdcdc;border-radius:1px;"></div>
<svg class="r" style="left:470.00px;top:486.00px;" width="15.2" height="12.5" viewBox="0 0 15.2 12.5"><path d="M0.3 1.2Q0.3 0.3 1.2 0.3H5.5L7 1.8H14.1Q14.9 1.8 14.9 2.6V11.4Q14.9 12.2 14.1 12.2H1.1Q0.3 12.2 0.3 11.4Z" fill="#f2c64c"/><path d="M0.3 3.2H14.9" stroke="#d9a92e" stroke-width="0.5"/><rect x="4" y="9.2" width="7.2" height="3" fill="#2f78d8"/></svg>
<svg class="r" style="left:497.50px;top:484.50px;" width="12.5" height="14.5" viewBox="0 0 12.5 14.5"><path d="M2.2 0.8H10.3L12 3.2L11.2 9.8L6.25 14L1.3 9.8L0.5 3.2Z" fill="#f14c21"/><path d="M3.5 3.8L6.25 5.2L9 3.8L8.6 8.2L6.25 10.6L3.9 8.2Z" fill="#fbe9e4"/></svg>
<svg class="r" style="left:521.00px;top:486.00px;" width="14.8" height="13.3" viewBox="0 0 14.8 13.3"><defs><linearGradient id="sg" x1="0" y1="0" x2="0" y2="1"><stop offset="0" stop-color="#14205a"/><stop offset="1" stop-color="#1886c9"/></linearGradient></defs><ellipse cx="7.8" cy="6.65" rx="6.6" ry="6.5" fill="url(#sg)"/><circle cx="9.8" cy="4.4" r="2.4" fill="#e8ecf2"/><circle cx="9.8" cy="4.4" r="1.1" fill="#5a6a90"/><path d="M0.4 6.3L5.5 8.6Q7 9.4 8.2 7.8L9.2 6" stroke="#e8ecf2" stroke-width="2" fill="none"/></svg>
<svg class="r" style="left:548.00px;top:484.50px;" width="14.4" height="14.4" viewBox="0 0 14.4 14.4"><circle cx="7.2" cy="7.2" r="7" fill="#1ed760"/><path d="M3.4 5.3Q7.6 3.9 11.2 5.9M3.9 7.6Q7.3 6.6 10.4 8.2M4.3 9.8Q7 9 9.5 10.2" fill="none" stroke="#0f3a20" stroke-width="1.1" stroke-linecap="round"/></svg>
<div class="r" style="left:573.80px;top:484.30px;width:14.30px;height:15.30px;background:#3561f5;border-radius:2.5px;"></div>
<svg class="r" style="left:575.50px;top:486.00px;" width="11" height="12" viewBox="0 0 11 12"><path d="M3.2 1.6L10 3.4L8.2 10.4L1.4 8.6Z" fill="#ffffff"/><rect x="5" y="5.2" width="1.6" height="1.6" fill="#3561f5"/></svg>
<div class="r" style="left:594.00px;top:480.00px;width:24.70px;height:23.90px;background:#2a2a2a;border-radius:3px;"></div>
<svg class="r" style="left:599.70px;top:484.50px;" width="13.8" height="14" viewBox="0 0 14 14"><circle cx="7" cy="7" r="6.2" fill="#141414" stroke="#d4d4d4" stroke-width="1.3"/><path d="M7 7Q5.2 5.6 6.2 2.2M7 7Q9.1 6.3 11 8.9M7 7Q6.9 9.3 3.6 10.2" fill="none" stroke="#bdbdbd" stroke-width="0.9"/></svg>
<div class="r" style="left:601.80px;top:501.40px;width:9.70px;height:1.90px;background:#4cc2ff;border-radius:1px;"></div>
<div class="r" style="left:476.00px;top:501.70px;width:3.20px;height:1.00px;background:#8a8a8a;border-radius:0.5px;"></div>
<div class="r" style="left:501.40px;top:501.70px;width:3.20px;height:1.00px;background:#8a8a8a;border-radius:0.5px;"></div>
<div class="r" style="left:526.80px;top:501.70px;width:3.20px;height:1.00px;background:#8a8a8a;border-radius:0.5px;"></div>
<div class="r" style="left:553.20px;top:501.70px;width:3.20px;height:1.00px;background:#8a8a8a;border-radius:0.5px;"></div>
<div class="r" style="left:579.20px;top:501.70px;width:3.20px;height:1.00px;background:#8a8a8a;border-radius:0.5px;"></div>
<svg class="r" style="left:743.60px;top:489.30px;" width="7" height="4.6" viewBox="0 0 7 4.6"><path d="M0.6 4L3.5 1L6.4 4" fill="none" stroke="#f0f0f0" stroke-width="1"/></svg>
<svg class="r" style="left:761.50px;top:486.30px;" width="7.5" height="10" viewBox="0 0 7.5 10"><rect x="2.3" y="0.5" width="3" height="5.8" rx="1.5" fill="#5fc6d0"/><path d="M0.9 4.4Q0.9 7.6 3.8 7.6Q6.6 7.6 6.6 4.4M3.8 7.6V9.6" fill="none" stroke="#5fc6d0" stroke-width="0.9"/></svg>
<div class="t" style="left:787.80px;top:484.50px;font-size:7.21px;line-height:7.21px;color:#ededed;letter-spacing:-0.188px;transform:translateX(-50%);">ENG</div>
<div class="t" style="left:788.00px;top:493.70px;font-size:7.21px;line-height:7.21px;color:#ededed;letter-spacing:-0.188px;transform:translateX(-50%);">US</div>
<svg class="r" style="left:805.60px;top:488.00px;" width="8.4" height="7" viewBox="0 0 8.4 7"><path d="M0.5 2.4Q4.2 -0.6 7.9 2.4L4.2 6.6Z" fill="#8e8e8e"/><path d="M2 4.2Q4.2 2.6 6.4 4.2L4.2 6.6Z" fill="#e8e8e8"/></svg>
<svg class="r" style="left:818.80px;top:486.60px;" width="10" height="10" viewBox="0 0 10 10"><path d="M0.6 3.6H2.6L5.2 1.2V8.8L2.6 6.4H0.6Z" fill="none" stroke="#eeeeee" stroke-width="0.9"/><path d="M6.6 3.2Q7.5 5 6.6 6.8M8.1 2Q9.6 5 8.1 8" fill="none" stroke="#eeeeee" stroke-width="0.9"/></svg>
<svg class="r" style="left:833.00px;top:486.50px;" width="10.5" height="9.5" viewBox="0 0 10.5 9.5"><rect x="0.5" y="2.5" width="8.6" height="5.8" rx="1" fill="#eeeeee"/><rect x="9.3" y="4.2" width="1" height="2.4" fill="#eeeeee"/><path d="M2.2 0.4V2.6M4.2 0.4V2.6" stroke="#eeeeee" stroke-width="0.7"/></svg>
<div class="t" style="right:11.30px;top:483.42px;font-size:7.53px;line-height:7.53px;color:#f0f0f0;letter-spacing:-0.196px;">5:36 PM</div>
<div class="t" style="right:11.50px;top:492.92px;font-size:7.53px;line-height:7.53px;color:#f0f0f0;letter-spacing:-0.196px;">2025-11-21</div>
<svg class="r" style="left:681.50px;top:435.00px;" width="7.5" height="10.5" viewBox="0 0 7.5 10.5"><path d="M0.7 0.7V8.6L2.6 6.9L4 9.9L5.4 9.3L4.1 6.4H6.7Z" fill="#ffffff" stroke="#000000" stroke-width="0.8" stroke-linejoin="round"/></svg></div>
<div class="r" style="left:0.00px;top:245.50px;width:897.30px;height:28.50px;background:#262932;"></div>
<div class="t" style="left:6.00px;top:256.34px;font-size:8.69px;line-height:8.69px;color:#e4e5e9;letter-spacing:-0.376px;">No source selected</div>
<div class="r" style="left:125.5px;top:251.5px;width:62.7px;height:18px;border:1px solid #2e3039;box-sizing:border-box;border-radius:2px"></div>
<div class="r" style="left:192px;top:251.5px;width:48.7px;height:18px;border:1px solid #2e3039;box-sizing:border-box;border-radius:2px"></div>
<svg class="r" style="left:132.80px;top:256.30px;" width="9" height="9" viewBox="0 0 10 10"><path d="M8.35 3.69L8.53 4.28L9.66 4.41L9.66 5.59L8.53 5.72L8.35 6.31L8.30 6.44L8.00 6.99L8.71 7.88L7.88 8.71L6.99 8.00L6.44 8.30L6.31 8.35L5.72 8.53L5.59 9.66L4.41 9.66L4.28 8.53L3.69 8.35L3.56 8.30L3.01 8.00L2.12 8.71L1.29 7.88L2.00 6.99L1.70 6.44L1.65 6.31L1.47 5.72L0.34 5.59L0.34 4.41L1.47 4.28L1.65 3.69L1.70 3.56L2.00 3.01L1.29 2.12L2.12 1.29L3.01 2.00L3.56 1.70L3.69 1.65L4.28 1.47L4.41 0.34L5.59 0.34L5.72 1.47L6.31 1.65L6.44 1.70L6.99 2.00L7.88 1.29L8.71 2.12L8.00 3.01L8.30 3.56Z" fill="#c9cacd"/><circle cx="5" cy="5" r="3.5" fill="#c9cacd"/><circle cx="5" cy="5" r="1.45" fill="#252830"/></svg>
<svg class="r" style="left:199.80px;top:256.30px;" width="9" height="9" viewBox="0 0 10 10"><rect x="1.2" y="1.2" width="7.6" height="7.6" rx="1.6" fill="none" stroke="#c9cacd" stroke-width="1.1"/><path d="M2.3 1.5H4.6V8.5H2.3Q1.5 8.5 1.5 7.4V2.6Q1.5 1.5 2.3 1.5Z" fill="#c9cacd"/><rect x="4.6" y="1.5" width="1.3" height="7" fill="#c9cacd" opacity="0.55"/><path d="M7.3 3V7" stroke="#c9cacd" stroke-width="0.6" opacity="0.6"/></svg>
<div class="t" style="left:142.40px;top:256.54px;font-size:8.69px;line-height:8.69px;color:#8a8c94;letter-spacing:-0.376px;">Properties</div>
<div class="t" style="left:210.30px;top:256.54px;font-size:8.69px;line-height:8.69px;color:#8a8c94;letter-spacing:-0.376px;">Filters</div>
<div class="r" style="left:1.50px;top:275.20px;width:172.20px;height:182.30px;background:#272a33;border-radius:2px;box-shadow:inset 0 0 0 1px #2e313a;"></div>
<div class="r" style="left:1.50px;top:275.20px;width:172.20px;height:15.00px;background:#3d404c;border-radius:2px 2px 0 0;"></div>
<div class="r" style="left:1.50px;top:290.20px;width:172.20px;height:0.80px;background:#22242b;"></div>
<div class="t" style="left:5.30px;top:278.72px;font-size:8.48px;line-height:8.48px;color:#f4f4f6;font-weight:700;letter-spacing:-0.321px;">Scenes</div>
<svg class="r" style="left:161.90px;top:278.40px;" width="10" height="9.5" viewBox="0 0 10 9.5"><rect x="0.6" y="0.6" width="6.3" height="5.3" rx="0.8" fill="none" stroke="#e0e1e4" stroke-width="1"/><rect x="0.6" y="0.6" width="6.3" height="1.6" fill="#e0e1e4"/><rect x="3.4" y="3.6" width="6" height="5.3" rx="0.8" fill="#2a2d37" stroke="#e0e1e4" stroke-width="1"/><rect x="3.4" y="3.6" width="6" height="1.6" fill="#e0e1e4"/></svg>
<div class="r" style="left:176.00px;top:275.20px;width:182.80px;height:182.30px;background:#272a33;border-radius:2px;box-shadow:inset 0 0 0 1px #2e313a;"></div>
<div class="r" style="left:176.00px;top:275.20px;width:182.80px;height:15.00px;background:#3d404c;border-radius:2px 2px 0 0;"></div>
<div class="r" style="left:176.00px;top:290.20px;width:182.80px;height:0.80px;background:#22242b;"></div>
<div class="t" style="left:179.80px;top:278.72px;font-size:8.48px;line-height:8.48px;color:#f4f4f6;font-weight:700;letter-spacing:-0.321px;">Sources</div>
<svg class="r" style="left:347.00px;top:278.40px;" width="10" height="9.5" viewBox="0 0 10 9.5"><rect x="0.6" y="0.6" width="6.3" height="5.3" rx="0.8" fill="none" stroke="#e0e1e4" stroke-width="1"/><rect x="0.6" y="0.6" width="6.3" height="1.6" fill="#e0e1e4"/><rect x="3.4" y="3.6" width="6" height="5.3" rx="0.8" fill="#2a2d37" stroke="#e0e1e4" stroke-width="1"/><rect x="3.4" y="3.6" width="6" height="1.6" fill="#e0e1e4"/></svg>
<div class="r" style="left:361.00px;top:275.20px;width:227.50px;height:182.30px;background:#272a33;border-radius:2px;box-shadow:inset 0 0 0 1px #2e313a;"></div>
<div class="r" style="left:361.00px;top:275.20px;width:227.50px;height:15.00px;background:#3d404c;border-radius:2px 2px 0 0;"></div>
<div class="r" style="left:361.00px;top:290.20px;width:227.50px;height:0.80px;background:#22242b;"></div>
<div class="t" style="left:364.80px;top:278.72px;font-size:8.48px;line-height:8.48px;color:#f4f4f6;font-weight:700;letter-spacing:-0.321px;">Audio Mixer</div>
<svg class="r" style="left:576.70px;top:278.40px;" width="10" height="9.5" viewBox="0 0 10 9.5"><rect x="0.6" y="0.6" width="6.3" height="5.3" rx="0.8" fill="none" stroke="#e0e1e4" stroke-width="1"/><rect x="0.6" y="0.6" width="6.3" height="1.6" fill="#e0e1e4"/><rect x="3.4" y="3.6" width="6" height="5.3" rx="0.8" fill="#2a2d37" stroke="#e0e1e4" stroke-width="1"/><rect x="3.4" y="3.6" width="6" height="1.6" fill="#e0e1e4"/></svg>
<div class="r" style="left:591.00px;top:275.20px;width:170.50px;height:182.30px;background:#272a33;border-radius:2px;box-shadow:inset 0 0 0 1px #2e313a;"></div>
<div class="r" style="left:591.00px;top:275.20px;width:170.50px;height:15.00px;background:#3d404c;border-radius:2px 2px 0 0;"></div>
<div class="r" style="left:591.00px;top:290.20px;width:170.50px;height:0.80px;background:#22242b;"></div>
<div class="t" style="left:594.80px;top:278.72px;font-size:8.48px;line-height:8.48px;color:#f4f4f6;font-weight:700;letter-spacing:-0.321px;">Scene Transitions</div>
<svg class="r" style="left:749.70px;top:278.40px;" width="10" height="9.5" viewBox="0 0 10 9.5"><rect x="0.6" y="0.6" width="6.3" height="5.3" rx="0.8" fill="none" stroke="#e0e1e4" stroke-width="1"/><rect x="0.6" y="0.6" width="6.3" height="1.6" fill="#e0e1e4"/><rect x="3.4" y="3.6" width="6" height="5.3" rx="0.8" fill="#2a2d37" stroke="#e0e1e4" stroke-width="1"/><rect x="3.4" y="3.6" width="6" height="1.6" fill="#e0e1e4"/></svg>
<div class="r" style="left:764.00px;top:275.20px;width:134.60px;height:182.30px;background:#272a33;border-radius:2px;box-shadow:inset 0 0 0 1px #2e313a;"></div>
<div class="r" style="left:764.00px;top:275.20px;width:134.60px;height:15.00px;background:#3d404c;border-radius:2px 2px 0 0;"></div>
<div class="r" style="left:764.00px;top:290.20px;width:134.60px;height:0.80px;background:#22242b;"></div>
<div class="t" style="left:767.80px;top:278.72px;font-size:8.48px;line-height:8.48px;color:#f4f4f6;font-weight:700;letter-spacing:-0.321px;">Controls</div>
<svg class="r" style="left:886.80px;top:278.40px;" width="10" height="9.5" viewBox="0 0 10 9.5"><rect x="0.6" y="0.6" width="6.3" height="5.3" rx="0.8" fill="none" stroke="#e0e1e4" stroke-width="1"/><rect x="0.6" y="0.6" width="6.3" height="1.6" fill="#e0e1e4"/><rect x="3.4" y="3.6" width="6" height="5.3" rx="0.8" fill="#2a2d37" stroke="#e0e1e4" stroke-width="1"/><rect x="3.4" y="3.6" width="6" height="1.6" fill="#e0e1e4"/></svg>
<div class="r" style="left:2.00px;top:291.70px;width:170.00px;height:17.30px;background:#2a4ac0;border-radius:1px;"></div>
<div class="t" style="left:6.30px;top:296.82px;font-size:8.48px;line-height:8.48px;color:#ffffff;letter-spacing:-0.221px;">Scene</div>
<div class="r" style="left:2.90px;top:442.00px;width:14.40px;height:13.60px;background:#363945;border-radius:1px;"></div>
<svg class="r" style="left:5.60px;top:444.30px;" width="9" height="9" viewBox="0 0 10 10"><path d="M5 0.6V9.4M0.6 5H9.4" stroke="#e8e9ec" stroke-width="1.7"/></svg>
<div class="r" style="left:20.00px;top:442.00px;width:14.40px;height:13.60px;background:#363945;border-radius:1px;"></div>
<svg class="r" style="left:22.70px;top:444.30px;" width="9" height="9" viewBox="0 0 10 10"><rect x="0.8" y="0.5" width="8.4" height="1.5" rx="0.6" fill="#e8e9ec"/><rect x="1.9" y="2.6" width="6.2" height="6.7" rx="1.3" fill="none" stroke="#e8e9ec" stroke-width="1.2"/><path d="M4.2 4.2V7.6M5.8 4.2V7.6" stroke="#e8e9ec" stroke-width="0.7" opacity="0.7"/></svg>
<div class="r" style="left:40.00px;top:442.00px;width:14.70px;height:13.60px;background:#363945;border-radius:1px;"></div>
<svg class="r" style="left:42.85px;top:444.30px;" width="9" height="9" viewBox="0 0 10 10"><rect x="1.2" y="1.2" width="7.6" height="7.6" rx="1.6" fill="none" stroke="#e8e9ec" stroke-width="1.1"/><path d="M2.3 1.5H4.6V8.5H2.3Q1.5 8.5 1.5 7.4V2.6Q1.5 1.5 2.3 1.5Z" fill="#e8e9ec"/><rect x="4.6" y="1.5" width="1.3" height="7" fill="#e8e9ec" opacity="0.55"/><path d="M7.3 3V7" stroke="#e8e9ec" stroke-width="0.6" opacity="0.6"/></svg>
<div class="r" style="left:61.00px;top:442.00px;width:14.70px;height:13.60px;background:#363945;border-radius:1px;"></div>
<svg class="r" style="left:63.85px;top:444.30px;" width="9" height="9" viewBox="0 0 10 10"><path d="M0.8 7L5 2.8L9.2 7" fill="none" stroke="#e8e9ec" stroke-width="1.35"/></svg>
<div class="r" style="left:78.00px;top:442.00px;width:14.30px;height:13.60px;background:#363945;border-radius:1px;"></div>
<svg class="r" style="left:80.65px;top:444.30px;" width="9" height="9" viewBox="0 0 10 10"><path d="M0.8 3L5 7.2L9.2 3" fill="none" stroke="#e8e9ec" stroke-width="1.35"/></svg>
<svg class="r" style="left:182.70px;top:297.00px;" width="9.3" height="9.3" viewBox="0 0 10 10"><rect x="0.8" y="0.8" width="8.4" height="6.6" rx="1.5" fill="none" stroke="#e8e9ec" stroke-width="1.4"/><path d="M3.6 9H6.4" stroke="#e8e9ec" stroke-width="1.1"/></svg>
<div class="t" style="left:193.80px;top:297.02px;font-size:8.48px;line-height:8.48px;color:#e8e9ec;letter-spacing:-0.271px;">Display Capture</div>
<svg class="r" style="left:182.70px;top:317.60px;" width="9.3" height="4.6" viewBox="0 0 10 5"><path d="M1.5 0.6H8.5Q9.7 0.6 9.7 2.4Q9.7 4.4 8.5 4.4Q7.5 4.4 6.8 3.4H3.2Q2.5 4.4 1.5 4.4Q0.3 4.4 0.3 2.4Q0.3 0.6 1.5 0.6Z" fill="#e8e9ec"/><circle cx="2.3" cy="2.3" r="0.6" fill="#1f212a"/><circle cx="7.7" cy="2.3" r="0.6" fill="#1f212a"/></svg>
<div class="t" style="left:193.80px;top:315.72px;font-size:8.48px;line-height:8.48px;color:#e8e9ec;letter-spacing:-0.221px;">Roblox</div>
<svg class="r" style="left:327.50px;top:298.30px;" width="9.7" height="6.9" viewBox="0 0 10 7"><ellipse cx="5" cy="3.5" rx="4.2" ry="3" fill="none" stroke="#f4f4f4" stroke-width="1.35"/><circle cx="5" cy="3.5" r="1.4" fill="#f4f4f4"/></svg>
<svg class="r" style="left:327.50px;top:316.90px;" width="9.7" height="6.9" viewBox="0 0 10 7"><ellipse cx="5" cy="3.5" rx="4.2" ry="3" fill="none" stroke="#f4f4f4" stroke-width="1.35"/><circle cx="5" cy="3.5" r="1.4" fill="#f4f4f4"/></svg>
<svg class="r" style="left:343.60px;top:296.70px;" width="7.8" height="9.2" viewBox="0 0 8.2 9.6"><path d="M2 4.6V2.8Q2 0.7 4 0.7Q6 0.7 6 2.8V3.4" fill="none" stroke="#9d9ea2" stroke-width="1.2"/><rect x="0.6" y="4.4" width="7" height="4.8" rx="0.5" fill="#9d9ea2"/></svg>
<svg class="r" style="left:343.60px;top:315.30px;" width="7.8" height="9.2" viewBox="0 0 8.2 9.6"><path d="M2 4.6V2.8Q2 0.7 4 0.7Q6 0.7 6 2.8V3.4" fill="none" stroke="#9d9ea2" stroke-width="1.2"/><rect x="0.6" y="4.4" width="7" height="4.8" rx="0.5" fill="#9d9ea2"/></svg>
<div class="r" style="left:179.30px;top:442.00px;width:14.70px;height:13.60px;background:#363945;border-radius:1px;"></div>
<svg class="r" style="left:182.10px;top:444.30px;" width="9" height="9" viewBox="0 0 10 10"><path d="M5 0.6V9.4M0.6 5H9.4" stroke="#e8e9ec" stroke-width="1.7"/></svg>
<svg class="r" style="left:199.40px;top:444.30px;" width="9" height="9" viewBox="0 0 10 10"><rect x="0.8" y="0.5" width="8.4" height="1.5" rx="0.6" fill="#e8e9ec"/><rect x="1.9" y="2.6" width="6.2" height="6.7" rx="1.3" fill="none" stroke="#e8e9ec" stroke-width="1.2"/><path d="M4.2 4.2V7.6M5.8 4.2V7.6" stroke="#e8e9ec" stroke-width="0.7" opacity="0.7"/></svg>
<svg class="r" style="left:219.50px;top:444.30px;" width="9" height="9" viewBox="0 0 10 10"><path d="M8.35 3.69L8.53 4.28L9.66 4.41L9.66 5.59L8.53 5.72L8.35 6.31L8.30 6.44L8.00 6.99L8.71 7.88L7.88 8.71L6.99 8.00L6.44 8.30L6.31 8.35L5.72 8.53L5.59 9.66L4.41 9.66L4.28 8.53L3.69 8.35L3.56 8.30L3.01 8.00L2.12 8.71L1.29 7.88L2.00 6.99L1.70 6.44L1.65 6.31L1.47 5.72L0.34 5.59L0.34 4.41L1.47 4.28L1.65 3.69L1.70 3.56L2.00 3.01L1.29 2.12L2.12 1.29L3.01 2.00L3.56 1.70L3.69 1.65L4.28 1.47L4.41 0.34L5.59 0.34L5.72 1.47L6.31 1.65L6.44 1.70L6.99 2.00L7.88 1.29L8.71 2.12L8.00 3.01L8.30 3.56Z" fill="#e8e9ec"/><circle cx="5" cy="5" r="3.5" fill="#e8e9ec"/><circle cx="5" cy="5" r="1.45" fill="#272a33"/></svg>
<svg class="r" style="left:239.70px;top:444.30px;" width="9" height="9" viewBox="0 0 10 10"><path d="M0.8 7L5 2.8L9.2 7" fill="none" stroke="#e8e9ec" stroke-width="1.35"/></svg>
<svg class="r" style="left:257.20px;top:444.30px;" width="9" height="9" viewBox="0 0 10 10"><path d="M0.8 3L5 7.2L9.2 3" fill="none" stroke="#e8e9ec" stroke-width="1.35"/></svg>
<div class="r" style="left:361.50px;top:291.00px;width:227.00px;height:149.00px;background:#1f2026;box-shadow:inset 0 0 0 1px #2c2f38;"></div>
<div class="r" style="left:362.30px;top:291.00px;width:225.40px;height:42.60px;background:#272a33;"></div>
<div class="r" style="left:362.30px;top:334.40px;width:225.40px;height:45.10px;background:#272a33;"></div>
<div class="t" style="left:365.60px;top:292.82px;font-size:8.48px;line-height:8.48px;color:#e4e5e9;letter-spacing:-0.201px;">Desktop Audio</div>
<div class="t" style="right:316.50px;top:292.82px;font-size:8.48px;line-height:8.48px;color:#8d8f96;letter-spacing:-0.221px;">0.0 dB</div>
<div class="r" style="left:366.70px;top:303.30px;width:13.30px;height:13.40px;background:#363945;border-radius:1px;"></div>
<svg class="r" style="left:367.80px;top:305.00px;" width="10" height="10" viewBox="0 0 10 10"><circle cx="5" cy="1.4" r="1.1" fill="#e8e9ec"/><circle cx="5" cy="5" r="1.1" fill="#e8e9ec"/><circle cx="5" cy="8.6" r="1.1" fill="#e8e9ec"/></svg>
<div class="r" style="left:366.00px;top:319.30px;width:14.00px;height:12.70px;background:#363945;border-radius:1px;"></div>
<svg class="r" style="left:367.50px;top:320.60px;" width="11" height="11" viewBox="0 0 10 10"><path d="M0.5 3.2H2.5L5.3 0.9V9.1L2.5 6.8H0.5Z" fill="#f2f2f2"/><path d="M6.6 3.1Q7.8 5 6.6 6.9M8.3 1.5Q10.2 5 8.3 8.5" fill="none" stroke="#f2f2f2" stroke-width="1.2"/></svg>
<div class="r" style="left:383.00px;top:303.60px;width:87.70px;height:4.35px;background:#3cd43c;"></div>
<div class="r" style="left:470.70px;top:303.60px;width:47.60px;height:4.35px;background:#1e7a1e;"></div>
<div class="r" style="left:518.30px;top:303.60px;width:36.60px;height:4.35px;background:#9a7612;"></div>
<div class="r" style="left:554.90px;top:303.60px;width:29.10px;height:4.35px;background:#a51f27;"></div>
<div class="r" style="left:523.60px;top:303.60px;width:2.00px;height:4.35px;background:#f0b020;"></div>
<div class="r" style="left:383.00px;top:308.85px;width:86.60px;height:3.75px;background:#3cd43c;"></div>
<div class="r" style="left:469.60px;top:308.85px;width:48.70px;height:3.75px;background:#1e7a1e;"></div>
<div class="r" style="left:518.30px;top:308.85px;width:36.60px;height:3.75px;background:#9a7612;"></div>
<div class="r" style="left:554.90px;top:308.85px;width:29.10px;height:3.75px;background:#a51f27;"></div>
<div class="r" style="left:552.60px;top:308.85px;width:1.80px;height:3.75px;background:#f0b020;"></div>
<div class="r" style="left:385.00px;top:303.60px;width:1.00px;height:9.00px;background:#0d2a0d;"></div>
<div class="t" style="left:387.70px;top:313.77px;font-size:5.94px;line-height:5.94px;color:#dcdde0;letter-spacing:-0.305px;transform:translateX(-50%);">-60</div>
<div class="t" style="left:404.06px;top:313.77px;font-size:5.94px;line-height:5.94px;color:#dcdde0;letter-spacing:-0.305px;transform:translateX(-50%);">-55</div>
<div class="r" style="left:400.32px;top:312.90px;width:0.70px;height:1.20px;background:#b8b8b8;"></div>
<div class="t" style="left:420.42px;top:313.77px;font-size:5.94px;line-height:5.94px;color:#dcdde0;letter-spacing:-0.305px;transform:translateX(-50%);">-50</div>
<div class="r" style="left:417.05px;top:312.90px;width:0.70px;height:1.20px;background:#b8b8b8;"></div>
<div class="t" style="left:436.78px;top:313.77px;font-size:5.94px;line-height:5.94px;color:#dcdde0;letter-spacing:-0.305px;transform:translateX(-50%);">-45</div>
<div class="r" style="left:433.78px;top:312.90px;width:0.70px;height:1.20px;background:#b8b8b8;"></div>
<div class="t" style="left:453.14px;top:313.77px;font-size:5.94px;line-height:5.94px;color:#dcdde0;letter-spacing:-0.305px;transform:translateX(-50%);">-40</div>
<div class="r" style="left:450.50px;top:312.90px;width:0.70px;height:1.20px;background:#b8b8b8;"></div>
<div class="t" style="left:469.50px;top:313.77px;font-size:5.94px;line-height:5.94px;color:#dcdde0;letter-spacing:-0.305px;transform:translateX(-50%);">-35</div>
<div class="r" style="left:467.23px;top:312.90px;width:0.70px;height:1.20px;background:#b8b8b8;"></div>
<div class="t" style="left:485.86px;top:313.77px;font-size:5.94px;line-height:5.94px;color:#dcdde0;letter-spacing:-0.305px;transform:translateX(-50%);">-30</div>
<div class="r" style="left:483.95px;top:312.90px;width:0.70px;height:1.20px;background:#b8b8b8;"></div>
<div class="t" style="left:502.22px;top:313.77px;font-size:5.94px;line-height:5.94px;color:#dcdde0;letter-spacing:-0.305px;transform:translateX(-50%);">-25</div>
<div class="r" style="left:500.68px;top:312.90px;width:0.70px;height:1.20px;background:#b8b8b8;"></div>
<div class="t" style="left:518.58px;top:313.77px;font-size:5.94px;line-height:5.94px;color:#dcdde0;letter-spacing:-0.305px;transform:translateX(-50%);">-20</div>
<div class="r" style="left:517.40px;top:312.90px;width:0.70px;height:1.20px;background:#b8b8b8;"></div>
<div class="t" style="left:534.94px;top:313.77px;font-size:5.94px;line-height:5.94px;color:#dcdde0;letter-spacing:-0.305px;transform:translateX(-50%);">-15</div>
<div class="r" style="left:534.13px;top:312.90px;width:0.70px;height:1.20px;background:#b8b8b8;"></div>
<div class="t" style="left:551.30px;top:313.77px;font-size:5.94px;line-height:5.94px;color:#dcdde0;letter-spacing:-0.305px;transform:translateX(-50%);">-10</div>
<div class="r" style="left:550.85px;top:312.90px;width:0.70px;height:1.20px;background:#b8b8b8;"></div>
<div class="t" style="left:567.66px;top:313.77px;font-size:5.94px;line-height:5.94px;color:#dcdde0;letter-spacing:-0.305px;transform:translateX(-50%);">-5</div>
<div class="r" style="left:567.58px;top:312.90px;width:0.70px;height:1.20px;background:#b8b8b8;"></div>
<div class="t" style="right:316.00px;top:313.77px;font-size:5.94px;line-height:5.94px;color:#dcdde0;letter-spacing:-0.155px;">0</div>
<div class="r" style="left:383.00px;top:325.90px;width:200.00px;height:3.30px;background:#3e62cc;border-radius:1.5px;"></div>
<div class="r" style="left:392.70px;top:324.50px;width:0.70px;height:6.00px;background:rgba(190,185,160,0.3);"></div>
<div class="r" style="left:400.10px;top:324.50px;width:0.70px;height:6.00px;background:rgba(190,185,160,0.3);"></div>
<div class="r" style="left:408.20px;top:324.50px;width:0.70px;height:6.00px;background:rgba(190,185,160,0.3);"></div>
<div class="r" style="left:418.00px;top:324.50px;width:0.70px;height:6.00px;background:rgba(190,185,160,0.3);"></div>
<div class="r" style="left:429.00px;top:324.50px;width:0.70px;height:6.00px;background:rgba(190,185,160,0.3);"></div>
<div class="r" style="left:441.70px;top:324.50px;width:0.70px;height:6.00px;background:rgba(190,185,160,0.3);"></div>
<div class="r" style="left:458.40px;top:324.50px;width:0.70px;height:6.00px;background:rgba(190,185,160,0.3);"></div>
<div class="r" style="left:480.90px;top:324.50px;width:0.70px;height:6.00px;background:rgba(190,185,160,0.3);"></div>
<div class="r" style="left:517.20px;top:324.50px;width:0.70px;height:6.00px;background:rgba(190,185,160,0.3);"></div>
<div class="r" style="left:572.00px;top:324.60px;width:12.00px;height:5.80px;background:#ffffff;border-radius:2.5px;"></div>
<div class="t" style="left:365.60px;top:338.12px;font-size:8.48px;line-height:8.48px;color:#e4e5e9;letter-spacing:-0.221px;">Mic/Aux</div>
<div class="t" style="right:316.50px;top:338.12px;font-size:8.48px;line-height:8.48px;color:#8d8f96;letter-spacing:-0.221px;">0.0 dB</div>
<div class="r" style="left:366.70px;top:348.30px;width:13.30px;height:13.40px;background:#363945;border-radius:1px;"></div>
<svg class="r" style="left:367.80px;top:350.50px;" width="10" height="10" viewBox="0 0 10 10"><circle cx="5" cy="1.4" r="1.1" fill="#e8e9ec"/><circle cx="5" cy="5" r="1.1" fill="#e8e9ec"/><circle cx="5" cy="8.6" r="1.1" fill="#e8e9ec"/></svg>
<div class="r" style="left:366.00px;top:364.30px;width:14.00px;height:12.70px;background:#363945;border-radius:1px;"></div>
<svg class="r" style="left:367.50px;top:365.60px;" width="10" height="10" viewBox="0 0 10 10"><path d="M0.6 3.4H2.4L5.2 1V9L2.4 6.6H0.6Z" fill="#e0283c"/><path d="M6.4 3.9L9 6.3M9 3.9L6.4 6.3" stroke="#e0283c" stroke-width="1.4"/></svg>
<div class="r" style="left:383.00px;top:348.30px;width:33.00px;height:4.65px;background:#b9b9b9;"></div>
<div class="r" style="left:416.00px;top:348.30px;width:1.60px;height:4.65px;background:#272a33;"></div>
<div class="r" style="left:417.60px;top:348.30px;width:60.40px;height:4.65px;background:#b9b9b9;"></div>
<div class="r" style="left:478.00px;top:348.30px;width:76.70px;height:4.65px;background:#6f6f6f;"></div>
<div class="r" style="left:554.70px;top:348.30px;width:29.30px;height:4.65px;background:#4b4b4b;"></div>
<div class="r" style="left:514.00px;top:348.30px;width:1.80px;height:4.65px;background:#d8d8d8;"></div>
<div class="r" style="left:383.00px;top:353.85px;width:31.70px;height:3.75px;background:#b9b9b9;"></div>
<div class="r" style="left:414.70px;top:353.85px;width:1.60px;height:3.75px;background:#272a33;"></div>
<div class="r" style="left:416.30px;top:353.85px;width:75.70px;height:3.75px;background:#b9b9b9;"></div>
<div class="r" style="left:492.00px;top:353.85px;width:62.70px;height:3.75px;background:#6f6f6f;"></div>
<div class="r" style="left:554.70px;top:353.85px;width:29.30px;height:3.75px;background:#4b4b4b;"></div>
<div class="r" style="left:536.80px;top:353.85px;width:1.80px;height:3.75px;background:#e8e8e8;"></div>
<div class="r" style="left:383.30px;top:348.30px;width:2.00px;height:9.30px;background:#2fc22f;"></div>
<div class="t" style="left:387.70px;top:358.77px;font-size:5.94px;line-height:5.94px;color:#dcdde0;letter-spacing:-0.305px;transform:translateX(-50%);">-60</div>
<div class="t" style="left:404.06px;top:358.77px;font-size:5.94px;line-height:5.94px;color:#dcdde0;letter-spacing:-0.305px;transform:translateX(-50%);">-55</div>
<div class="r" style="left:400.32px;top:357.90px;width:0.70px;height:1.20px;background:#b8b8b8;"></div>
<div class="t" style="left:420.42px;top:358.77px;font-size:5.94px;line-height:5.94px;color:#dcdde0;letter-spacing:-0.305px;transform:translateX(-50%);">-50</div>
<div class="r" style="left:417.05px;top:357.90px;width:0.70px;height:1.20px;background:#b8b8b8;"></div>
<div class="t" style="left:436.78px;top:358.77px;font-size:5.94px;line-height:5.94px;color:#dcdde0;letter-spacing:-0.305px;transform:translateX(-50%);">-45</div>
<div class="r" style="left:433.78px;top:357.90px;width:0.70px;height:1.20px;background:#b8b8b8;"></div>
<div class="t" style="left:453.14px;top:358.77px;font-size:5.94px;line-height:5.94px;color:#dcdde0;letter-spacing:-0.305px;transform:translateX(-50%);">-40</div>
<div class="r" style="left:450.50px;top:357.90px;width:0.70px;height:1.20px;background:#b8b8b8;"></div>
<div class="t" style="left:469.50px;top:358.77px;font-size:5.94px;line-height:5.94px;color:#dcdde0;letter-spacing:-0.305px;transform:translateX(-50%);">-35</div>
<div class="r" style="left:467.23px;top:357.90px;width:0.70px;height:1.20px;background:#b8b8b8;"></div>
<div class="t" style="left:485.86px;top:358.77px;font-size:5.94px;line-height:5.94px;color:#dcdde0;letter-spacing:-0.305px;transform:translateX(-50%);">-30</div>
<div class="r" style="left:483.95px;top:357.90px;width:0.70px;height:1.20px;background:#b8b8b8;"></div>
<div class="t" style="left:502.22px;top:358.77px;font-size:5.94px;line-height:5.94px;color:#dcdde0;letter-spacing:-0.305px;transform:translateX(-50%);">-25</div>
<div class="r" style="left:500.68px;top:357.90px;width:0.70px;height:1.20px;background:#b8b8b8;"></div>
<div class="t" style="left:518.58px;top:358.77px;font-size:5.94px;line-height:5.94px;color:#dcdde0;letter-spacing:-0.305px;transform:translateX(-50%);">-20</div>
<div class="r" style="left:517.40px;top:357.90px;width:0.70px;height:1.20px;background:#b8b8b8;"></div>
<div class="t" style="left:534.94px;top:358.77px;font-size:5.94px;line-height:5.94px;color:#dcdde0;letter-spacing:-0.305px;transform:translateX(-50%);">-15</div>
<div class="r" style="left:534.13px;top:357.90px;width:0.70px;height:1.20px;background:#b8b8b8;"></div>
<div class="t" style="left:551.30px;top:358.77px;font-size:5.94px;line-height:5.94px;color:#dcdde0;letter-spacing:-0.305px;transform:translateX(-50%);">-10</div>
<div class="r" style="left:550.85px;top:357.90px;width:0.70px;height:1.20px;background:#b8b8b8;"></div>
<div class="t" style="left:567.66px;top:358.77px;font-size:5.94px;line-height:5.94px;color:#dcdde0;letter-spacing:-0.305px;transform:translateX(-50%);">-5</div>
<div class="r" style="left:567.58px;top:357.90px;width:0.70px;height:1.20px;background:#b8b8b8;"></div>
<div class="t" style="right:316.00px;top:358.77px;font-size:5.94px;line-height:5.94px;color:#dcdde0;letter-spacing:-0.155px;">0</div>
<div class="r" style="left:383.00px;top:370.70px;width:200.00px;height:3.30px;background:#3e62cc;border-radius:1.5px;"></div>
<div class="r" style="left:392.70px;top:369.30px;width:0.70px;height:6.00px;background:rgba(190,185,160,0.3);"></div>
<div class="r" style="left:400.10px;top:369.30px;width:0.70px;height:6.00px;background:rgba(190,185,160,0.3);"></div>
<div class="r" style="left:408.20px;top:369.30px;width:0.70px;height:6.00px;background:rgba(190,185,160,0.3);"></div>
<div class="r" style="left:418.00px;top:369.30px;width:0.70px;height:6.00px;background:rgba(190,185,160,0.3);"></div>
<div class="r" style="left:429.00px;top:369.30px;width:0.70px;height:6.00px;background:rgba(190,185,160,0.3);"></div>
<div class="r" style="left:441.70px;top:369.30px;width:0.70px;height:6.00px;background:rgba(190,185,160,0.3);"></div>
<div class="r" style="left:458.40px;top:369.30px;width:0.70px;height:6.00px;background:rgba(190,185,160,0.3);"></div>
<div class="r" style="left:480.90px;top:369.30px;width:0.70px;height:6.00px;background:rgba(190,185,160,0.3);"></div>
<div class="r" style="left:517.20px;top:369.30px;width:0.70px;height:6.00px;background:rgba(190,185,160,0.3);"></div>
<div class="r" style="left:572.00px;top:369.40px;width:12.00px;height:5.80px;background:#ffffff;border-radius:2.5px;"></div>
<div class="r" style="left:363.90px;top:441.70px;width:14.40px;height:13.90px;background:#363945;border-radius:1px;"></div>
<svg class="r" style="left:366.20px;top:444.20px;" width="10" height="10" viewBox="0 0 10 10"><path d="M6.41 5.02L6.55 5.46L7.37 5.56L7.37 6.44L6.55 6.54L6.41 6.98L6.37 7.08L6.15 7.49L6.67 8.15L6.05 8.77L5.39 8.25L4.98 8.47L4.88 8.51L4.44 8.65L4.34 9.47L3.46 9.47L3.36 8.65L2.92 8.51L2.82 8.47L2.41 8.25L1.75 8.77L1.13 8.15L1.65 7.49L1.43 7.08L1.39 6.98L1.25 6.54L0.43 6.44L0.43 5.56L1.25 5.46L1.39 5.02L1.43 4.92L1.65 4.51L1.13 3.85L1.75 3.23L2.41 3.75L2.82 3.53L2.92 3.49L3.36 3.35L3.46 2.53L4.34 2.53L4.44 3.35L4.88 3.49L4.98 3.53L5.39 3.75L6.05 3.23L6.67 3.85L6.15 4.51L6.37 4.92Z" fill="#e8e9ec"/><circle cx="3.9" cy="6" r="2.6" fill="#e8e9ec"/><circle cx="3.9" cy="6" r="1.0" fill="#32353f"/><path d="M9.29 1.79L9.44 2.15L9.97 2.23L9.97 2.97L9.44 3.05L9.29 3.41L9.25 3.49L9.01 3.79L9.20 4.30L8.57 4.66L8.23 4.24L7.84 4.30L7.76 4.30L7.37 4.24L7.03 4.66L6.40 4.30L6.59 3.79L6.35 3.49L6.31 3.41L6.16 3.05L5.63 2.97L5.63 2.23L6.16 2.15L6.31 1.79L6.35 1.71L6.59 1.41L6.40 0.90L7.03 0.54L7.37 0.96L7.76 0.90L7.84 0.90L8.23 0.96L8.57 0.54L9.20 0.90L9.01 1.41L9.25 1.71Z" fill="#e8e9ec"/><circle cx="7.8" cy="2.6" r="1.7" fill="#e8e9ec"/><circle cx="7.8" cy="2.6" r="0.7" fill="#32353f"/></svg>
<div class="r" style="left:384.70px;top:441.70px;width:14.50px;height:13.90px;background:#363945;border-radius:1px;"></div>
<svg class="r" style="left:386.30px;top:444.00px;" width="10" height="10" viewBox="0 0 10 10"><circle cx="5" cy="1.4" r="1.1" fill="#e8e9ec"/><circle cx="5" cy="5" r="1.1" fill="#e8e9ec"/><circle cx="5" cy="8.6" r="1.1" fill="#e8e9ec"/></svg>
<div class="r" style="left:593.70px;top:294.20px;width:164.60px;height:17.40px;background:#3d404c;border-radius:2px;"></div>
<div class="r" style="left:744.60px;top:294.20px;width:0.80px;height:17.40px;background:#2a2c35;"></div>
<svg class="r" style="left:748.50px;top:301.50px;" width="7" height="4" viewBox="0 0 7 4"><path d="M0.5 0.5H6.5L3.5 3.5Z" fill="#e8e8e8"/></svg>
<div class="t" style="left:600.00px;top:299.32px;font-size:8.48px;line-height:8.48px;color:#e4e5e9;letter-spacing:-0.221px;">Fade</div>
<div class="t" style="left:593.70px;top:318.92px;font-size:8.48px;line-height:8.48px;color:#e4e5e9;letter-spacing:-0.271px;">Duration</div>
<div class="r" style="left:628.00px;top:314.40px;width:130.30px;height:16.90px;background:#3d404c;border-radius:2px;"></div>
<div class="r" style="left:744.60px;top:314.40px;width:0.80px;height:16.90px;background:#2a2c35;"></div>
<svg class="r" style="left:749.50px;top:316.50px;" width="6" height="13" viewBox="0 0 6 13"><path d="M0.7 3.2L3 0.9L5.3 3.2M0.7 9.8L3 12.1L5.3 9.8" fill="none" stroke="#e0e0e0" stroke-width="0.9"/></svg>
<div class="t" style="left:634.00px;top:318.92px;font-size:8.48px;line-height:8.48px;color:#e4e5e9;letter-spacing:-0.221px;">300 ms</div>
<div class="r" style="left:703.00px;top:333.00px;width:14.70px;height:15.70px;background:#363945;border-radius:1px;"></div>
<svg class="r" style="left:705.60px;top:336.30px;" width="9.5" height="9.5" viewBox="0 0 10 10"><path d="M5 0.6V9.4M0.6 5H9.4" stroke="#e8e9ec" stroke-width="1.7"/></svg>
<svg class="r" style="left:726.00px;top:336.30px;" width="9.5" height="9.5" viewBox="0 0 10 10"><rect x="0.8" y="0.5" width="8.4" height="1.5" rx="0.6" fill="#e8e9ec"/><rect x="1.9" y="2.6" width="6.2" height="6.7" rx="1.3" fill="none" stroke="#e8e9ec" stroke-width="1.2"/><path d="M4.2 4.2V7.6M5.8 4.2V7.6" stroke="#e8e9ec" stroke-width="0.7" opacity="0.7"/></svg>
<svg class="r" style="left:745.00px;top:336.00px;" width="10" height="10" viewBox="0 0 10 10"><circle cx="5" cy="1.4" r="1.1" fill="#e8e9ec"/><circle cx="5" cy="5" r="1.1" fill="#e8e9ec"/><circle cx="5" cy="8.6" r="1.1" fill="#e8e9ec"/></svg>
<div class="r" style="left:768.20px;top:294.10px;width:128.00px;height:18.80px;background:#3d404c;border-radius:2px;"></div>
<div class="t" style="left:832.20px;top:299.62px;font-size:8.48px;line-height:8.48px;color:#e8e9ec;letter-spacing:-0.221px;transform:translateX(-50%);">Start Streaming</div>
<div class="r" style="left:768.20px;top:315.00px;width:128.00px;height:18.80px;background:#474b58;border-radius:2px;box-shadow:inset 0 0 0 0.8px #545763;"></div>
<div class="t" style="left:832.20px;top:320.52px;font-size:8.48px;line-height:8.48px;color:#e8e9ec;letter-spacing:-0.221px;transform:translateX(-50%);">Start Recording</div>
<div class="r" style="left:768.20px;top:357.30px;width:128.00px;height:18.80px;background:#3d404c;border-radius:2px;"></div>
<div class="t" style="left:832.20px;top:362.82px;font-size:8.48px;line-height:8.48px;color:#e8e9ec;letter-spacing:-0.221px;transform:translateX(-50%);">Studio Mode</div>
<div class="r" style="left:768.20px;top:378.40px;width:128.00px;height:18.80px;background:#3d404c;border-radius:2px;"></div>
<div class="t" style="left:832.20px;top:383.92px;font-size:8.48px;line-height:8.48px;color:#e8e9ec;letter-spacing:-0.221px;transform:translateX(-50%);">Settings</div>
<div class="r" style="left:768.20px;top:399.60px;width:128.00px;height:18.80px;background:#3d404c;border-radius:2px;"></div>
<div class="t" style="left:832.20px;top:405.12px;font-size:8.48px;line-height:8.48px;color:#e8e9ec;letter-spacing:-0.221px;transform:translateX(-50%);">Exit</div>
<div class="r" style="left:768.20px;top:336.00px;width:105.80px;height:18.80px;background:#3d404c;border-radius:2px;"></div>
<div class="t" style="left:821.10px;top:341.52px;font-size:8.48px;line-height:8.48px;color:#e8e9ec;letter-spacing:-0.221px;transform:translateX(-50%);">Start Virtual Camera</div>
<div class="r" style="left:877.00px;top:336.00px;width:19.00px;height:18.80px;background:#3d404c;border-radius:2px;"></div>
<svg class="r" style="left:881.80px;top:340.80px;" width="9.4" height="9.4" viewBox="0 0 10 10"><path d="M8.35 3.69L8.53 4.28L9.66 4.41L9.66 5.59L8.53 5.72L8.35 6.31L8.30 6.44L8.00 6.99L8.71 7.88L7.88 8.71L6.99 8.00L6.44 8.30L6.31 8.35L5.72 8.53L5.59 9.66L4.41 9.66L4.28 8.53L3.69 8.35L3.56 8.30L3.01 8.00L2.12 8.71L1.29 7.88L2.00 6.99L1.70 6.44L1.65 6.31L1.47 5.72L0.34 5.59L0.34 4.41L1.47 4.28L1.65 3.69L1.70 3.56L2.00 3.01L1.29 2.12L2.12 1.29L3.01 2.00L3.56 1.70L3.69 1.65L4.28 1.47L4.41 0.34L5.59 0.34L5.72 1.47L6.31 1.65L6.44 1.70L6.99 2.00L7.88 1.29L8.71 2.12L8.00 3.01L8.30 3.56Z" fill="#f4f4f4"/><circle cx="5" cy="5" r="3.5" fill="#f4f4f4"/><circle cx="5" cy="5" r="1.45" fill="#3a3d48"/></svg>
<div class="r" style="left:0.00px;top:458.50px;width:897.00px;height:20.00px;background:#252830;"></div>
<div class="r" style="left:653.20px;top:460.00px;width:0.80px;height:17.00px;background:#2c2e37;"></div>
<div class="r" style="left:673.40px;top:460.00px;width:0.80px;height:17.00px;background:#2c2e37;"></div>
<div class="r" style="left:725.00px;top:460.00px;width:0.80px;height:17.00px;background:#2c2e37;"></div>
<div class="r" style="left:825.20px;top:460.00px;width:0.80px;height:17.00px;background:#2c2e37;"></div>
<svg class="r" style="left:658.40px;top:462.50px;" width="9.2" height="9" viewBox="0 0 9.2 9"><path d="M0.5 8.5h1.3v-1.6h-1.3zM2.6 8.5h1.3v-3h-1.3zM4.7 8.5h1.3v-4.6h-1.3zM6.8 8.5h1.3v-6.4h-1.3zM8.9 8.5h0.3v-8h-0.3z" fill="#5e6068"/></svg>
<div class="r" style="left:681.00px;top:467.00px;width:3.70px;height:3.70px;background:#9fa0a5;border-radius:50%;"></div>
<div class="t" style="left:690.90px;top:465.70px;font-size:8.27px;line-height:8.27px;color:#8d8f96;letter-spacing:-0.215px;">00:00:00</div>
<div class="r" style="left:731.60px;top:464.50px;width:8.70px;height:8.70px;background:#4e5058;border-radius:50%;"></div>
<div class="t" style="left:744.00px;top:465.70px;font-size:8.27px;line-height:8.27px;color:#8d8f96;letter-spacing:-0.215px;">00:00:00</div>
<div class="t" style="left:784.50px;top:466.01px;font-size:7.9px;line-height:7.9px;color:#e4e5e9;letter-spacing:-0.206px;">CPU: 1.5%</div>
<div class="t" style="left:830.70px;top:465.97px;font-size:7.95px;line-height:7.95px;color:#e4e5e9;letter-spacing:-0.207px;">30.00 / 30.00 FPS</div>
<div class="r" style="left:0.00px;top:478.50px;width:900.00px;height:27.50px;background:#202020;"></div>
<svg class="r" style="left:11.80px;top:486.80px;" width="13" height="13" viewBox="0 0 13 13"><path d="M0.6 6.4Q0.9 1.2 6.5 1.2Q12.1 1.2 12.4 6.4Q10.9 5.4 9.6 6.4Q8 5.3 6.5 6.4Q5 5.3 3.4 6.4Q2.1 5.4 0.6 6.4Z" fill="#8cc4ee"/><path d="M6.5 6.2V10.9Q6.5 12.2 5.3 12" fill="none" stroke="#7a7a7a" stroke-width="0.9"/></svg>
<div class="r" style="left:18.30px;top:482.20px;width:8.90px;height:8.80px;background:#ef7f8c;border-radius:50%;"></div>
<div class="t" style="left:22.75px;top:483.56px;font-size:6.78px;line-height:6.78px;color:#3a1a1f;letter-spacing:-0.177px;transform:translateX(-50%);">1</div>
<div class="t" style="left:30.00px;top:483.55px;font-size:7.74px;line-height:7.74px;color:#f2f2f2;letter-spacing:-0.151px;">2 mm of rain</div>
<div class="t" style="left:30.00px;top:492.84px;font-size:7.63px;line-height:7.63px;color:#c4c4c4;letter-spacing:-0.169px;">Monday</div>
<svg class="r" style="left:287.10px;top:484.90px;" width="14.4" height="14.4" viewBox="0 0 14.4 14.4"><defs><linearGradient id="wg" x1="0" y1="0" x2="1" y2="1"><stop offset="0" stop-color="#6fd3ff"/><stop offset="1" stop-color="#1a9fe8"/></linearGradient></defs><rect x="0" y="0" width="6.8" height="6.8" fill="url(#wg)"/><rect x="7.6" y="0" width="6.8" height="6.8" fill="url(#wg)"/><rect x="0" y="7.6" width="6.8" height="6.8" fill="url(#wg)"/><rect x="7.6" y="7.6" width="6.8" height="6.8" fill="url(#wg)"/></svg>
<div class="r" style="left:308.40px;top:482.80px;width:128.90px;height:18.10px;background:#2e2e2e;border-radius:9px;box-shadow:inset 0 0 0 0.6px #3a3a3a;"></div>
<svg class="r" style="left:315.60px;top:487.60px;" width="9" height="9" viewBox="0 0 9 9"><circle cx="3.9" cy="3.9" r="3" fill="none" stroke="#e0e0e0" stroke-width="1.1"/><path d="M6.1 6.1L8.4 8.4" stroke="#e0e0e0" stroke-width="1.2"/></svg>
<div class="t" style="left:330.70px;top:488.78px;font-size:8.06px;line-height:8.06px;color:#d0d0d0;letter-spacing:-0.21px;">Search</div>
<svg class="r" style="left:409.00px;top:486.50px;" width="24" height="12" viewBox="0 0 24 12"><path d="M10 1L11.3 4.7L15 6L11.3 7.3L10 11L8.7 7.3L5 6L8.7 4.7Z" fill="#f5c531"/><path d="M18.5 5L19.2 7.3L21.5 8L19.2 8.7L18.5 11L17.8 8.7L15.5 8L17.8 7.3Z" fill="#f5c531"/><circle cx="2" cy="9.5" r="1" fill="#3a8fe0"/><circle cx="22.5" cy="11" r="0.8" fill="#7ab04a"/><circle cx="16" cy="2" r="0.6" fill="#e0603a"/></svg>
<div class="r" style="left:445.00px;top:489.00px;width:10.00px;height:9.00px;background:#6a6a6a;border-radius:1px;"></div>
<div class="r" style="left:448.20px;top:485.00px;width:11.00px;height:9.50px;background:#dcdcdc;border-radius:1px;"></div>
<svg class="r" style="left:470.00px;top:486.00px;" width="15.2" height="12.5" viewBox="0 0 15.2 12.5"><path d="M0.3 1.2Q0.3 0.3 1.2 0.3H5.5L7 1.8H14.1Q14.9 1.8 14.9 2.6V11.4Q14.9 12.2 14.1 12.2H1.1Q0.3 12.2 0.3 11.4Z" fill="#f2c64c"/><path d="M0.3 3.2H14.9" stroke="#d9a92e" stroke-width="0.5"/><rect x="4" y="9.2" width="7.2" height="3" fill="#2f78d8"/></svg>
<svg class="r" style="left:497.50px;top:484.50px;" width="12.5" height="14.5" viewBox="0 0 12.5 14.5"><path d="M2.2 0.8H10.3L12 3.2L11.2 9.8L6.25 14L1.3 9.8L0.5 3.2Z" fill="#f14c21"/><path d="M3.5 3.8L6.25 5.2L9 3.8L8.6 8.2L6.25 10.6L3.9 8.2Z" fill="#fbe9e4"/></svg>
<svg class="r" style="left:521.00px;top:486.00px;" width="14.8" height="13.3" viewBox="0 0 14.8 13.3"><defs><linearGradient id="sg" x1="0" y1="0" x2="0" y2="1"><stop offset="0" stop-color="#14205a"/><stop offset="1" stop-color="#1886c9"/></linearGradient></defs><ellipse cx="7.8" cy="6.65" rx="6.6" ry="6.5" fill="url(#sg)"/><circle cx="9.8" cy="4.4" r="2.4" fill="#e8ecf2"/><circle cx="9.8" cy="4.4" r="1.1" fill="#5a6a90"/><path d="M0.4 6.3L5.5 8.6Q7 9.4 8.2 7.8L9.2 6" stroke="#e8ecf2" stroke-width="2" fill="none"/></svg>
<svg class="r" style="left:548.00px;top:484.50px;" width="14.4" height="14.4" viewBox="0 0 14.4 14.4"><circle cx="7.2" cy="7.2" r="7" fill="#1ed760"/><path d="M3.4 5.3Q7.6 3.9 11.2 5.9M3.9 7.6Q7.3 6.6 10.4 8.2M4.3 9.8Q7 9 9.5 10.2" fill="none" stroke="#0f3a20" stroke-width="1.1" stroke-linecap="round"/></svg>
<div class="r" style="left:573.80px;top:484.30px;width:14.30px;height:15.30px;background:#3561f5;border-radius:2.5px;"></div>
<svg class="r" style="left:575.50px;top:486.00px;" width="11" height="12" viewBox="0 0 11 12"><path d="M3.2 1.6L10 3.4L8.2 10.4L1.4 8.6Z" fill="#ffffff"/><rect x="5" y="5.2" width="1.6" height="1.6" fill="#3561f5"/></svg>
<div class="r" style="left:594.00px;top:480.00px;width:24.70px;height:23.90px;background:#2a2a2a;border-radius:3px;"></div>
<svg class="r" style="left:599.70px;top:484.50px;" width="13.8" height="14" viewBox="0 0 14 14"><circle cx="7" cy="7" r="6.2" fill="#141414" stroke="#d4d4d4" stroke-width="1.3"/><path d="M7 7Q5.2 5.6 6.2 2.2M7 7Q9.1 6.3 11 8.9M7 7Q6.9 9.3 3.6 10.2" fill="none" stroke="#bdbdbd" stroke-width="0.9"/></svg>
<div class="r" style="left:601.80px;top:501.40px;width:9.70px;height:1.90px;background:#4cc2ff;border-radius:1px;"></div>
<div class="r" style="left:476.00px;top:501.70px;width:3.20px;height:1.00px;background:#8a8a8a;border-radius:0.5px;"></div>
<div class="r" style="left:501.40px;top:501.70px;width:3.20px;height:1.00px;background:#8a8a8a;border-radius:0.5px;"></div>
<div class="r" style="left:526.80px;top:501.70px;width:3.20px;height:1.00px;background:#8a8a8a;border-radius:0.5px;"></div>
<div class="r" style="left:553.20px;top:501.70px;width:3.20px;height:1.00px;background:#8a8a8a;border-radius:0.5px;"></div>
<div class="r" style="left:579.20px;top:501.70px;width:3.20px;height:1.00px;background:#8a8a8a;border-radius:0.5px;"></div>
<svg class="r" style="left:743.60px;top:489.30px;" width="7" height="4.6" viewBox="0 0 7 4.6"><path d="M0.6 4L3.5 1L6.4 4" fill="none" stroke="#f0f0f0" stroke-width="1"/></svg>
<svg class="r" style="left:761.50px;top:486.30px;" width="7.5" height="10" viewBox="0 0 7.5 10"><rect x="2.3" y="0.5" width="3" height="5.8" rx="1.5" fill="#5fc6d0"/><path d="M0.9 4.4Q0.9 7.6 3.8 7.6Q6.6 7.6 6.6 4.4M3.8 7.6V9.6" fill="none" stroke="#5fc6d0" stroke-width="0.9"/></svg>
<div class="t" style="left:787.80px;top:484.50px;font-size:7.21px;line-height:7.21px;color:#ededed;letter-spacing:-0.188px;transform:translateX(-50%);">ENG</div>
<div class="t" style="left:788.00px;top:493.70px;font-size:7.21px;line-height:7.21px;color:#ededed;letter-spacing:-0.188px;transform:translateX(-50%);">US</div>
<svg class="r" style="left:805.60px;top:488.00px;" width="8.4" height="7" viewBox="0 0 8.4 7"><path d="M0.5 2.4Q4.2 -0.6 7.9 2.4L4.2 6.6Z" fill="#8e8e8e"/><path d="M2 4.2Q4.2 2.6 6.4 4.2L4.2 6.6Z" fill="#e8e8e8"/></svg>
<svg class="r" style="left:818.80px;top:486.60px;" width="10" height="10" viewBox="0 0 10 10"><path d="M0.6 3.6H2.6L5.2 1.2V8.8L2.6 6.4H0.6Z" fill="none" stroke="#eeeeee" stroke-width="0.9"/><path d="M6.6 3.2Q7.5 5 6.6 6.8M8.1 2Q9.6 5 8.1 8" fill="none" stroke="#eeeeee" stroke-width="0.9"/></svg>
<svg class="r" style="left:833.00px;top:486.50px;" width="10.5" height="9.5" viewBox="0 0 10.5 9.5"><rect x="0.5" y="2.5" width="8.6" height="5.8" rx="1" fill="#eeeeee"/><rect x="9.3" y="4.2" width="1" height="2.4" fill="#eeeeee"/><path d="M2.2 0.4V2.6M4.2 0.4V2.6" stroke="#eeeeee" stroke-width="0.7"/></svg>
<div class="t" style="right:11.30px;top:483.42px;font-size:7.53px;line-height:7.53px;color:#f0f0f0;letter-spacing:-0.196px;">5:36 PM</div>
<div class="t" style="right:11.50px;top:492.92px;font-size:7.53px;line-height:7.53px;color:#f0f0f0;letter-spacing:-0.196px;">2025-11-21</div>
<svg class="r" style="left:674.30px;top:440.30px;" width="7.5" height="10.5" viewBox="0 0 7.5 10.5"><path d="M0.7 0.7V8.6L2.6 6.9L4 9.9L5.4 9.3L4.1 6.4H6.7Z" fill="#ffffff" stroke="#000000" stroke-width="0.8" stroke-linejoin="round"/></svg></div></body></html>
